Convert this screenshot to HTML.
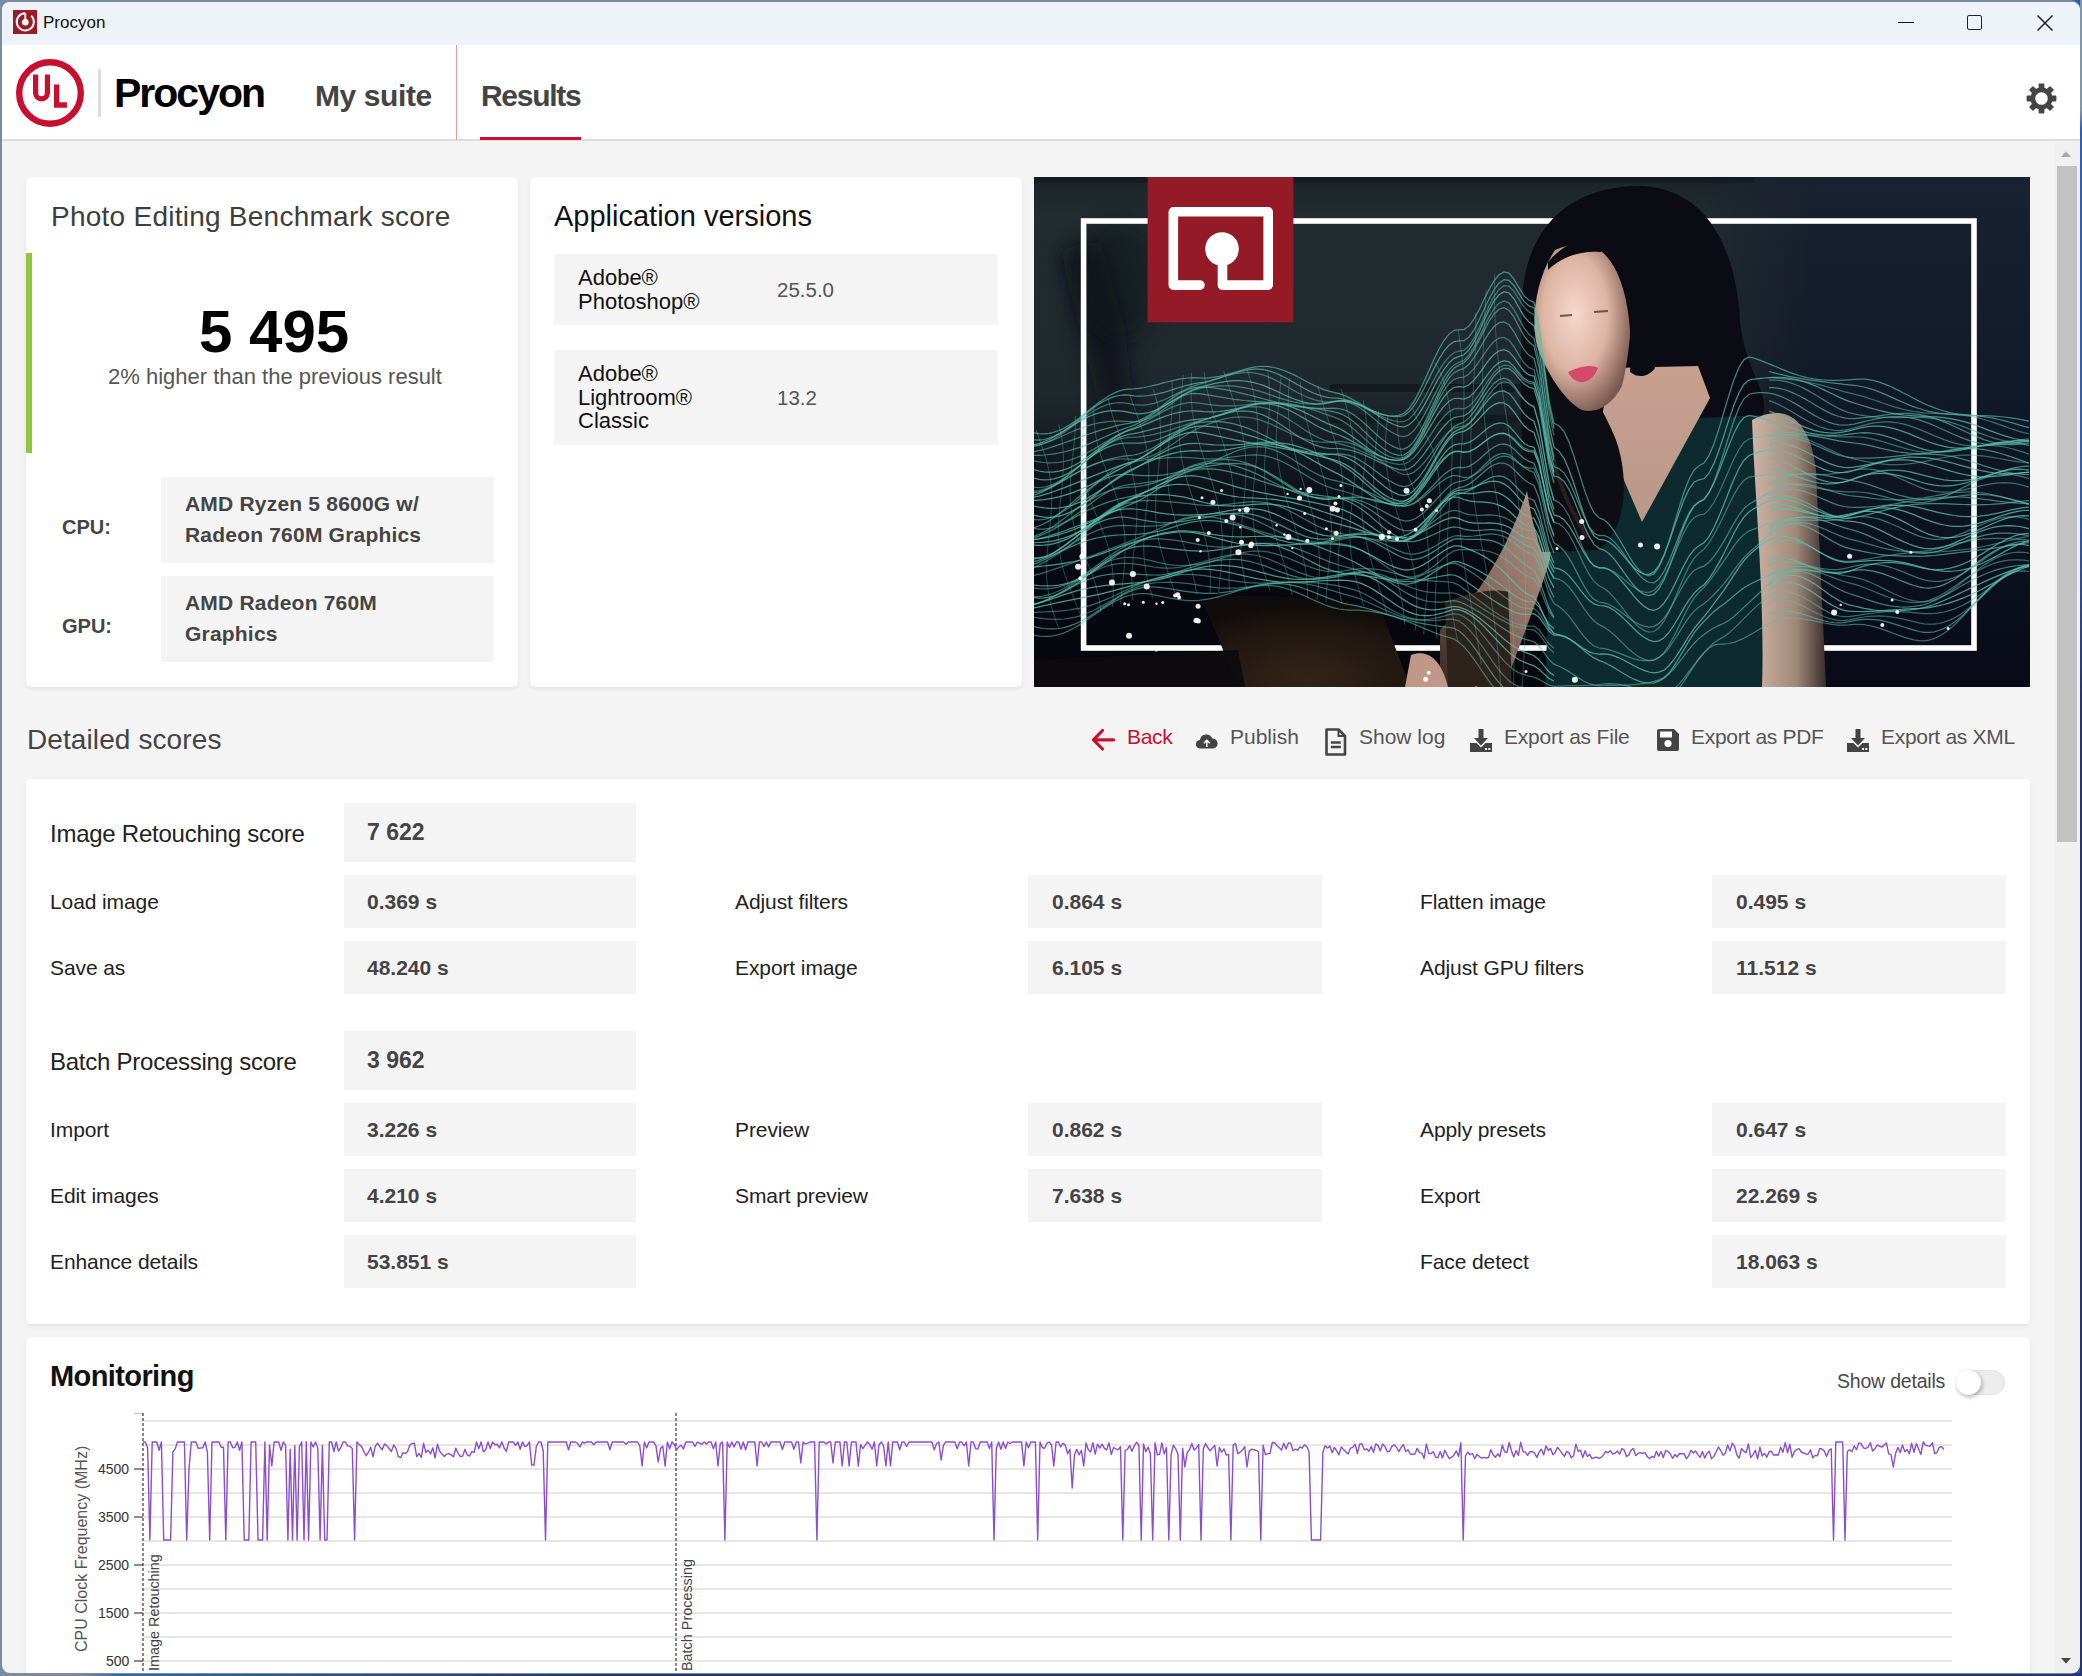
<!DOCTYPE html>
<html><head><meta charset="utf-8">
<style>
*{margin:0;padding:0;box-sizing:border-box}
html,body{width:2082px;height:1676px;overflow:hidden;background:#243a6e;font-family:"Liberation Sans",sans-serif}
.a{position:absolute}
.t{position:absolute;white-space:nowrap;line-height:1.149}
.card{position:absolute;background:#fff;border-radius:5px;box-shadow:0 2px 4px rgba(0,0,0,.08)}
.box{position:absolute;background:#f4f4f4}
</style></head><body>

<div class="a" style="left:0;top:0;width:2082px;height:1676px;background:linear-gradient(90deg,#6d8fb0 0,#5a7aa0 50%,#2c5cb8 100%)"></div>
<div class="a" style="left:0;top:1673px;width:2082px;height:3px;background:linear-gradient(90deg,#7f8b98 0,#7f8b98 80px,#2f6aa0 120px,#27366a 600px,#27366a 100%)"></div>
<div class="a" style="left:2080px;top:0;width:2px;height:1676px;background:linear-gradient(#7f97a8 0,#7f97a8 110px,#2e5cb8 130px,#2e5cb8 500px,#28356a 700px)"></div>
<div class="a" style="left:0;top:0;width:2080px;height:1674px;background:#7b8c9c;border-radius:9px 9px 9px 9px;overflow:hidden">
<div class="a" style="left:2px;top:2px;width:2078px;height:1671px;background:#f4f4f4;border-radius:8px 8px 8px 8px;overflow:hidden">
<div class="a" style="left:-2px;top:-2px;width:2082px;height:1676px">
<div class="a" style="left:0;top:0;width:2082px;height:45px;background:#eef2f9"></div>
<div class="a" style="left:13px;top:10px;width:24px;height:24px;background:#9a1a28"></div>
<svg class="a" style="left:13px;top:10px" width="24" height="24" viewBox="0 0 24 24"><path d="M18.2 5.6 A8.6 8.6 0 1 1 12.3 3.2" fill="none" stroke="#fff" stroke-width="1.9"/><line x1="12.3" y1="3.4" x2="12.3" y2="11" stroke="#fff" stroke-width="1.9"/><circle cx="12.3" cy="12.3" r="3.3" fill="#fff"/></svg>
<div class="t" style="left:43px;top:13.3px;font-size:17px;font-weight:400;color:#111;">Procyon</div>
<div class="a" style="left:1898px;top:22px;width:16px;height:1px;background:#111"></div>
<div class="a" style="left:1967px;top:15px;width:15px;height:15px;border:1.5px solid #222;border-radius:2px"></div>
<svg class="a" style="left:2036px;top:14px" width="18" height="18" viewBox="0 0 18 18"><path d="M1.5 1.5L16.5 16.5M16.5 1.5L1.5 16.5" stroke="#222" stroke-width="1.5"/></svg>
<div class="a" style="left:0;top:45px;width:2082px;height:94px;background:#fff"></div>
<div class="a" style="left:0;top:139px;width:2082px;height:2px;background:#dcdcdc"></div>
<svg class="a" style="left:14px;top:57px" width="72" height="72" viewBox="0 0 72 72"><circle cx="36" cy="36" r="30.8" fill="none" stroke="#c8102e" stroke-width="6.4"/><path d="M19 17.5h5.2v18.5a3.3 3.3 0 0 0 6.6 0V17.5H36v18.5a8.5 8.5 0 0 1-17 0z" fill="#c8102e"/><path d="M40 27.5h5.3v17.8h7.6v5.4H40z" fill="#c8102e"/></svg>
<div class="a" style="left:98px;top:69px;width:3px;height:48px;background:#dedede"></div>
<div class="t" style="left:114px;top:70.2px;font-size:41px;font-weight:700;color:#000;letter-spacing:-2px">Procyon</div>
<div class="t" style="left:315px;top:79.4px;font-size:30px;font-weight:700;color:#444;letter-spacing:-0.4px">My suite</div>
<div class="t" style="left:481px;top:79.4px;font-size:30px;font-weight:700;color:#444;letter-spacing:-1.3px">Results</div>
<div class="a" style="left:456px;top:45px;width:1px;height:95px;background:#e39aa3"></div>
<div class="a" style="left:480px;top:137px;width:101px;height:3px;background:#c8102e"></div>
<svg class="a" style="left:2021px;top:79px" width="41" height="40" viewBox="0 0 41 40"><rect x="17.6" y="4.6" width="5.8" height="8" rx="0.8" fill="#444" transform="rotate(0 20.5 19.5)"/><rect x="17.6" y="4.6" width="5.8" height="8" rx="0.8" fill="#444" transform="rotate(45 20.5 19.5)"/><rect x="17.6" y="4.6" width="5.8" height="8" rx="0.8" fill="#444" transform="rotate(90 20.5 19.5)"/><rect x="17.6" y="4.6" width="5.8" height="8" rx="0.8" fill="#444" transform="rotate(135 20.5 19.5)"/><rect x="17.6" y="4.6" width="5.8" height="8" rx="0.8" fill="#444" transform="rotate(180 20.5 19.5)"/><rect x="17.6" y="4.6" width="5.8" height="8" rx="0.8" fill="#444" transform="rotate(225 20.5 19.5)"/><rect x="17.6" y="4.6" width="5.8" height="8" rx="0.8" fill="#444" transform="rotate(270 20.5 19.5)"/><rect x="17.6" y="4.6" width="5.8" height="8" rx="0.8" fill="#444" transform="rotate(315 20.5 19.5)"/><circle cx="20.5" cy="19.5" r="11" fill="#444"/><circle cx="20.5" cy="19.5" r="6.3" fill="#fff"/></svg>
<div class="a" style="left:2055px;top:141px;width:25px;height:1535px;background:#f0f0f0"></div>
<svg class="a" style="left:2060px;top:150px" width="12" height="8"><path d="M1 7L6 1.5L11 7Z" fill="#a8a8a8"/></svg>
<div class="a" style="left:2057px;top:166px;width:20px;height:676px;background:#c2c2c2"></div>
<svg class="a" style="left:2060px;top:1657px" width="12" height="8"><path d="M1 1L6 6.5L11 1Z" fill="#444"/></svg>
<div class="card" style="left:26px;top:177px;width:492px;height:510px"></div>
<div class="t" style="left:51px;top:201.2px;font-size:28px;font-weight:400;color:#3d3d3d;letter-spacing:0.25px">Photo Editing Benchmark score</div>
<div class="a" style="left:26px;top:253px;width:6px;height:200px;background:#8dc63f"></div>
<div class="t" style="left:199px;top:297.7px;font-size:60px;font-weight:700;color:#000;">5 495</div>
<div class="t" style="left:108px;top:363.7px;font-size:22px;font-weight:400;color:#555;">2% higher than the previous result</div>
<div class="box" style="left:161px;top:477px;width:333px;height:86px"></div>
<div class="box" style="left:161px;top:576px;width:333px;height:86px"></div>
<div class="t" style="left:62px;top:515.6px;font-size:20px;font-weight:700;color:#444;">CPU:</div>
<div class="t" style="left:62px;top:614.6px;font-size:20px;font-weight:700;color:#444;">GPU:</div>
<div class="t" style="left:185px;top:491.7px;font-size:21px;font-weight:700;color:#444;letter-spacing:0.2px">AMD Ryzen 5 8600G w/</div>
<div class="t" style="left:185px;top:522.7px;font-size:21px;font-weight:700;color:#444;letter-spacing:0.2px">Radeon 760M Graphics</div>
<div class="t" style="left:185px;top:590.7px;font-size:21px;font-weight:700;color:#444;letter-spacing:0.2px">AMD Radeon 760M</div>
<div class="t" style="left:185px;top:621.7px;font-size:21px;font-weight:700;color:#444;letter-spacing:0.2px">Graphics</div>
<div class="card" style="left:530px;top:177px;width:492px;height:510px"></div>
<div class="t" style="left:554px;top:200.3px;font-size:29px;font-weight:400;color:#111;">Application versions</div>
<div class="box" style="left:554px;top:254px;width:444px;height:71px"></div>
<div class="box" style="left:554px;top:350px;width:444px;height:95px"></div>
<div class="t" style="left:578px;top:264.7px;font-size:22px;font-weight:400;color:#111;">Adobe®</div>
<div class="t" style="left:578px;top:288.7px;font-size:22px;font-weight:400;color:#111;">Photoshop®</div>
<div class="t" style="left:777px;top:278.1px;font-size:20.5px;font-weight:400;color:#555;">25.5.0</div>
<div class="t" style="left:578px;top:360.7px;font-size:22px;font-weight:400;color:#111;">Adobe®</div>
<div class="t" style="left:578px;top:384.7px;font-size:22px;font-weight:400;color:#111;">Lightroom®</div>
<div class="t" style="left:578px;top:407.7px;font-size:22px;font-weight:400;color:#111;">Classic</div>
<div class="t" style="left:777px;top:386.1px;font-size:20.5px;font-weight:400;color:#555;">13.2</div>
<svg class="a" style="left:1034px;top:177px" width="996" height="510" viewBox="0 0 996 510"><defs><linearGradient id="bg" x1="0" y1="0" x2="0" y2="1"><stop offset="0" stop-color="#1c2529"/><stop offset=".08" stop-color="#222c30"/><stop offset=".42" stop-color="#1f292d"/><stop offset=".62" stop-color="#0c1117"/><stop offset=".8" stop-color="#060810"/><stop offset="1" stop-color="#05070c"/></linearGradient><radialGradient id="face" cx=".42" cy=".42" r=".62"><stop offset="0" stop-color="#f4d8cc"/><stop offset=".55" stop-color="#ddb4a2"/><stop offset="1" stop-color="#7a5a50"/></radialGradient><linearGradient id="arm" x1="0" y1="0" x2="1" y2="0"><stop offset="0" stop-color="#cdb4a6"/><stop offset=".6" stop-color="#a08878"/><stop offset="1" stop-color="#3a2e2c"/></linearGradient><linearGradient id="neck" x1="0" y1="0" x2="0" y2="1"><stop offset="0" stop-color="#c8a090"/><stop offset="1" stop-color="#b89888"/></linearGradient><linearGradient id="larm" x1="1" y1="0" x2="0" y2="1"><stop offset="0" stop-color="#c8a898"/><stop offset=".6" stop-color="#8a6a5c"/><stop offset="1" stop-color="#3a2a24"/></linearGradient><radialGradient id="lap" cx=".5" cy=".9" r=".8"><stop offset="0" stop-color="#33241a"/><stop offset=".7" stop-color="#1e1610"/><stop offset="1" stop-color="#100c0b"/></radialGradient><linearGradient id="rbg" x1="0" y1="0" x2="0" y2="1"><stop offset="0" stop-color="#1a2130"/><stop offset=".45" stop-color="#111827"/><stop offset="1" stop-color="#080b16"/></linearGradient></defs><rect width="996" height="510" fill="url(#bg)"/><linearGradient id="rfade" x1="0" y1="0" x2="1" y2="0"><stop offset="0" stop-color="#000"/><stop offset=".35" stop-color="#fff"/></linearGradient><mask id="rm"><rect x="666" y="0" width="330" height="510" fill="url(#rfade)"/></mask><rect x="666" y="0" width="330" height="510" fill="url(#rbg)" mask="url(#rm)"/><rect x="0" y="0" width="720" height="6" fill="#10161a" opacity=".6"/><rect x="296" y="207" width="190" height="8" fill="#0f1519" opacity=".7"/><rect x="296" y="238" width="190" height="8" fill="#0f1519" opacity=".6"/><filter id="bl" x="-50%" y="-50%" width="200%" height="200%"><feGaussianBlur stdDeviation="10"/></filter><path d="M26.0 73.0 L66.0 63.0 L91.0 153.0 L101.0 243.0 L71.0 253.0 L46.0 153.0Z" fill="#0a1016" opacity=".7" filter="url(#bl)"/><ellipse cx="86" cy="103" rx="40" ry="60" fill="#0c1318" opacity=".5" filter="url(#bl)"/><rect x="49.59999999999991" y="44" width="890.4000000000001" height="427" fill="none" stroke="#fff" stroke-width="5.6"/><path d="M168.0 421.0 C226.0 415.0 306.0 423.0 348.0 435.0 L376.0 510.0 L204.0 510.0Z" fill="url(#lap)"/><path d="M0.0 483.0 L204.0 473.0 L211.0 510.0 L0.0 510.0Z" fill="#0d0b0c" opacity=".9"/><path d="M508.0 263.0 C494.0 323.0 468.0 383.0 438.0 421.0 L406.0 453.0 L406.0 510.0 L471.0 510.0 C486.0 463.0 514.0 403.0 532.0 323.0Z" fill="url(#larm)"/><path d="M411.0 425.0 C436.0 415.0 461.0 411.0 474.0 415.0 L478.0 510.0 L414.0 510.0Z" fill="#2e221d"/><path d="M377.0 478.0 C391.0 473.0 406.0 478.0 414.0 510.0 L371.0 510.0Z" fill="#c09888"/><path d="M521.0 263.0 L541.0 223.0 L668.0 218.0 L731.0 241.0 L738.0 510.0 L511.0 510.0Z" fill="#0d2a2e"/><path d="M718.0 243.0 C751.0 225.0 776.0 241.0 782.0 293.0 L792.0 510.0 L728.0 510.0 C731.0 423.0 721.0 323.0 718.0 243.0Z" fill="url(#arm)"/><path d="M488.0 143.0 C484.0 53.0 534.0 9.0 606.0 9.0 C674.0 11.0 702.0 73.0 706.0 143.0 C710.0 193.0 738.0 219.0 728.0 238.0 L666.0 241.0 L566.0 253.0 L496.0 253.0Z" fill="#0b0c13"/><path d="M578.0 191.0 L664.0 189.0 L676.0 221.0 L608.0 345.0 L566.0 248.0Z" fill="url(#neck)"/><path d="M488.0 143.0 C484.0 243.0 488.0 323.0 508.0 375.0 L564.0 373.0 C592.0 355.0 596.0 303.0 582.0 263.0 C570.0 233.0 551.0 203.0 536.0 183.0Z" fill="#0d0d14"/><path d="M514.0 253.0 C521.0 303.0 536.0 333.0 554.0 361.0" fill="none" stroke="#4a3028" stroke-width="4" opacity=".5"/><path d="M521.0 73.0 C546.0 61.0 581.0 67.0 594.0 89.0 C600.0 123.0 597.0 173.0 588.0 209.0 C578.0 229.0 561.0 237.0 548.0 233.0 C531.0 225.0 512.0 195.0 503.0 169.0 C497.0 143.0 501.0 103.0 521.0 73.0Z" fill="url(#face)"/><path d="M534.0 195.0 C546.0 189.0 558.0 187.0 564.0 191.0 C558.0 207.0 542.0 211.0 534.0 195.0Z" fill="#d44a6a"/><path d="M526.0 139.0 l12 -1 M560.0 135.0 l14 -1" stroke="#3a2420" stroke-width="2.2" opacity=".7"/><path d="M558.0 69.0 C590.0 81.0 600.0 143.0 596.0 195.0 C606.0 203.0 616.0 198.0 621.0 191.0 C618.0 143.0 612.0 73.0 582.0 57.0Z" fill="#0b0c13"/><path d="M514.0 85.0 C536.0 59.0 566.0 55.0 586.0 69.0 L566.0 75.0 C546.0 73.0 526.0 81.0 514.0 93.0Z" fill="#0b0c13"/><path d="M0.0 255.8 L5.0 256.6 L10.0 256.8 L15.0 256.3 L20.0 255.2 L25.0 253.5 L30.0 251.1 L35.0 248.2 L40.0 244.9 L45.0 241.2 L50.0 237.3 L55.0 233.3 L60.0 229.3 L65.0 225.5 L70.0 221.9 L75.0 218.8 L80.0 216.1 L85.0 214.1 L90.0 212.7 L95.0 212.1 L100.0 211.8 L105.0 211.3 L110.0 210.5 L115.0 209.5 L120.0 208.3 L125.0 207.1 L130.0 205.7 L135.0 204.5 L140.0 203.3 L145.0 202.2 L150.0 201.5 L155.0 200.9 L160.0 200.7 L165.0 200.8 L170.0 201.0 L175.0 200.8 L180.0 200.2 L185.0 199.4 L190.0 198.3 L195.0 196.9 L200.0 195.5 L205.0 194.0 L210.0 192.6 L215.0 191.2 L220.0 190.1 L225.0 189.5 L230.0 189.3 L235.0 189.7 L240.0 190.5 L245.0 191.8 L250.0 193.5 L255.0 195.6 L260.0 197.9 L265.0 200.5 L270.0 203.2 L275.0 205.8 L280.0 208.3 L285.0 210.6 L290.0 212.6 L295.0 214.2 L300.0 215.4 L305.0 216.6 L310.0 218.3 L315.0 220.6 L320.0 223.3 L325.0 226.1 L330.0 229.0 L335.0 231.8 L340.0 234.3 L345.0 236.4 L350.0 237.9 L355.0 238.8 L360.0 238.9 L365.0 238.3 L370.0 236.3 L375.0 231.5 L380.0 224.3 L385.0 215.1 L390.0 204.6 L395.0 193.4 L400.0 182.3 L405.0 172.1 L410.0 163.5 L415.0 157.1 L420.0 153.3 L425.0 152.5 L430.0 152.5 L435.0 148.9 L440.0 142.0 L445.0 132.9 L450.0 122.6 L455.0 112.6 L460.0 103.9 L465.0 97.8 L470.0 94.9 L475.0 96.1 L480.0 102.1 L485.0 110.7 L490.0 118.7 L495.0 123.3 L500.0 125.3 L505.0 147.2 L510.0 185.6 L515.0 224.0 L520.0 246.3" fill="none" stroke="#5cbfae" stroke-width="1.25" opacity="0.66"/><path d="M735.0 186.8 L740.0 188.9 L745.0 191.0 L750.0 193.1 L755.0 195.1 L760.0 196.9 L765.0 198.5 L770.0 199.8 L775.0 201.0 L780.0 201.9 L785.0 202.6 L790.0 203.0 L795.0 203.3 L800.0 203.3 L805.0 203.3 L810.0 203.1 L815.0 202.8 L820.0 202.4 L825.0 202.1 L830.0 202.2 L835.0 202.7 L840.0 203.7 L845.0 205.1 L850.0 206.8 L855.0 208.8 L860.0 211.1 L865.0 213.6 L870.0 216.2 L875.0 218.8 L880.0 221.5 L885.0 224.1 L890.0 226.5 L895.0 228.7 L900.0 230.7 L905.0 232.5 L910.0 234.0 L915.0 235.3 L920.0 236.3 L925.0 237.0 L930.0 237.6 L935.0 238.0 L940.0 238.3 L945.0 238.5 L950.0 238.7 L955.0 238.9 L960.0 239.2 L965.0 239.5 L970.0 240.0 L975.0 240.6 L980.0 241.3 L985.0 242.1 L990.0 243.1 L995.0 244.1" fill="none" stroke="#5cbfae" stroke-width="1.25" opacity="0.66"/><path d="M520.0 246.3 L525.0 248.8 L530.0 254.4 L535.0 265.1 L540.0 279.4 L545.0 295.6 L550.0 311.6 L555.0 325.6 L560.0 335.7 L565.0 340.8 L570.0 342.9 L575.0 347.3 L580.0 353.8 L585.0 361.7 L590.0 370.4 L595.0 379.0 L600.0 386.9 L605.0 393.1 L610.0 397.2 L615.0 398.8 L620.0 396.9 L625.0 390.0 L630.0 378.8 L635.0 364.2 L640.0 347.8 L645.0 330.9 L650.0 315.3 L655.0 302.3 L660.0 293.2 L665.0 288.8 L670.0 286.1 L675.0 278.6 L680.0 266.7 L685.0 251.6 L690.0 234.8 L695.0 217.9 L700.0 202.5 L705.0 190.4 L710.0 182.6 L715.0 180.0 L720.0 181.2 L725.0 182.9 L730.0 184.8 L735.0 186.8" fill="none" stroke="#5cbfae" stroke-width="1.25" opacity="0.66"/><path d="M0.0 262.8 L5.0 263.0 L10.0 262.5 L15.0 261.2 L20.0 259.3 L25.0 256.8 L30.0 253.7 L35.0 250.2 L40.0 246.4 L45.0 242.4 L50.0 238.3 L55.0 234.3 L60.0 230.5 L65.0 227.1 L70.0 224.0 L75.0 221.6 L80.0 219.7 L85.0 218.5 L90.0 218.0 L95.0 218.2 L100.0 218.8 L105.0 219.1 L110.0 219.0 L115.0 218.5 L120.0 217.7 L125.0 216.6 L130.0 215.3 L135.0 213.8 L140.0 212.2 L145.0 210.7 L150.0 209.2 L155.0 207.8 L160.0 206.7 L165.0 205.9 L170.0 205.1 L175.0 204.0 L180.0 202.7 L185.0 201.2 L190.0 199.5 L195.0 197.9 L200.0 196.3 L205.0 194.8 L210.0 193.6 L215.0 192.6 L220.0 192.1 L225.0 192.1 L230.0 192.7 L235.0 193.9 L240.0 195.5 L245.0 197.6 L250.0 200.0 L255.0 202.7 L260.0 205.6 L265.0 208.5 L270.0 211.3 L275.0 213.9 L280.0 216.3 L285.0 218.2 L290.0 219.7 L295.0 220.6 L300.0 221.0 L305.0 221.4 L310.0 222.3 L315.0 223.7 L320.0 225.4 L325.0 227.5 L330.0 229.8 L335.0 232.1 L340.0 234.3 L345.0 236.3 L350.0 237.9 L355.0 239.0 L360.0 239.7 L365.0 239.7 L370.0 238.6 L375.0 234.8 L380.0 228.8 L385.0 220.8 L390.0 211.5 L395.0 201.4 L400.0 191.4 L405.0 182.1 L410.0 174.2 L415.0 168.3 L420.0 164.7 L425.0 163.9 L430.0 163.7 L435.0 159.9 L440.0 152.8 L445.0 143.3 L450.0 132.6 L455.0 122.1 L460.0 112.9 L465.0 106.2 L470.0 102.7 L475.0 103.4 L480.0 108.7 L485.0 116.7 L490.0 124.4 L495.0 128.9 L500.0 131.0 L505.0 152.7 L510.0 190.7 L515.0 228.9 L520.0 251.4" fill="none" stroke="#5cbfae" stroke-width="1.25" opacity="0.68"/><path d="M735.0 194.5 L740.0 195.8 L745.0 197.0 L750.0 198.2 L755.0 199.3 L760.0 200.3 L765.0 201.2 L770.0 202.1 L775.0 202.9 L780.0 203.6 L785.0 204.2 L790.0 204.9 L795.0 205.5 L800.0 206.1 L805.0 206.7 L810.0 207.3 L815.0 207.8 L820.0 208.4 L825.0 209.0 L830.0 210.0 L835.0 211.3 L840.0 212.9 L845.0 214.8 L850.0 216.9 L855.0 219.1 L860.0 221.4 L865.0 223.6 L870.0 225.8 L875.0 227.9 L880.0 229.8 L885.0 231.5 L890.0 233.0 L895.0 234.3 L900.0 235.3 L905.0 236.1 L910.0 236.7 L915.0 237.2 L920.0 237.5 L925.0 237.8 L930.0 238.0 L935.0 238.3 L940.0 238.7 L945.0 239.1 L950.0 239.7 L955.0 240.5 L960.0 241.4 L965.0 242.5 L970.0 243.7 L975.0 245.0 L980.0 246.4 L985.0 247.8 L990.0 249.3 L995.0 250.6" fill="none" stroke="#5cbfae" stroke-width="1.25" opacity="0.68"/><path d="M0.0 268.4 L5.0 267.8 L10.0 266.4 L15.0 264.4 L20.0 261.9 L25.0 258.8 L30.0 255.4 L35.0 251.8 L40.0 248.0 L45.0 244.1 L50.0 240.4 L55.0 237.0 L60.0 233.8 L65.0 231.1 L70.0 228.9 L75.0 227.2 L80.0 226.2 L85.0 225.7 L90.0 225.9 L95.0 226.6 L100.0 227.6 L105.0 228.0 L110.0 228.0 L115.0 227.4 L120.0 226.3 L125.0 224.7 L130.0 222.8 L135.0 220.5 L140.0 218.1 L145.0 215.6 L150.0 213.2 L155.0 210.9 L160.0 208.9 L165.0 207.3 L170.0 205.9 L175.0 204.3 L180.0 202.7 L185.0 201.1 L190.0 199.5 L195.0 198.1 L200.0 197.0 L205.0 196.2 L210.0 195.7 L215.0 195.5 L220.0 195.9 L225.0 196.8 L230.0 198.2 L235.0 200.1 L240.0 202.4 L245.0 205.0 L250.0 207.9 L255.0 210.7 L260.0 213.6 L265.0 216.3 L270.0 218.8 L275.0 220.9 L280.0 222.7 L285.0 223.9 L290.0 224.6 L295.0 224.8 L300.0 224.4 L305.0 224.0 L310.0 224.3 L315.0 225.1 L320.0 226.5 L325.0 228.3 L330.0 230.5 L335.0 233.0 L340.0 235.5 L345.0 238.0 L350.0 240.3 L355.0 242.3 L360.0 243.8 L365.0 244.9 L370.0 244.7 L375.0 242.0 L380.0 237.0 L385.0 230.0 L390.0 221.5 L395.0 212.2 L400.0 202.6 L405.0 193.6 L410.0 185.8 L415.0 179.6 L420.0 175.7 L425.0 174.2 L430.0 173.4 L435.0 168.8 L440.0 161.1 L445.0 151.1 L450.0 139.9 L455.0 128.9 L460.0 119.4 L465.0 112.4 L470.0 108.7 L475.0 109.2 L480.0 114.4 L485.0 122.4 L490.0 130.2 L495.0 135.0 L500.0 137.7 L505.0 159.6 L510.0 197.5 L515.0 235.6 L520.0 258.4" fill="none" stroke="#5cbfae" stroke-width="1.25" opacity="0.52"/><path d="M735.0 200.5 L740.0 200.9 L745.0 201.3 L750.0 201.8 L755.0 202.3 L760.0 202.9 L765.0 203.6 L770.0 204.5 L775.0 205.4 L780.0 206.5 L785.0 207.6 L790.0 208.9 L795.0 210.3 L800.0 211.7 L805.0 213.1 L810.0 214.6 L815.0 215.9 L820.0 217.2 L825.0 218.3 L830.0 219.7 L835.0 221.3 L840.0 223.0 L845.0 224.7 L850.0 226.5 L855.0 228.2 L860.0 229.8 L865.0 231.2 L870.0 232.5 L875.0 233.6 L880.0 234.5 L885.0 235.2 L890.0 235.8 L895.0 236.2 L900.0 236.5 L905.0 236.7 L910.0 236.9 L915.0 237.1 L920.0 237.4 L925.0 237.8 L930.0 238.4 L935.0 239.1 L940.0 240.0 L945.0 241.2 L950.0 242.5 L955.0 244.0 L960.0 245.6 L965.0 247.4 L970.0 249.2 L975.0 251.0 L980.0 252.7 L985.0 254.3 L990.0 255.7 L995.0 256.9" fill="none" stroke="#5cbfae" stroke-width="1.25" opacity="0.52"/><path d="M0.0 267.8 L5.0 266.5 L10.0 264.7 L15.0 262.5 L20.0 259.8 L25.0 256.9 L30.0 253.9 L35.0 250.7 L40.0 247.6 L45.0 244.7 L50.0 241.9 L55.0 239.5 L60.0 237.4 L65.0 235.8 L70.0 234.6 L75.0 233.9 L80.0 233.6 L85.0 233.8 L90.0 234.4 L95.0 235.4 L100.0 236.4 L105.0 236.8 L110.0 236.4 L115.0 235.5 L120.0 233.9 L125.0 231.7 L130.0 229.1 L135.0 226.2 L140.0 223.2 L145.0 220.1 L150.0 217.2 L155.0 214.5 L160.0 212.3 L165.0 210.6 L170.0 209.2 L175.0 207.9 L180.0 206.7 L185.0 205.6 L190.0 204.7 L195.0 204.1 L200.0 203.7 L205.0 203.7 L210.0 204.0 L215.0 204.6 L220.0 205.6 L225.0 207.0 L230.0 208.7 L235.0 210.8 L240.0 213.0 L245.0 215.3 L250.0 217.7 L255.0 219.9 L260.0 222.0 L265.0 223.7 L270.0 225.2 L275.0 226.2 L280.0 226.8 L285.0 227.0 L290.0 226.7 L295.0 225.9 L300.0 224.8 L305.0 223.8 L310.0 223.7 L315.0 224.2 L320.0 225.5 L325.0 227.5 L330.0 230.0 L335.0 232.9 L340.0 236.0 L345.0 239.2 L350.0 242.3 L355.0 245.1 L360.0 247.5 L365.0 249.3 L370.0 249.9 L375.0 247.8 L380.0 243.4 L385.0 236.8 L390.0 228.6 L395.0 219.4 L400.0 209.9 L405.0 200.7 L410.0 192.5 L415.0 185.8 L420.0 181.3 L425.0 179.3 L430.0 177.8 L435.0 172.9 L440.0 164.9 L445.0 154.8 L450.0 143.8 L455.0 133.2 L460.0 124.2 L465.0 117.8 L470.0 114.7 L475.0 116.0 L480.0 121.9 L485.0 130.7 L490.0 139.3 L495.0 145.1 L500.0 148.7 L505.0 171.2 L510.0 209.1 L515.0 247.2 L520.0 270.1" fill="none" stroke="#5cbfae" stroke-width="1.25" opacity="0.75"/><path d="M735.0 200.6 L740.0 200.4 L745.0 200.4 L750.0 200.6 L755.0 201.2 L760.0 202.0 L765.0 203.2 L770.0 204.6 L775.0 206.4 L780.0 208.4 L785.0 210.5 L790.0 212.9 L795.0 215.3 L800.0 217.7 L805.0 220.1 L810.0 222.3 L815.0 224.3 L820.0 226.0 L825.0 227.5 L830.0 229.0 L835.0 230.6 L840.0 232.0 L845.0 233.4 L850.0 234.6 L855.0 235.7 L860.0 236.6 L865.0 237.4 L870.0 238.0 L875.0 238.4 L880.0 238.8 L885.0 239.1 L890.0 239.3 L895.0 239.6 L900.0 239.9 L905.0 240.2 L910.0 240.7 L915.0 241.4 L920.0 242.3 L925.0 243.4 L930.0 244.6 L935.0 246.1 L940.0 247.7 L945.0 249.5 L950.0 251.4 L955.0 253.3 L960.0 255.2 L965.0 257.0 L970.0 258.7 L975.0 260.2 L980.0 261.5 L985.0 262.5 L990.0 263.1 L995.0 263.4" fill="none" stroke="#5cbfae" stroke-width="1.25" opacity="0.75"/><path d="M520.0 270.1 L525.0 274.4 L530.0 281.3 L535.0 292.7 L540.0 307.0 L545.0 322.7 L550.0 337.8 L555.0 350.4 L560.0 359.0 L565.0 362.4 L570.0 362.8 L575.0 364.9 L580.0 368.7 L585.0 373.8 L590.0 379.6 L595.0 385.4 L600.0 390.7 L605.0 394.7 L610.0 397.0 L615.0 397.4 L620.0 394.9 L625.0 388.3 L630.0 378.1 L635.0 365.1 L640.0 350.6 L645.0 336.1 L650.0 322.8 L655.0 312.2 L660.0 305.3 L665.0 302.8 L670.0 301.8 L675.0 296.2 L680.0 286.4 L685.0 273.3 L690.0 258.2 L695.0 242.6 L700.0 227.9 L705.0 215.7 L710.0 207.2 L715.0 203.1 L720.0 202.2 L725.0 201.6 L730.0 201.0 L735.0 200.6" fill="none" stroke="#5cbfae" stroke-width="1.25" opacity="0.75"/><path d="M0.0 269.3 L5.0 268.1 L10.0 266.5 L15.0 264.7 L20.0 262.6 L25.0 260.5 L30.0 258.2 L35.0 256.0 L40.0 253.9 L45.0 251.8 L50.0 250.0 L55.0 248.4 L60.0 247.0 L65.0 245.9 L70.0 245.1 L75.0 244.5 L80.0 244.2 L85.0 244.1 L90.0 244.3 L95.0 244.6 L100.0 244.9 L105.0 244.3 L110.0 243.1 L115.0 241.1 L120.0 238.5 L125.0 235.4 L130.0 232.0 L135.0 228.4 L140.0 224.7 L145.0 221.2 L150.0 218.0 L155.0 215.3 L160.0 213.1 L165.0 211.6 L170.0 210.7 L175.0 209.9 L180.0 209.3 L185.0 208.9 L190.0 208.8 L195.0 208.9 L200.0 209.2 L205.0 209.8 L210.0 210.6 L215.0 211.6 L220.0 212.7 L225.0 214.1 L230.0 215.7 L235.0 217.3 L240.0 219.1 L245.0 220.8 L250.0 222.4 L255.0 223.8 L260.0 225.0 L265.0 225.9 L270.0 226.6 L275.0 226.9 L280.0 227.0 L285.0 226.7 L290.0 226.2 L295.0 225.4 L300.0 224.4 L305.0 223.8 L310.0 224.1 L315.0 225.3 L320.0 227.4 L325.0 230.3 L330.0 233.7 L335.0 237.6 L340.0 241.8 L345.0 245.9 L350.0 249.9 L355.0 253.5 L360.0 256.5 L365.0 258.8 L370.0 259.7 L375.0 257.9 L380.0 253.4 L385.0 246.8 L390.0 238.4 L395.0 228.8 L400.0 218.9 L405.0 209.1 L410.0 200.3 L415.0 193.1 L420.0 187.9 L425.0 185.3 L430.0 183.3 L435.0 178.2 L440.0 170.3 L445.0 160.5 L450.0 150.0 L455.0 140.1 L460.0 131.8 L465.0 126.2 L470.0 124.0 L475.0 126.0 L480.0 132.6 L485.0 141.9 L490.0 151.0 L495.0 157.3 L500.0 161.3 L505.0 183.6 L510.0 220.8 L515.0 258.0 L520.0 280.2" fill="none" stroke="#5cbfae" stroke-width="1.25" opacity="0.57"/><path d="M735.0 203.2 L740.0 203.1 L745.0 203.4 L750.0 204.2 L755.0 205.4 L760.0 207.0 L765.0 209.0 L770.0 211.4 L775.0 214.1 L780.0 217.0 L785.0 220.0 L790.0 223.1 L795.0 226.1 L800.0 229.0 L805.0 231.6 L810.0 233.8 L815.0 235.6 L820.0 236.9 L825.0 237.9 L830.0 238.7 L835.0 239.3 L840.0 239.8 L845.0 240.2 L850.0 240.4 L855.0 240.5 L860.0 240.5 L865.0 240.5 L870.0 240.4 L875.0 240.3 L880.0 240.3 L885.0 240.5 L890.0 240.7 L895.0 241.1 L900.0 241.7 L905.0 242.5 L910.0 243.6 L915.0 244.9 L920.0 246.3 L925.0 248.0 L930.0 249.8 L935.0 251.8 L940.0 253.8 L945.0 255.8 L950.0 257.7 L955.0 259.5 L960.0 261.1 L965.0 262.5 L970.0 263.6 L975.0 264.4 L980.0 264.9 L985.0 265.0 L990.0 264.7 L995.0 264.1" fill="none" stroke="#5cbfae" stroke-width="1.25" opacity="0.57"/><path d="M0.0 274.7 L5.0 273.7 L10.0 272.5 L15.0 271.0 L20.0 269.4 L25.0 267.7 L30.0 266.0 L35.0 264.2 L40.0 262.3 L45.0 260.5 L50.0 258.7 L55.0 257.0 L60.0 255.3 L65.0 253.7 L70.0 252.2 L75.0 250.8 L80.0 249.4 L85.0 248.2 L90.0 247.2 L95.0 246.3 L100.0 245.2 L105.0 243.5 L110.0 241.1 L115.0 238.2 L120.0 234.8 L125.0 231.2 L130.0 227.4 L135.0 223.6 L140.0 220.0 L145.0 216.8 L150.0 214.1 L155.0 212.0 L160.0 210.6 L165.0 210.1 L170.0 210.1 L175.0 210.4 L180.0 210.9 L185.0 211.6 L190.0 212.4 L195.0 213.4 L200.0 214.5 L205.0 215.6 L210.0 216.8 L215.0 218.0 L220.0 219.3 L225.0 220.6 L230.0 222.0 L235.0 223.3 L240.0 224.7 L245.0 226.0 L250.0 227.1 L255.0 228.2 L260.0 229.1 L265.0 229.8 L270.0 230.4 L275.0 230.9 L280.0 231.1 L285.0 231.3 L290.0 231.3 L295.0 231.3 L300.0 231.1 L305.0 231.5 L310.0 232.8 L315.0 235.0 L320.0 238.0 L325.0 241.8 L330.0 246.0 L335.0 250.6 L340.0 255.2 L345.0 259.7 L350.0 263.8 L355.0 267.2 L360.0 269.9 L365.0 271.8 L370.0 272.0 L375.0 269.4 L380.0 264.1 L385.0 256.5 L390.0 247.1 L395.0 236.6 L400.0 225.6 L405.0 214.9 L410.0 205.2 L415.0 197.2 L420.0 191.3 L425.0 188.1 L430.0 185.8 L435.0 180.6 L440.0 172.9 L445.0 163.6 L450.0 153.8 L455.0 144.5 L460.0 137.0 L465.0 132.2 L470.0 130.7 L475.0 133.2 L480.0 140.2 L485.0 149.7 L490.0 158.8 L495.0 165.0 L500.0 168.9 L505.0 190.5 L510.0 226.4 L515.0 262.2 L520.0 283.3" fill="none" stroke="#5cbfae" stroke-width="1.25" opacity="0.64"/><path d="M735.0 210.6 L740.0 210.7 L745.0 211.4 L750.0 212.5 L755.0 214.2 L760.0 216.3 L765.0 218.7 L770.0 221.4 L775.0 224.3 L780.0 227.3 L785.0 230.3 L790.0 233.1 L795.0 235.6 L800.0 237.8 L805.0 239.5 L810.0 240.8 L815.0 241.5 L820.0 241.6 L825.0 241.2 L830.0 240.7 L835.0 240.1 L840.0 239.5 L845.0 238.8 L850.0 238.1 L855.0 237.5 L860.0 236.9 L865.0 236.6 L870.0 236.4 L875.0 236.4 L880.0 236.8 L885.0 237.4 L890.0 238.4 L895.0 239.6 L900.0 241.0 L905.0 242.8 L910.0 244.8 L915.0 246.9 L920.0 249.2 L925.0 251.6 L930.0 254.0 L935.0 256.3 L940.0 258.6 L945.0 260.7 L950.0 262.6 L955.0 264.2 L960.0 265.5 L965.0 266.5 L970.0 267.2 L975.0 267.5 L980.0 267.5 L985.0 267.2 L990.0 266.6 L995.0 265.8" fill="none" stroke="#5cbfae" stroke-width="1.25" opacity="0.64"/><path d="M0.0 278.3 L5.0 278.3 L10.0 278.0 L15.0 277.5 L20.0 276.9 L25.0 276.0 L30.0 275.0 L35.0 273.7 L40.0 272.2 L45.0 270.6 L50.0 268.8 L55.0 266.8 L60.0 264.7 L65.0 262.6 L70.0 260.3 L75.0 258.1 L80.0 255.8 L85.0 253.7 L90.0 251.7 L95.0 250.0 L100.0 248.1 L105.0 245.8 L110.0 242.9 L115.0 239.7 L120.0 236.2 L125.0 232.7 L130.0 229.2 L135.0 225.8 L140.0 222.8 L145.0 220.3 L150.0 218.3 L155.0 217.0 L160.0 216.4 L165.0 216.6 L170.0 217.3 L175.0 218.1 L180.0 218.9 L185.0 219.8 L190.0 220.7 L195.0 221.5 L200.0 222.3 L205.0 222.9 L210.0 223.5 L215.0 223.9 L220.0 224.3 L225.0 224.7 L230.0 225.1 L235.0 225.6 L240.0 226.1 L245.0 226.6 L250.0 227.2 L255.0 227.8 L260.0 228.4 L265.0 229.1 L270.0 229.8 L275.0 230.6 L280.0 231.4 L285.0 232.2 L290.0 233.1 L295.0 233.9 L300.0 234.8 L305.0 236.1 L310.0 238.3 L315.0 241.3 L320.0 245.1 L325.0 249.4 L330.0 254.1 L335.0 259.0 L340.0 263.7 L345.0 268.1 L350.0 271.9 L355.0 275.0 L360.0 277.2 L365.0 278.4 L370.0 278.0 L375.0 274.7 L380.0 268.9 L385.0 260.8 L390.0 251.0 L395.0 240.2 L400.0 229.2 L405.0 218.5 L410.0 209.0 L415.0 201.2 L420.0 195.7 L425.0 193.1 L430.0 191.5 L435.0 187.3 L440.0 180.7 L445.0 172.6 L450.0 164.0 L455.0 155.9 L460.0 149.6 L465.0 145.7 L470.0 144.8 L475.0 147.7 L480.0 154.8 L485.0 164.0 L490.0 172.7 L495.0 178.3 L500.0 181.5 L505.0 201.9 L510.0 236.1 L515.0 270.1 L520.0 289.6" fill="none" stroke="#5cbfae" stroke-width="1.25" opacity="0.64"/><path d="M735.0 216.1 L740.0 217.1 L745.0 218.7 L750.0 220.7 L755.0 223.2 L760.0 225.9 L765.0 228.9 L770.0 232.0 L775.0 235.1 L780.0 238.1 L785.0 240.8 L790.0 243.3 L795.0 245.3 L800.0 246.8 L805.0 247.8 L810.0 248.1 L815.0 247.9 L820.0 247.1 L825.0 245.9 L830.0 244.7 L835.0 243.5 L840.0 242.3 L845.0 241.3 L850.0 240.5 L855.0 239.9 L860.0 239.6 L865.0 239.6 L870.0 239.9 L875.0 240.6 L880.0 241.6 L885.0 242.9 L890.0 244.6 L895.0 246.4 L900.0 248.5 L905.0 250.7 L910.0 253.0 L915.0 255.2 L920.0 257.5 L925.0 259.6 L930.0 261.6 L935.0 263.3 L940.0 264.8 L945.0 266.0 L950.0 266.9 L955.0 267.5 L960.0 267.7 L965.0 267.7 L970.0 267.4 L975.0 266.9 L980.0 266.2 L985.0 265.4 L990.0 264.5 L995.0 263.6" fill="none" stroke="#5cbfae" stroke-width="1.25" opacity="0.64"/><path d="M520.0 289.6 L525.0 291.6 L530.0 295.9 L535.0 304.1 L540.0 315.2 L545.0 327.6 L550.0 339.6 L555.0 349.6 L560.0 356.2 L565.0 358.6 L570.0 358.5 L575.0 360.5 L580.0 364.6 L585.0 370.4 L590.0 377.3 L595.0 384.6 L600.0 391.7 L605.0 397.8 L610.0 402.6 L615.0 405.5 L620.0 405.8 L625.0 402.0 L630.0 394.5 L635.0 384.0 L640.0 371.7 L645.0 358.7 L650.0 346.4 L655.0 336.1 L660.0 328.7 L665.0 325.1 L670.0 322.7 L675.0 315.7 L680.0 304.7 L685.0 290.7 L690.0 275.0 L695.0 258.7 L700.0 243.5 L705.0 230.8 L710.0 221.8 L715.0 217.2 L720.0 216.1 L725.0 215.6 L730.0 215.6 L735.0 216.1" fill="none" stroke="#5cbfae" stroke-width="1.25" opacity="0.64"/><path d="M0.0 283.9 L5.0 284.8 L10.0 285.5 L15.0 285.8 L20.0 285.7 L25.0 285.3 L30.0 284.5 L35.0 283.3 L40.0 281.7 L45.0 279.7 L50.0 277.4 L55.0 274.9 L60.0 272.1 L65.0 269.1 L70.0 266.1 L75.0 263.0 L80.0 260.1 L85.0 257.3 L90.0 254.8 L95.0 252.7 L100.0 250.7 L105.0 248.3 L110.0 245.6 L115.0 242.8 L120.0 239.8 L125.0 236.9 L130.0 234.1 L135.0 231.6 L140.0 229.4 L145.0 227.7 L150.0 226.4 L155.0 225.7 L160.0 225.6 L165.0 226.1 L170.0 226.9 L175.0 227.6 L180.0 228.2 L185.0 228.6 L190.0 228.9 L195.0 228.9 L200.0 228.8 L205.0 228.5 L210.0 228.0 L215.0 227.4 L220.0 226.7 L225.0 226.2 L230.0 225.8 L235.0 225.6 L240.0 225.5 L245.0 225.7 L250.0 226.1 L255.0 226.8 L260.0 227.7 L265.0 228.8 L270.0 230.1 L275.0 231.6 L280.0 233.2 L285.0 234.9 L290.0 236.7 L295.0 238.4 L300.0 240.1 L305.0 242.1 L310.0 244.9 L315.0 248.3 L320.0 252.2 L325.0 256.6 L330.0 261.1 L335.0 265.6 L340.0 269.9 L345.0 273.7 L350.0 276.9 L355.0 279.3 L360.0 280.8 L365.0 281.4 L370.0 280.4 L375.0 276.7 L380.0 270.7 L385.0 262.6 L390.0 253.0 L395.0 242.6 L400.0 232.1 L405.0 222.2 L410.0 213.5 L415.0 206.7 L420.0 202.2 L425.0 200.6 L430.0 200.1 L435.0 197.0 L440.0 191.6 L445.0 184.7 L450.0 177.3 L455.0 170.2 L460.0 164.5 L465.0 161.1 L470.0 160.5 L475.0 163.2 L480.0 169.7 L485.0 178.2 L490.0 186.0 L495.0 190.6 L500.0 192.8 L505.0 211.6 L510.0 244.0 L515.0 276.2 L520.0 294.3" fill="none" stroke="#5cbfae" stroke-width="1.25" opacity="0.55"/><path d="M735.0 223.6 L740.0 225.4 L745.0 227.6 L750.0 230.2 L755.0 233.0 L760.0 236.0 L765.0 239.1 L770.0 242.0 L775.0 244.8 L780.0 247.3 L785.0 249.5 L790.0 251.2 L795.0 252.5 L800.0 253.3 L805.0 253.5 L810.0 253.2 L815.0 252.3 L820.0 251.0 L825.0 249.5 L830.0 248.1 L835.0 246.9 L840.0 245.9 L845.0 245.3 L850.0 244.9 L855.0 244.9 L860.0 245.3 L865.0 246.0 L870.0 247.1 L875.0 248.6 L880.0 250.3 L885.0 252.2 L890.0 254.3 L895.0 256.4 L900.0 258.6 L905.0 260.6 L910.0 262.6 L915.0 264.3 L920.0 265.9 L925.0 267.1 L930.0 268.1 L935.0 268.7 L940.0 269.0 L945.0 269.1 L950.0 268.8 L955.0 268.3 L960.0 267.6 L965.0 266.7 L970.0 265.8 L975.0 264.8 L980.0 263.9 L985.0 263.1 L990.0 262.4 L995.0 261.9" fill="none" stroke="#5cbfae" stroke-width="1.25" opacity="0.55"/><path d="M0.0 292.7 L5.0 294.0 L10.0 294.8 L15.0 295.1 L20.0 294.9 L25.0 294.1 L30.0 292.8 L35.0 290.9 L40.0 288.5 L45.0 285.7 L50.0 282.5 L55.0 279.0 L60.0 275.3 L65.0 271.6 L70.0 267.8 L75.0 264.2 L80.0 260.9 L85.0 257.9 L90.0 255.4 L95.0 253.4 L100.0 251.8 L105.0 249.9 L110.0 247.9 L115.0 245.8 L120.0 243.7 L125.0 241.7 L130.0 239.7 L135.0 238.0 L140.0 236.5 L145.0 235.3 L150.0 234.5 L155.0 234.0 L160.0 233.9 L165.0 234.2 L170.0 234.7 L175.0 234.9 L180.0 234.8 L185.0 234.5 L190.0 233.9 L195.0 233.1 L200.0 232.1 L205.0 231.0 L210.0 229.8 L215.0 228.5 L220.0 227.4 L225.0 226.5 L230.0 226.0 L235.0 225.8 L240.0 226.0 L245.0 226.7 L250.0 227.7 L255.0 229.1 L260.0 230.8 L265.0 232.8 L270.0 235.1 L275.0 237.5 L280.0 240.0 L285.0 242.5 L290.0 244.9 L295.0 247.2 L300.0 249.2 L305.0 251.3 L310.0 254.1 L315.0 257.2 L320.0 260.7 L325.0 264.5 L330.0 268.3 L335.0 272.0 L340.0 275.4 L345.0 278.3 L350.0 280.6 L355.0 282.3 L360.0 283.1 L365.0 283.2 L370.0 281.9 L375.0 278.2 L380.0 272.3 L385.0 264.6 L390.0 255.6 L395.0 246.0 L400.0 236.4 L405.0 227.5 L410.0 219.9 L415.0 214.0 L420.0 210.5 L425.0 209.7 L430.0 210.1 L435.0 207.8 L440.0 203.1 L445.0 196.9 L450.0 189.8 L455.0 183.0 L460.0 177.4 L465.0 173.8 L470.0 172.7 L475.0 174.7 L480.0 180.3 L485.0 187.6 L490.0 194.2 L495.0 197.9 L500.0 199.1 L505.0 216.7 L510.0 247.5 L515.0 278.3 L520.0 295.7" fill="none" stroke="#5cbfae" stroke-width="1.25" opacity="0.76"/><path d="M735.0 234.0 L740.0 235.9 L745.0 238.1 L750.0 240.5 L755.0 242.9 L760.0 245.3 L765.0 247.7 L770.0 249.8 L775.0 251.7 L780.0 253.3 L785.0 254.6 L790.0 255.4 L795.0 255.9 L800.0 256.0 L805.0 255.7 L810.0 254.9 L815.0 253.9 L820.0 252.6 L825.0 251.2 L830.0 250.1 L835.0 249.4 L840.0 249.1 L845.0 249.1 L850.0 249.6 L855.0 250.4 L860.0 251.6 L865.0 253.1 L870.0 254.8 L875.0 256.7 L880.0 258.8 L885.0 260.9 L890.0 263.0 L895.0 265.0 L900.0 266.7 L905.0 268.2 L910.0 269.4 L915.0 270.3 L920.0 270.9 L925.0 271.1 L930.0 271.1 L935.0 270.7 L940.0 270.2 L945.0 269.4 L950.0 268.5 L955.0 267.6 L960.0 266.6 L965.0 265.7 L970.0 264.9 L975.0 264.3 L980.0 263.8 L985.0 263.7 L990.0 263.8 L995.0 264.2" fill="none" stroke="#5cbfae" stroke-width="1.25" opacity="0.76"/><path d="M0.0 301.1 L5.0 302.3 L10.0 302.8 L15.0 302.7 L20.0 301.9 L25.0 300.4 L30.0 298.4 L35.0 295.7 L40.0 292.6 L45.0 289.0 L50.0 285.2 L55.0 281.3 L60.0 277.2 L65.0 273.3 L70.0 269.5 L75.0 266.1 L80.0 263.1 L85.0 260.6 L90.0 258.7 L95.0 257.4 L100.0 256.6 L105.0 255.6 L110.0 254.4 L115.0 253.2 L120.0 251.9 L125.0 250.6 L130.0 249.2 L135.0 247.8 L140.0 246.5 L145.0 245.3 L150.0 244.2 L155.0 243.3 L160.0 242.6 L165.0 242.1 L170.0 241.7 L175.0 241.0 L180.0 239.9 L185.0 238.6 L190.0 237.1 L195.0 235.4 L200.0 233.6 L205.0 231.9 L210.0 230.3 L215.0 228.8 L220.0 227.6 L225.0 226.9 L230.0 226.7 L235.0 227.0 L240.0 227.9 L245.0 229.2 L250.0 231.0 L255.0 233.2 L260.0 235.7 L265.0 238.5 L270.0 241.4 L275.0 244.3 L280.0 247.2 L285.0 250.0 L290.0 252.4 L295.0 254.6 L300.0 256.3 L305.0 258.0 L310.0 260.1 L315.0 262.6 L320.0 265.2 L325.0 268.1 L330.0 271.0 L335.0 273.9 L340.0 276.6 L345.0 278.9 L350.0 280.9 L355.0 282.3 L360.0 283.1 L365.0 283.4 L370.0 282.5 L375.0 279.4 L380.0 274.4 L385.0 267.7 L390.0 259.9 L395.0 251.6 L400.0 243.3 L405.0 235.6 L410.0 229.1 L415.0 224.2 L420.0 221.5 L425.0 221.4 L430.0 222.2 L435.0 220.2 L440.0 215.9 L445.0 209.7 L450.0 202.7 L455.0 195.7 L460.0 189.7 L465.0 185.6 L470.0 183.7 L475.0 184.9 L480.0 189.6 L485.0 195.9 L490.0 201.6 L495.0 204.5 L500.0 205.3 L505.0 222.0 L510.0 251.9 L515.0 281.9 L520.0 299.0" fill="none" stroke="#5cbfae" stroke-width="1.25" opacity="0.72"/><path d="M735.0 243.3 L740.0 244.9 L745.0 246.6 L750.0 248.3 L755.0 250.0 L760.0 251.7 L765.0 253.2 L770.0 254.6 L775.0 255.8 L780.0 256.8 L785.0 257.5 L790.0 258.0 L795.0 258.3 L800.0 258.4 L805.0 258.2 L810.0 257.8 L815.0 257.2 L820.0 256.6 L825.0 256.0 L830.0 255.7 L835.0 255.9 L840.0 256.5 L845.0 257.4 L850.0 258.6 L855.0 260.1 L860.0 261.7 L865.0 263.6 L870.0 265.5 L875.0 267.3 L880.0 269.2 L885.0 270.8 L890.0 272.3 L895.0 273.4 L900.0 274.2 L905.0 274.7 L910.0 274.8 L915.0 274.6 L920.0 274.1 L925.0 273.4 L930.0 272.5 L935.0 271.4 L940.0 270.3 L945.0 269.1 L950.0 268.0 L955.0 267.1 L960.0 266.3 L965.0 265.7 L970.0 265.5 L975.0 265.5 L980.0 265.8 L985.0 266.4 L990.0 267.3 L995.0 268.4" fill="none" stroke="#5cbfae" stroke-width="1.25" opacity="0.72"/><path d="M520.0 299.0 L525.0 300.4 L530.0 304.3 L535.0 312.3 L540.0 323.3 L545.0 335.9 L550.0 348.5 L555.0 359.4 L560.0 367.4 L565.0 371.4 L570.0 373.1 L575.0 376.6 L580.0 381.9 L585.0 388.3 L590.0 395.3 L595.0 402.4 L600.0 408.8 L605.0 413.9 L610.0 417.3 L615.0 418.6 L620.0 417.2 L625.0 411.7 L630.0 402.7 L635.0 390.7 L640.0 376.9 L645.0 362.6 L650.0 349.1 L655.0 337.6 L660.0 329.2 L665.0 324.8 L670.0 322.0 L675.0 315.6 L680.0 306.0 L685.0 294.2 L690.0 281.3 L695.0 268.2 L700.0 256.2 L705.0 246.6 L710.0 240.5 L715.0 238.4 L720.0 239.3 L725.0 240.5 L730.0 241.8 L735.0 243.3" fill="none" stroke="#5cbfae" stroke-width="1.25" opacity="0.72"/><path d="M0.0 310.3 L5.0 310.6 L10.0 310.1 L15.0 308.8 L20.0 306.9 L25.0 304.4 L30.0 301.3 L35.0 297.7 L40.0 293.7 L45.0 289.6 L50.0 285.3 L55.0 281.0 L60.0 276.9 L65.0 273.0 L70.0 269.6 L75.0 266.6 L80.0 264.1 L85.0 262.2 L90.0 261.0 L95.0 260.4 L100.0 260.2 L105.0 259.8 L110.0 259.2 L115.0 258.4 L120.0 257.4 L125.0 256.2 L130.0 254.8 L135.0 253.3 L140.0 251.6 L145.0 250.0 L150.0 248.3 L155.0 246.7 L160.0 245.3 L165.0 244.0 L170.0 242.9 L175.0 241.5 L180.0 239.9 L185.0 238.2 L190.0 236.4 L195.0 234.7 L200.0 233.1 L205.0 231.8 L210.0 230.7 L215.0 229.9 L220.0 229.6 L225.0 229.9 L230.0 230.8 L235.0 232.2 L240.0 234.2 L245.0 236.6 L250.0 239.4 L255.0 242.5 L260.0 245.8 L265.0 249.1 L270.0 252.4 L275.0 255.6 L280.0 258.4 L285.0 260.9 L290.0 263.0 L295.0 264.6 L300.0 265.7 L305.0 266.6 L310.0 267.8 L315.0 269.4 L320.0 271.2 L325.0 273.2 L330.0 275.5 L335.0 277.7 L340.0 280.0 L345.0 282.1 L350.0 283.9 L355.0 285.5 L360.0 286.6 L365.0 287.3 L370.0 287.0 L375.0 284.7 L380.0 280.5 L385.0 274.7 L390.0 267.8 L395.0 260.3 L400.0 252.7 L405.0 245.6 L410.0 239.5 L415.0 234.7 L420.0 231.9 L425.0 231.5 L430.0 231.8 L435.0 229.3 L440.0 224.4 L445.0 217.6 L450.0 209.9 L455.0 202.3 L460.0 195.6 L465.0 190.7 L470.0 188.1 L475.0 188.5 L480.0 192.5 L485.0 198.2 L490.0 203.5 L495.0 206.2 L500.0 207.1 L505.0 223.7 L510.0 253.3 L515.0 283.2 L520.0 300.6" fill="none" stroke="#5cbfae" stroke-width="1.25" opacity="0.52"/><path d="M735.0 253.4 L740.0 253.9 L745.0 254.4 L750.0 254.9 L755.0 255.5 L760.0 256.0 L765.0 256.6 L770.0 257.1 L775.0 257.6 L780.0 258.1 L785.0 258.5 L790.0 258.9 L795.0 259.3 L800.0 259.5 L805.0 259.8 L810.0 259.9 L815.0 259.9 L820.0 259.9 L825.0 260.0 L830.0 260.4 L835.0 261.2 L840.0 262.3 L845.0 263.6 L850.0 265.0 L855.0 266.6 L860.0 268.2 L865.0 269.7 L870.0 271.2 L875.0 272.5 L880.0 273.7 L885.0 274.6 L890.0 275.2 L895.0 275.4 L900.0 275.4 L905.0 275.1 L910.0 274.6 L915.0 273.8 L920.0 272.9 L925.0 272.0 L930.0 271.1 L935.0 270.2 L940.0 269.4 L945.0 268.9 L950.0 268.5 L955.0 268.4 L960.0 268.6 L965.0 269.1 L970.0 269.9 L975.0 271.0 L980.0 272.3 L985.0 273.8 L990.0 275.4 L995.0 277.2" fill="none" stroke="#5cbfae" stroke-width="1.25" opacity="0.52"/><path d="M0.0 315.7 L5.0 314.9 L10.0 313.4 L15.0 311.2 L20.0 308.4 L25.0 305.2 L30.0 301.5 L35.0 297.6 L40.0 293.5 L45.0 289.4 L50.0 285.3 L55.0 281.4 L60.0 277.8 L65.0 274.6 L70.0 271.9 L75.0 269.6 L80.0 267.9 L85.0 266.7 L90.0 266.1 L95.0 266.1 L100.0 266.2 L105.0 266.1 L110.0 265.6 L115.0 264.7 L120.0 263.5 L125.0 262.0 L130.0 260.1 L135.0 257.9 L140.0 255.6 L145.0 253.1 L150.0 250.7 L155.0 248.4 L160.0 246.4 L165.0 244.6 L170.0 243.0 L175.0 241.4 L180.0 239.7 L185.0 238.2 L190.0 236.7 L195.0 235.6 L200.0 234.7 L205.0 234.2 L210.0 234.0 L215.0 234.3 L220.0 235.1 L225.0 236.5 L230.0 238.4 L235.0 240.7 L240.0 243.5 L245.0 246.5 L250.0 249.8 L255.0 253.2 L260.0 256.5 L265.0 259.7 L270.0 262.7 L275.0 265.3 L280.0 267.6 L285.0 269.3 L290.0 270.6 L295.0 271.3 L300.0 271.5 L305.0 271.6 L310.0 272.1 L315.0 273.0 L320.0 274.2 L325.0 275.9 L330.0 277.9 L335.0 280.1 L340.0 282.5 L345.0 284.9 L350.0 287.3 L355.0 289.4 L360.0 291.2 L365.0 292.6 L370.0 293.1 L375.0 291.6 L380.0 288.2 L385.0 283.2 L390.0 276.9 L395.0 269.8 L400.0 262.5 L405.0 255.5 L410.0 249.2 L415.0 244.1 L420.0 240.7 L425.0 239.5 L430.0 238.9 L435.0 235.7 L440.0 230.0 L445.0 222.6 L450.0 214.4 L455.0 206.3 L460.0 199.2 L465.0 194.1 L470.0 191.3 L475.0 191.7 L480.0 195.5 L485.0 201.3 L490.0 206.9 L495.0 210.1 L500.0 211.7 L505.0 228.7 L510.0 258.3 L515.0 288.3 L520.0 306.2" fill="none" stroke="#5cbfae" stroke-width="1.25" opacity="0.68"/><path d="M735.0 259.4 L740.0 258.8 L745.0 258.3 L750.0 257.9 L755.0 257.6 L760.0 257.6 L765.0 257.7 L770.0 258.0 L775.0 258.5 L780.0 259.1 L785.0 259.9 L790.0 260.8 L795.0 261.8 L800.0 262.8 L805.0 263.8 L810.0 264.6 L815.0 265.4 L820.0 266.0 L825.0 266.6 L830.0 267.4 L835.0 268.4 L840.0 269.6 L845.0 270.8 L850.0 272.0 L855.0 273.1 L860.0 274.1 L865.0 275.0 L870.0 275.7 L875.0 276.2 L880.0 276.5 L885.0 276.6 L890.0 276.4 L895.0 276.1 L900.0 275.5 L905.0 274.9 L910.0 274.1 L915.0 273.4 L920.0 272.7 L925.0 272.2 L930.0 271.8 L935.0 271.6 L940.0 271.7 L945.0 272.0 L950.0 272.6 L955.0 273.5 L960.0 274.6 L965.0 276.0 L970.0 277.5 L975.0 279.2 L980.0 280.9 L985.0 282.7 L990.0 284.4 L995.0 286.1" fill="none" stroke="#5cbfae" stroke-width="1.25" opacity="0.68"/><path d="M0.0 314.3 L5.0 313.5 L10.0 312.1 L15.0 310.3 L20.0 308.1 L25.0 305.6 L30.0 302.9 L35.0 300.1 L40.0 297.3 L45.0 294.5 L50.0 291.9 L55.0 289.5 L60.0 287.4 L65.0 285.6 L70.0 284.2 L75.0 283.1 L80.0 282.4 L85.0 282.0 L90.0 281.9 L95.0 282.2 L100.0 282.4 L105.0 282.1 L110.0 281.3 L115.0 279.8 L120.0 277.9 L125.0 275.6 L130.0 272.7 L135.0 269.6 L140.0 266.2 L145.0 262.8 L150.0 259.4 L155.0 256.3 L160.0 253.4 L165.0 251.0 L170.0 248.9 L175.0 246.9 L180.0 245.1 L185.0 243.4 L190.0 242.1 L195.0 241.0 L200.0 240.3 L205.0 240.0 L210.0 240.1 L215.0 240.5 L220.0 241.4 L225.0 242.6 L230.0 244.3 L235.0 246.3 L240.0 248.6 L245.0 250.9 L250.0 253.4 L255.0 255.7 L260.0 258.0 L265.0 260.0 L270.0 261.8 L275.0 263.2 L280.0 264.3 L285.0 265.0 L290.0 265.3 L295.0 265.2 L300.0 264.8 L305.0 264.5 L310.0 264.9 L315.0 265.8 L320.0 267.3 L325.0 269.5 L330.0 272.2 L335.0 275.4 L340.0 278.9 L345.0 282.6 L350.0 286.2 L355.0 289.7 L360.0 293.0 L365.0 295.8 L370.0 297.6 L375.0 297.4 L380.0 295.1 L385.0 291.1 L390.0 285.8 L395.0 279.4 L400.0 272.7 L405.0 266.0 L410.0 259.9 L415.0 254.8 L420.0 251.3 L425.0 249.9 L430.0 249.2 L435.0 245.9 L440.0 240.3 L445.0 233.2 L450.0 225.3 L455.0 217.7 L460.0 211.3 L465.0 206.8 L470.0 204.8 L475.0 205.8 L480.0 210.3 L485.0 216.8 L490.0 222.9 L495.0 226.8 L500.0 229.1 L505.0 246.2 L510.0 275.6 L515.0 305.0 L520.0 322.6" fill="none" stroke="#5cbfae" stroke-width="1.25" opacity="0.51"/><path d="M735.0 258.2 L740.0 257.6 L745.0 257.3 L750.0 257.3 L755.0 257.7 L760.0 258.6 L765.0 259.7 L770.0 261.3 L775.0 263.1 L780.0 265.2 L785.0 267.5 L790.0 269.9 L795.0 272.4 L800.0 274.8 L805.0 277.0 L810.0 279.0 L815.0 280.7 L820.0 281.9 L825.0 283.0 L830.0 284.1 L835.0 285.0 L840.0 285.9 L845.0 286.7 L850.0 287.2 L855.0 287.6 L860.0 287.7 L865.0 287.6 L870.0 287.3 L875.0 286.8 L880.0 286.2 L885.0 285.5 L890.0 284.6 L895.0 283.6 L900.0 282.5 L905.0 281.5 L910.0 280.5 L915.0 279.6 L920.0 278.9 L925.0 278.4 L930.0 278.1 L935.0 278.1 L940.0 278.2 L945.0 278.6 L950.0 279.1 L955.0 279.8 L960.0 280.6 L965.0 281.5 L970.0 282.4 L975.0 283.3 L980.0 284.1 L985.0 284.9 L990.0 285.5 L995.0 285.9" fill="none" stroke="#5cbfae" stroke-width="1.25" opacity="0.51"/><path d="M520.0 322.6 L525.0 325.6 L530.0 330.6 L535.0 339.1 L540.0 350.0 L545.0 361.9 L550.0 373.3 L555.0 382.8 L560.0 389.1 L565.0 391.3 L570.0 391.1 L575.0 392.3 L580.0 394.9 L585.0 398.4 L590.0 402.5 L595.0 406.7 L600.0 410.5 L605.0 413.4 L610.0 415.1 L615.0 415.3 L620.0 413.4 L625.0 408.3 L630.0 400.4 L635.0 390.1 L640.0 378.4 L645.0 366.5 L650.0 355.4 L655.0 346.5 L660.0 340.5 L665.0 338.1 L670.0 337.1 L675.0 332.7 L680.0 325.3 L685.0 315.7 L690.0 304.6 L695.0 292.9 L700.0 281.8 L705.0 272.3 L710.0 265.5 L715.0 262.0 L720.0 261.0 L725.0 260.0 L730.0 259.0 L735.0 258.2" fill="none" stroke="#5cbfae" stroke-width="1.25" opacity="0.51"/><path d="M0.0 318.1 L5.0 316.3 L10.0 314.1 L15.0 311.6 L20.0 308.9 L25.0 306.1 L30.0 303.1 L35.0 300.2 L40.0 297.4 L45.0 294.6 L50.0 292.0 L55.0 289.6 L60.0 287.4 L65.0 285.5 L70.0 283.7 L75.0 282.3 L80.0 281.0 L85.0 280.0 L90.0 279.2 L95.0 278.6 L100.0 278.0 L105.0 276.8 L110.0 275.0 L115.0 272.8 L120.0 270.2 L125.0 267.2 L130.0 264.0 L135.0 260.7 L140.0 257.3 L145.0 254.1 L150.0 251.3 L155.0 248.9 L160.0 247.0 L165.0 245.7 L170.0 245.1 L175.0 244.6 L180.0 244.5 L185.0 244.6 L190.0 245.1 L195.0 245.9 L200.0 246.9 L205.0 248.3 L210.0 249.9 L215.0 251.7 L220.0 253.7 L225.0 256.0 L230.0 258.4 L235.0 260.9 L240.0 263.5 L245.0 266.0 L250.0 268.3 L255.0 270.5 L260.0 272.4 L265.0 274.1 L270.0 275.4 L275.0 276.4 L280.0 277.1 L285.0 277.5 L290.0 277.6 L295.0 277.4 L300.0 277.0 L305.0 276.8 L310.0 277.3 L315.0 278.4 L320.0 280.2 L325.0 282.7 L330.0 285.7 L335.0 289.1 L340.0 292.8 L345.0 296.5 L350.0 300.2 L355.0 303.5 L360.0 306.3 L365.0 308.6 L370.0 309.6 L375.0 308.5 L380.0 305.2 L385.0 300.0 L390.0 293.3 L395.0 285.6 L400.0 277.3 L405.0 269.1 L410.0 261.4 L415.0 254.8 L420.0 249.7 L425.0 247.0 L430.0 245.0 L435.0 240.9 L440.0 234.8 L445.0 227.4 L450.0 219.6 L455.0 212.3 L460.0 206.4 L465.0 202.5 L470.0 201.2 L475.0 203.1 L480.0 208.3 L485.0 215.5 L490.0 222.4 L495.0 227.2 L500.0 230.3 L505.0 247.8 L510.0 277.0 L515.0 306.2 L520.0 323.8" fill="none" stroke="#5cbfae" stroke-width="1.25" opacity="0.64"/><path d="M735.0 264.0 L740.0 262.5 L745.0 261.4 L750.0 260.8 L755.0 260.8 L760.0 261.4 L765.0 262.3 L770.0 263.8 L775.0 265.5 L780.0 267.6 L785.0 269.8 L790.0 272.1 L795.0 274.3 L800.0 276.4 L805.0 278.1 L810.0 279.5 L815.0 280.4 L820.0 280.8 L825.0 281.0 L830.0 281.0 L835.0 281.0 L840.0 280.8 L845.0 280.6 L850.0 280.3 L855.0 279.8 L860.0 279.3 L865.0 278.8 L870.0 278.3 L875.0 277.8 L880.0 277.5 L885.0 277.3 L890.0 277.2 L895.0 277.2 L900.0 277.3 L905.0 277.7 L910.0 278.2 L915.0 279.0 L920.0 279.9 L925.0 281.1 L930.0 282.4 L935.0 283.9 L940.0 285.5 L945.0 287.1 L950.0 288.8 L955.0 290.4 L960.0 291.9 L965.0 293.3 L970.0 294.6 L975.0 295.6 L980.0 296.4 L985.0 297.0 L990.0 297.4 L995.0 297.6" fill="none" stroke="#5cbfae" stroke-width="1.25" opacity="0.64"/><path d="M0.0 320.2 L5.0 319.1 L10.0 317.7 L15.0 316.2 L20.0 314.5 L25.0 312.7 L30.0 310.8 L35.0 308.8 L40.0 306.8 L45.0 304.8 L50.0 302.7 L55.0 300.7 L60.0 298.7 L65.0 296.7 L70.0 294.7 L75.0 292.8 L80.0 290.9 L85.0 289.1 L90.0 287.4 L95.0 285.8 L100.0 284.1 L105.0 281.9 L110.0 279.3 L115.0 276.2 L120.0 272.9 L125.0 269.3 L130.0 265.7 L135.0 262.1 L140.0 258.8 L145.0 255.7 L150.0 253.1 L155.0 251.1 L160.0 249.8 L165.0 249.2 L170.0 249.1 L175.0 249.4 L180.0 249.9 L185.0 250.6 L190.0 251.5 L195.0 252.7 L200.0 254.0 L205.0 255.4 L210.0 256.8 L215.0 258.3 L220.0 259.9 L225.0 261.5 L230.0 263.2 L235.0 264.9 L240.0 266.5 L245.0 268.1 L250.0 269.6 L255.0 270.9 L260.0 272.1 L265.0 273.2 L270.0 274.2 L275.0 275.0 L280.0 275.7 L285.0 276.2 L290.0 276.7 L295.0 277.1 L300.0 277.5 L305.0 278.2 L310.0 279.6 L315.0 281.8 L320.0 284.6 L325.0 288.1 L330.0 292.1 L335.0 296.4 L340.0 300.8 L345.0 305.1 L350.0 309.1 L355.0 312.7 L360.0 315.6 L365.0 317.8 L370.0 318.6 L375.0 317.2 L380.0 313.5 L385.0 307.9 L390.0 300.8 L395.0 292.6 L400.0 283.9 L405.0 275.2 L410.0 267.2 L415.0 260.3 L420.0 255.1 L425.0 252.3 L430.0 250.5 L435.0 246.8 L440.0 241.4 L445.0 234.9 L450.0 228.1 L455.0 221.9 L460.0 217.1 L465.0 214.3 L470.0 213.9 L475.0 216.4 L480.0 222.2 L485.0 229.6 L490.0 236.6 L495.0 241.3 L500.0 244.2 L505.0 260.9 L510.0 288.7 L515.0 316.4 L520.0 332.6" fill="none" stroke="#5cbfae" stroke-width="1.25" opacity="0.76"/><path d="M735.0 267.7 L740.0 266.9 L745.0 266.7 L750.0 267.0 L755.0 268.0 L760.0 269.5 L765.0 271.5 L770.0 273.8 L775.0 276.3 L780.0 278.9 L785.0 281.6 L790.0 284.1 L795.0 286.3 L800.0 288.2 L805.0 289.6 L810.0 290.4 L815.0 290.5 L820.0 290.1 L825.0 289.3 L830.0 288.4 L835.0 287.4 L840.0 286.3 L845.0 285.2 L850.0 284.1 L855.0 283.1 L860.0 282.1 L865.0 281.3 L870.0 280.6 L875.0 280.2 L880.0 280.1 L885.0 280.3 L890.0 280.6 L895.0 281.2 L900.0 281.9 L905.0 282.8 L910.0 283.9 L915.0 285.1 L920.0 286.5 L925.0 287.9 L930.0 289.3 L935.0 290.7 L940.0 292.0 L945.0 293.2 L950.0 294.2 L955.0 295.1 L960.0 295.8 L965.0 296.2 L970.0 296.5 L975.0 296.5 L980.0 296.4 L985.0 296.1 L990.0 295.7 L995.0 295.3" fill="none" stroke="#5cbfae" stroke-width="1.25" opacity="0.76"/><path d="M0.0 323.5 L5.0 323.1 L10.0 322.6 L15.0 321.8 L20.0 320.9 L25.0 319.8 L30.0 318.4 L35.0 316.8 L40.0 315.1 L45.0 313.1 L50.0 310.9 L55.0 308.6 L60.0 306.1 L65.0 303.4 L70.0 300.7 L75.0 297.9 L80.0 295.1 L85.0 292.4 L90.0 289.8 L95.0 287.4 L100.0 285.0 L105.0 282.2 L110.0 279.1 L115.0 275.9 L120.0 272.6 L125.0 269.3 L130.0 266.1 L135.0 263.1 L140.0 260.5 L145.0 258.3 L150.0 256.6 L155.0 255.6 L160.0 255.2 L165.0 255.4 L170.0 256.2 L175.0 257.1 L180.0 258.1 L185.0 259.3 L190.0 260.4 L195.0 261.5 L200.0 262.7 L205.0 263.7 L210.0 264.7 L215.0 265.6 L220.0 266.4 L225.0 267.2 L230.0 268.1 L235.0 268.9 L240.0 269.8 L245.0 270.7 L250.0 271.6 L255.0 272.6 L260.0 273.6 L265.0 274.6 L270.0 275.7 L275.0 276.9 L280.0 278.0 L285.0 279.2 L290.0 280.5 L295.0 281.7 L300.0 282.9 L305.0 284.5 L310.0 286.8 L315.0 289.6 L320.0 293.0 L325.0 296.9 L330.0 301.2 L335.0 305.6 L340.0 309.9 L345.0 314.0 L350.0 317.6 L355.0 320.5 L360.0 322.7 L365.0 324.1 L370.0 324.1 L375.0 321.9 L380.0 317.4 L385.0 311.2 L390.0 303.5 L395.0 295.0 L400.0 286.0 L405.0 277.3 L410.0 269.3 L415.0 262.6 L420.0 257.7 L425.0 255.4 L430.0 254.3 L435.0 251.4 L440.0 247.0 L445.0 241.8 L450.0 236.2 L455.0 231.3 L460.0 227.6 L465.0 225.7 L470.0 226.0 L475.0 229.0 L480.0 234.9 L485.0 242.1 L490.0 248.8 L495.0 253.0 L500.0 255.4 L505.0 270.9 L510.0 297.2 L515.0 323.2 L520.0 338.1" fill="none" stroke="#5cbfae" stroke-width="1.25" opacity="0.78"/><path d="M735.0 273.1 L740.0 273.0 L745.0 273.4 L750.0 274.5 L755.0 276.1 L760.0 278.1 L765.0 280.4 L770.0 282.9 L775.0 285.5 L780.0 288.0 L785.0 290.3 L790.0 292.4 L795.0 294.0 L800.0 295.1 L805.0 295.6 L810.0 295.5 L815.0 294.8 L820.0 293.5 L825.0 291.9 L830.0 290.2 L835.0 288.6 L840.0 287.1 L845.0 285.8 L850.0 284.6 L855.0 283.7 L860.0 283.1 L865.0 282.8 L870.0 282.8 L875.0 283.1 L880.0 283.8 L885.0 284.9 L890.0 286.1 L895.0 287.5 L900.0 289.0 L905.0 290.5 L910.0 292.1 L915.0 293.6 L920.0 295.0 L925.0 296.3 L930.0 297.5 L935.0 298.4 L940.0 299.1 L945.0 299.6 L950.0 299.8 L955.0 299.7 L960.0 299.5 L965.0 299.0 L970.0 298.4 L975.0 297.8 L980.0 297.0 L985.0 296.3 L990.0 295.7 L995.0 295.2" fill="none" stroke="#5cbfae" stroke-width="1.25" opacity="0.78"/><path d="M520.0 338.1 L525.0 339.4 L530.0 342.6 L535.0 348.8 L540.0 357.1 L545.0 366.5 L550.0 375.7 L555.0 383.4 L560.0 388.6 L565.0 390.5 L570.0 390.6 L575.0 392.5 L580.0 396.0 L585.0 400.9 L590.0 406.8 L595.0 413.0 L600.0 419.2 L605.0 424.7 L610.0 429.2 L615.0 432.3 L620.0 433.3 L625.0 431.3 L630.0 426.2 L635.0 418.5 L640.0 408.9 L645.0 398.4 L650.0 388.2 L655.0 379.3 L660.0 372.6 L665.0 368.7 L670.0 365.8 L675.0 359.6 L680.0 350.5 L685.0 339.5 L690.0 327.2 L695.0 314.2 L700.0 301.9 L705.0 291.2 L710.0 283.2 L715.0 278.6 L720.0 276.5 L725.0 274.9 L730.0 273.7 L735.0 273.1" fill="none" stroke="#5cbfae" stroke-width="1.25" opacity="0.78"/><path d="M0.0 329.2 L5.0 330.2 L10.0 330.9 L15.0 331.3 L20.0 331.4 L25.0 331.0 L30.0 330.2 L35.0 329.1 L40.0 327.5 L45.0 325.4 L50.0 323.1 L55.0 320.3 L60.0 317.3 L65.0 314.1 L70.0 310.8 L75.0 307.3 L80.0 303.9 L85.0 300.7 L90.0 297.6 L95.0 294.8 L100.0 292.2 L105.0 289.3 L110.0 286.4 L115.0 283.4 L120.0 280.4 L125.0 277.6 L130.0 275.0 L135.0 272.5 L140.0 270.4 L145.0 268.7 L150.0 267.4 L155.0 266.6 L160.0 266.3 L165.0 266.5 L170.0 267.0 L175.0 267.4 L180.0 267.8 L185.0 268.0 L190.0 268.1 L195.0 268.1 L200.0 267.9 L205.0 267.6 L210.0 267.2 L215.0 266.6 L220.0 266.1 L225.0 265.6 L230.0 265.4 L235.0 265.3 L240.0 265.4 L245.0 265.8 L250.0 266.4 L255.0 267.2 L260.0 268.4 L265.0 269.8 L270.0 271.4 L275.0 273.2 L280.0 275.2 L285.0 277.4 L290.0 279.6 L295.0 281.8 L300.0 283.9 L305.0 286.4 L310.0 289.4 L315.0 292.8 L320.0 296.6 L325.0 300.8 L330.0 305.2 L335.0 309.6 L340.0 313.8 L345.0 317.6 L350.0 320.9 L355.0 323.6 L360.0 325.5 L365.0 326.7 L370.0 326.5 L375.0 324.3 L380.0 320.1 L385.0 314.2 L390.0 307.1 L395.0 299.3 L400.0 291.3 L405.0 283.7 L410.0 276.9 L415.0 271.4 L420.0 267.8 L425.0 266.8 L430.0 266.9 L435.0 265.4 L440.0 262.5 L445.0 258.5 L450.0 254.2 L455.0 250.3 L460.0 247.3 L465.0 245.9 L470.0 246.3 L475.0 249.0 L480.0 254.3 L485.0 260.7 L490.0 266.2 L495.0 269.2 L500.0 270.4 L505.0 284.2 L510.0 308.2 L515.0 332.1 L520.0 345.3" fill="none" stroke="#5cbfae" stroke-width="1.25" opacity="0.74"/><path d="M735.0 280.3 L740.0 281.4 L745.0 282.9 L750.0 284.9 L755.0 287.2 L760.0 289.9 L765.0 292.6 L770.0 295.3 L775.0 297.9 L780.0 300.2 L785.0 302.3 L790.0 303.9 L795.0 305.0 L800.0 305.6 L805.0 305.6 L810.0 304.9 L815.0 303.7 L820.0 302.0 L825.0 300.1 L830.0 298.4 L835.0 296.8 L840.0 295.4 L845.0 294.3 L850.0 293.6 L855.0 293.2 L860.0 293.1 L865.0 293.3 L870.0 293.9 L875.0 294.7 L880.0 295.8 L885.0 297.1 L890.0 298.4 L895.0 299.7 L900.0 300.9 L905.0 301.9 L910.0 302.8 L915.0 303.4 L920.0 303.7 L925.0 303.7 L930.0 303.4 L935.0 302.9 L940.0 302.0 L945.0 300.9 L950.0 299.6 L955.0 298.1 L960.0 296.6 L965.0 295.0 L970.0 293.5 L975.0 292.1 L980.0 290.9 L985.0 290.0 L990.0 289.3 L995.0 289.1" fill="none" stroke="#5cbfae" stroke-width="1.25" opacity="0.74"/><path d="M0.0 338.2 L5.0 339.4 L10.0 340.1 L15.0 340.4 L20.0 340.1 L25.0 339.2 L30.0 337.7 L35.0 335.7 L40.0 333.1 L45.0 330.1 L50.0 326.7 L55.0 323.0 L60.0 319.0 L65.0 314.9 L70.0 310.8 L75.0 306.7 L80.0 302.9 L85.0 299.4 L90.0 296.3 L95.0 293.6 L100.0 291.3 L105.0 289.0 L110.0 286.8 L115.0 284.6 L120.0 282.6 L125.0 280.7 L130.0 278.9 L135.0 277.4 L140.0 276.1 L145.0 275.0 L150.0 274.3 L155.0 273.8 L160.0 273.7 L165.0 273.8 L170.0 274.1 L175.0 274.2 L180.0 274.0 L185.0 273.7 L190.0 273.1 L195.0 272.4 L200.0 271.5 L205.0 270.5 L210.0 269.5 L215.0 268.5 L220.0 267.6 L225.0 267.1 L230.0 266.8 L235.0 266.9 L240.0 267.4 L245.0 268.3 L250.0 269.6 L255.0 271.3 L260.0 273.3 L265.0 275.7 L270.0 278.3 L275.0 281.1 L280.0 284.0 L285.0 286.9 L290.0 289.7 L295.0 292.4 L300.0 294.9 L305.0 297.4 L310.0 300.3 L315.0 303.4 L320.0 306.7 L325.0 310.1 L330.0 313.6 L335.0 317.1 L340.0 320.3 L345.0 323.1 L350.0 325.4 L355.0 327.2 L360.0 328.3 L365.0 328.8 L370.0 328.2 L375.0 325.7 L380.0 321.5 L385.0 315.9 L390.0 309.3 L395.0 302.1 L400.0 294.9 L405.0 288.1 L410.0 282.2 L415.0 277.6 L420.0 274.8 L425.0 274.5 L430.0 275.4 L435.0 274.6 L440.0 272.3 L445.0 268.8 L450.0 264.9 L455.0 261.2 L460.0 258.2 L465.0 256.6 L470.0 256.5 L475.0 258.6 L480.0 262.9 L485.0 268.2 L490.0 272.6 L495.0 274.7 L500.0 275.0 L505.0 287.6 L510.0 310.3 L515.0 332.9 L520.0 345.4" fill="none" stroke="#5cbfae" stroke-width="1.25" opacity="0.78"/><path d="M735.0 291.0 L740.0 292.1 L745.0 293.4 L750.0 294.9 L755.0 296.7 L760.0 298.6 L765.0 300.4 L770.0 302.2 L775.0 303.7 L780.0 305.0 L785.0 306.0 L790.0 306.7 L795.0 306.9 L800.0 306.7 L805.0 306.0 L810.0 305.0 L815.0 303.5 L820.0 301.7 L825.0 299.9 L830.0 298.5 L835.0 297.4 L840.0 296.7 L845.0 296.4 L850.0 296.4 L855.0 296.9 L860.0 297.6 L865.0 298.7 L870.0 299.9 L875.0 301.4 L880.0 302.9 L885.0 304.5 L890.0 306.0 L895.0 307.2 L900.0 308.1 L905.0 308.7 L910.0 308.9 L915.0 308.8 L920.0 308.3 L925.0 307.5 L930.0 306.4 L935.0 305.0 L940.0 303.4 L945.0 301.7 L950.0 299.9 L955.0 298.2 L960.0 296.5 L965.0 295.1 L970.0 293.8 L975.0 292.9 L980.0 292.3 L985.0 292.2 L990.0 292.5 L995.0 293.2" fill="none" stroke="#5cbfae" stroke-width="1.25" opacity="0.78"/><path d="M0.0 342.7 L5.0 342.8 L10.0 342.3 L15.0 341.1 L20.0 339.3 L25.0 336.9 L30.0 334.0 L35.0 330.5 L40.0 326.6 L45.0 322.3 L50.0 317.8 L55.0 313.2 L60.0 308.6 L65.0 304.1 L70.0 299.8 L75.0 295.9 L80.0 292.5 L85.0 289.6 L90.0 287.4 L95.0 285.8 L100.0 284.7 L105.0 283.8 L110.0 283.0 L115.0 282.3 L120.0 281.8 L125.0 281.4 L130.0 281.0 L135.0 280.7 L140.0 280.5 L145.0 280.4 L150.0 280.4 L155.0 280.6 L160.0 280.9 L165.0 281.3 L170.0 281.8 L175.0 281.9 L180.0 281.9 L185.0 281.6 L190.0 281.1 L195.0 280.4 L200.0 279.8 L205.0 279.1 L210.0 278.5 L215.0 278.1 L220.0 277.9 L225.0 278.1 L230.0 278.7 L235.0 279.8 L240.0 281.3 L245.0 283.2 L250.0 285.5 L255.0 288.1 L260.0 291.0 L265.0 294.0 L270.0 297.1 L275.0 300.2 L280.0 303.1 L285.0 305.9 L290.0 308.3 L295.0 310.2 L300.0 311.8 L305.0 313.1 L310.0 314.5 L315.0 316.0 L320.0 317.6 L325.0 319.2 L330.0 320.9 L335.0 322.5 L340.0 323.9 L345.0 325.1 L350.0 325.9 L355.0 326.4 L360.0 326.5 L365.0 326.1 L370.0 324.9 L375.0 322.1 L380.0 317.8 L385.0 312.3 L390.0 306.0 L395.0 299.2 L400.0 292.5 L405.0 286.2 L410.0 280.9 L415.0 276.7 L420.0 274.2 L425.0 274.2 L430.0 275.2 L435.0 274.5 L440.0 272.3 L445.0 269.0 L450.0 265.1 L455.0 261.3 L460.0 258.3 L465.0 256.4 L470.0 256.1 L475.0 257.8 L480.0 261.7 L485.0 266.7 L490.0 270.9 L495.0 273.1 L500.0 273.7 L505.0 286.5 L510.0 309.1 L515.0 332.0 L520.0 345.3" fill="none" stroke="#5cbfae" stroke-width="1.25" opacity="0.53"/><path d="M735.0 297.4 L740.0 297.0 L745.0 296.8 L750.0 296.8 L755.0 296.9 L760.0 297.1 L765.0 297.3 L770.0 297.5 L775.0 297.7 L780.0 297.8 L785.0 297.7 L790.0 297.5 L795.0 297.2 L800.0 296.7 L805.0 296.0 L810.0 295.2 L815.0 294.2 L820.0 293.1 L825.0 292.3 L830.0 292.0 L835.0 292.1 L840.0 292.7 L845.0 293.7 L850.0 295.1 L855.0 296.9 L860.0 298.9 L865.0 301.0 L870.0 303.3 L875.0 305.6 L880.0 307.8 L885.0 309.9 L890.0 311.8 L895.0 313.2 L900.0 314.2 L905.0 314.9 L910.0 315.1 L915.0 315.0 L920.0 314.5 L925.0 313.7 L930.0 312.8 L935.0 311.6 L940.0 310.4 L945.0 309.2 L950.0 308.1 L955.0 307.1 L960.0 306.3 L965.0 305.9 L970.0 305.7 L975.0 305.9 L980.0 306.4 L985.0 307.3 L990.0 308.6 L995.0 310.1" fill="none" stroke="#5cbfae" stroke-width="1.25" opacity="0.53"/><path d="M520.0 345.3 L525.0 346.9 L530.0 350.6 L535.0 357.4 L540.0 366.6 L545.0 377.1 L550.0 387.7 L555.0 397.1 L560.0 404.4 L565.0 408.7 L570.0 411.3 L575.0 415.3 L580.0 420.6 L585.0 426.6 L590.0 433.1 L595.0 439.6 L600.0 445.4 L605.0 450.1 L610.0 453.4 L615.0 455.1 L620.0 454.5 L625.0 450.8 L630.0 444.2 L635.0 434.8 L640.0 423.6 L645.0 411.6 L650.0 399.8 L655.0 389.4 L660.0 381.3 L665.0 376.1 L670.0 372.3 L675.0 366.0 L680.0 357.8 L685.0 348.3 L690.0 338.1 L695.0 327.6 L700.0 317.6 L705.0 309.3 L710.0 303.3 L715.0 300.2 L720.0 299.3 L725.0 298.6 L730.0 297.9 L735.0 297.4" fill="none" stroke="#5cbfae" stroke-width="1.25" opacity="0.53"/><path d="M0.0 351.3 L5.0 352.0 L10.0 352.0 L15.0 351.4 L20.0 350.0 L25.0 348.0 L30.0 345.5 L35.0 342.4 L40.0 339.0 L45.0 335.4 L50.0 331.5 L55.0 327.7 L60.0 323.9 L65.0 320.4 L70.0 317.1 L75.0 314.2 L80.0 311.8 L85.0 309.8 L90.0 308.5 L95.0 307.6 L100.0 307.1 L105.0 306.6 L110.0 305.9 L115.0 305.2 L120.0 304.3 L125.0 303.3 L130.0 302.1 L135.0 300.6 L140.0 299.0 L145.0 297.3 L150.0 295.4 L155.0 293.6 L160.0 291.7 L165.0 289.9 L170.0 288.1 L175.0 286.1 L180.0 283.9 L185.0 281.6 L190.0 279.3 L195.0 277.1 L200.0 275.0 L205.0 273.2 L210.0 271.7 L215.0 270.5 L220.0 269.8 L225.0 269.7 L230.0 270.2 L235.0 271.3 L240.0 272.9 L245.0 275.0 L250.0 277.5 L255.0 280.3 L260.0 283.3 L265.0 286.5 L270.0 289.6 L275.0 292.7 L280.0 295.5 L285.0 298.1 L290.0 300.3 L295.0 302.1 L300.0 303.4 L305.0 304.6 L310.0 305.9 L315.0 307.4 L320.0 309.0 L325.0 310.9 L330.0 313.1 L335.0 315.4 L340.0 317.7 L345.0 320.1 L350.0 322.3 L355.0 324.4 L360.0 326.3 L365.0 328.0 L370.0 329.0 L375.0 328.5 L380.0 326.7 L385.0 323.6 L390.0 319.7 L395.0 315.3 L400.0 310.8 L405.0 306.4 L410.0 302.7 L415.0 299.9 L420.0 298.5 L425.0 299.1 L430.0 300.5 L435.0 300.1 L440.0 298.1 L445.0 294.7 L450.0 290.6 L455.0 286.4 L460.0 282.8 L465.0 280.2 L470.0 279.1 L475.0 279.8 L480.0 282.7 L485.0 286.5 L490.0 289.7 L495.0 291.0 L500.0 291.0 L505.0 302.6 L510.0 323.9 L515.0 345.5 L520.0 357.9" fill="none" stroke="#5cbfae" stroke-width="1.25" opacity="0.57"/><path d="M735.0 305.4 L740.0 305.6 L745.0 305.8 L750.0 306.1 L755.0 306.7 L760.0 307.3 L765.0 308.1 L770.0 308.9 L775.0 309.7 L780.0 310.6 L785.0 311.5 L790.0 312.3 L795.0 313.1 L800.0 313.8 L805.0 314.3 L810.0 314.7 L815.0 314.8 L820.0 314.8 L825.0 315.0 L830.0 315.5 L835.0 316.2 L840.0 317.2 L845.0 318.4 L850.0 319.7 L855.0 321.0 L860.0 322.2 L865.0 323.4 L870.0 324.3 L875.0 325.0 L880.0 325.5 L885.0 325.6 L890.0 325.3 L895.0 324.6 L900.0 323.4 L905.0 321.8 L910.0 319.8 L915.0 317.6 L920.0 315.2 L925.0 312.6 L930.0 310.1 L935.0 307.6 L940.0 305.2 L945.0 303.0 L950.0 301.2 L955.0 299.6 L960.0 298.5 L965.0 297.7 L970.0 297.4 L975.0 297.5 L980.0 298.0 L985.0 298.9 L990.0 300.1 L995.0 301.6" fill="none" stroke="#5cbfae" stroke-width="1.25" opacity="0.57"/><path d="M0.0 350.7 L5.0 349.0 L10.0 346.7 L15.0 343.9 L20.0 340.5 L25.0 336.7 L30.0 332.7 L35.0 328.4 L40.0 324.1 L45.0 319.7 L50.0 315.6 L55.0 311.7 L60.0 308.1 L65.0 304.9 L70.0 302.3 L75.0 300.2 L80.0 298.6 L85.0 297.6 L90.0 297.3 L95.0 297.4 L100.0 297.9 L105.0 298.3 L110.0 298.6 L115.0 298.7 L120.0 298.7 L125.0 298.4 L130.0 297.8 L135.0 297.0 L140.0 296.0 L145.0 294.9 L150.0 293.7 L155.0 292.5 L160.0 291.5 L165.0 290.6 L170.0 289.9 L175.0 289.1 L180.0 288.3 L185.0 287.6 L190.0 287.0 L195.0 286.6 L200.0 286.5 L205.0 286.7 L210.0 287.2 L215.0 288.1 L220.0 289.4 L225.0 291.1 L230.0 293.3 L235.0 295.9 L240.0 298.8 L245.0 301.8 L250.0 305.0 L255.0 308.1 L260.0 311.2 L265.0 314.0 L270.0 316.6 L275.0 318.8 L280.0 320.5 L285.0 321.7 L290.0 322.3 L295.0 322.4 L300.0 322.0 L305.0 321.3 L310.0 320.7 L315.0 320.4 L320.0 320.2 L325.0 320.4 L330.0 321.0 L335.0 321.8 L340.0 322.9 L345.0 324.1 L350.0 325.4 L355.0 326.7 L360.0 327.8 L365.0 328.8 L370.0 329.2 L375.0 328.2 L380.0 325.8 L385.0 322.2 L390.0 317.8 L395.0 312.7 L400.0 307.4 L405.0 302.3 L410.0 297.6 L415.0 293.7 L420.0 291.1 L425.0 290.5 L430.0 290.7 L435.0 289.3 L440.0 286.4 L445.0 282.4 L450.0 278.0 L455.0 273.6 L460.0 270.0 L465.0 267.7 L470.0 267.0 L475.0 268.4 L480.0 272.1 L485.0 277.0 L490.0 281.5 L495.0 284.4 L500.0 286.3 L505.0 299.5 L510.0 322.2 L515.0 345.2 L520.0 359.5" fill="none" stroke="#5cbfae" stroke-width="1.25" opacity="0.63"/><path d="M735.0 306.7 L740.0 304.3 L745.0 302.1 L750.0 300.3 L755.0 298.8 L760.0 297.7 L765.0 297.0 L770.0 296.6 L775.0 296.6 L780.0 296.8 L785.0 297.4 L790.0 298.2 L795.0 299.1 L800.0 300.2 L805.0 301.2 L810.0 302.2 L815.0 303.1 L820.0 303.9 L825.0 304.9 L830.0 306.2 L835.0 307.7 L840.0 309.4 L845.0 311.2 L850.0 313.0 L855.0 314.8 L860.0 316.5 L865.0 318.1 L870.0 319.4 L875.0 320.6 L880.0 321.5 L885.0 322.3 L890.0 322.7 L895.0 322.7 L900.0 322.5 L905.0 322.0 L910.0 321.3 L915.0 320.6 L920.0 319.8 L925.0 319.0 L930.0 318.4 L935.0 317.8 L940.0 317.5 L945.0 317.4 L950.0 317.6 L955.0 318.0 L960.0 318.6 L965.0 319.5 L970.0 320.6 L975.0 321.9 L980.0 323.3 L985.0 324.7 L990.0 326.2 L995.0 327.7" fill="none" stroke="#5cbfae" stroke-width="1.25" opacity="0.63"/><path d="M0.0 359.3 L5.0 357.4 L10.0 355.0 L15.0 352.1 L20.0 348.8 L25.0 345.2 L30.0 341.5 L35.0 337.7 L40.0 334.0 L45.0 330.3 L50.0 326.8 L55.0 323.5 L60.0 320.6 L65.0 318.0 L70.0 315.8 L75.0 313.9 L80.0 312.4 L85.0 311.4 L90.0 310.6 L95.0 310.2 L100.0 310.0 L105.0 309.4 L110.0 308.5 L115.0 307.3 L120.0 305.9 L125.0 304.2 L130.0 302.1 L135.0 299.7 L140.0 297.3 L145.0 294.8 L150.0 292.3 L155.0 290.1 L160.0 288.1 L165.0 286.5 L170.0 285.3 L175.0 284.2 L180.0 283.4 L185.0 282.8 L190.0 282.5 L195.0 282.7 L200.0 283.1 L205.0 284.0 L210.0 285.3 L215.0 286.9 L220.0 288.9 L225.0 291.3 L230.0 294.0 L235.0 297.0 L240.0 300.1 L245.0 303.3 L250.0 306.5 L255.0 309.6 L260.0 312.4 L265.0 315.0 L270.0 317.2 L275.0 319.0 L280.0 320.4 L285.0 321.4 L290.0 321.9 L295.0 322.0 L300.0 321.7 L305.0 321.3 L310.0 321.2 L315.0 321.5 L320.0 322.1 L325.0 323.3 L330.0 325.0 L335.0 327.2 L340.0 329.6 L345.0 332.2 L350.0 334.9 L355.0 337.6 L360.0 340.1 L365.0 342.3 L370.0 343.8 L375.0 343.8 L380.0 342.2 L385.0 339.3 L390.0 335.2 L395.0 330.3 L400.0 325.0 L405.0 319.5 L410.0 314.3 L415.0 309.6 L420.0 306.1 L425.0 304.5 L430.0 303.7 L435.0 301.4 L440.0 297.7 L445.0 293.1 L450.0 288.2 L455.0 283.5 L460.0 279.6 L465.0 277.1 L470.0 276.3 L475.0 277.6 L480.0 281.2 L485.0 286.0 L490.0 290.4 L495.0 293.4 L500.0 295.4 L505.0 308.3 L510.0 330.2 L515.0 352.3 L520.0 365.9" fill="none" stroke="#5cbfae" stroke-width="1.25" opacity="0.59"/><path d="M735.0 315.8 L740.0 313.2 L745.0 310.9 L750.0 309.2 L755.0 307.9 L760.0 307.2 L765.0 307.0 L770.0 307.3 L775.0 307.9 L780.0 309.0 L785.0 310.3 L790.0 311.8 L795.0 313.4 L800.0 315.0 L805.0 316.4 L810.0 317.7 L815.0 318.5 L820.0 319.1 L825.0 319.6 L830.0 320.2 L835.0 320.9 L840.0 321.5 L845.0 322.0 L850.0 322.4 L855.0 322.7 L860.0 322.8 L865.0 322.8 L870.0 322.6 L875.0 322.3 L880.0 321.9 L885.0 321.4 L890.0 320.8 L895.0 319.9 L900.0 319.0 L905.0 318.1 L910.0 317.2 L915.0 316.4 L920.0 315.7 L925.0 315.3 L930.0 315.0 L935.0 314.9 L940.0 315.1 L945.0 315.5 L950.0 316.2 L955.0 317.0 L960.0 318.0 L965.0 319.1 L970.0 320.3 L975.0 321.6 L980.0 322.9 L985.0 324.2 L990.0 325.4 L995.0 326.5" fill="none" stroke="#5cbfae" stroke-width="1.25" opacity="0.59"/><path d="M520.0 365.9 L525.0 369.0 L530.0 373.7 L535.0 380.9 L540.0 389.8 L545.0 399.6 L550.0 408.9 L555.0 416.8 L560.0 422.4 L565.0 425.0 L570.0 425.8 L575.0 427.5 L580.0 430.2 L585.0 433.6 L590.0 437.3 L595.0 441.1 L600.0 444.5 L605.0 447.3 L610.0 449.2 L615.0 450.0 L620.0 449.3 L625.0 446.4 L630.0 441.2 L635.0 433.8 L640.0 425.0 L645.0 415.7 L650.0 406.8 L655.0 399.2 L660.0 393.7 L665.0 390.8 L670.0 389.1 L675.0 385.2 L680.0 379.3 L685.0 372.2 L690.0 364.1 L695.0 355.1 L700.0 346.1 L705.0 338.0 L710.0 331.5 L715.0 327.2 L720.0 324.4 L725.0 321.5 L730.0 318.6 L735.0 315.8" fill="none" stroke="#5cbfae" stroke-width="1.25" opacity="0.59"/><path d="M0.0 360.9 L5.0 359.1 L10.0 356.9 L15.0 354.5 L20.0 351.9 L25.0 349.1 L30.0 346.2 L35.0 343.4 L40.0 340.6 L45.0 337.9 L50.0 335.3 L55.0 332.8 L60.0 330.6 L65.0 328.5 L70.0 326.6 L75.0 324.9 L80.0 323.4 L85.0 322.0 L90.0 320.8 L95.0 319.8 L100.0 318.7 L105.0 317.2 L110.0 315.3 L115.0 313.2 L120.0 310.7 L125.0 308.0 L130.0 305.1 L135.0 302.0 L140.0 299.0 L145.0 296.0 L150.0 293.3 L155.0 291.0 L160.0 289.1 L165.0 287.8 L170.0 286.9 L175.0 286.4 L180.0 286.1 L185.0 286.2 L190.0 286.7 L195.0 287.5 L200.0 288.6 L205.0 290.1 L210.0 291.8 L215.0 293.7 L220.0 295.8 L225.0 298.1 L230.0 300.6 L235.0 303.2 L240.0 305.8 L245.0 308.3 L250.0 310.7 L255.0 313.0 L260.0 314.9 L265.0 316.7 L270.0 318.1 L275.0 319.3 L280.0 320.1 L285.0 320.7 L290.0 321.0 L295.0 321.1 L300.0 321.0 L305.0 321.0 L310.0 321.5 L315.0 322.4 L320.0 323.9 L325.0 326.0 L330.0 328.7 L335.0 331.9 L340.0 335.3 L345.0 338.9 L350.0 342.5 L355.0 346.0 L360.0 349.2 L365.0 351.9 L370.0 353.7 L375.0 353.8 L380.0 352.3 L385.0 349.3 L390.0 345.0 L395.0 339.8 L400.0 334.1 L405.0 328.1 L410.0 322.3 L415.0 317.0 L420.0 312.9 L425.0 310.7 L430.0 309.6 L435.0 307.1 L440.0 303.5 L445.0 299.2 L450.0 294.8 L455.0 290.7 L460.0 287.7 L465.0 286.1 L470.0 286.1 L475.0 288.2 L480.0 292.4 L485.0 297.7 L490.0 302.6 L495.0 306.0 L500.0 308.4 L505.0 321.0 L510.0 342.2 L515.0 363.4 L520.0 376.2" fill="none" stroke="#5cbfae" stroke-width="1.25" opacity="0.62"/><path d="M735.0 318.4 L740.0 316.0 L745.0 314.1 L750.0 312.9 L755.0 312.4 L760.0 312.5 L765.0 313.2 L770.0 314.4 L775.0 316.0 L780.0 318.0 L785.0 320.2 L790.0 322.4 L795.0 324.6 L800.0 326.6 L805.0 328.3 L810.0 329.5 L815.0 330.1 L820.0 330.3 L825.0 330.3 L830.0 330.1 L835.0 329.9 L840.0 329.5 L845.0 329.0 L850.0 328.4 L855.0 327.8 L860.0 327.0 L865.0 326.1 L870.0 325.3 L875.0 324.4 L880.0 323.7 L885.0 323.0 L890.0 322.4 L895.0 321.7 L900.0 321.1 L905.0 320.6 L910.0 320.2 L915.0 320.0 L920.0 319.9 L925.0 320.0 L930.0 320.2 L935.0 320.6 L940.0 321.1 L945.0 321.6 L950.0 322.3 L955.0 322.9 L960.0 323.6 L965.0 324.3 L970.0 324.8 L975.0 325.4 L980.0 325.8 L985.0 326.2 L990.0 326.5 L995.0 326.7" fill="none" stroke="#5cbfae" stroke-width="1.25" opacity="0.62"/><path d="M0.0 362.6 L5.0 361.6 L10.0 360.4 L15.0 359.0 L20.0 357.4 L25.0 355.8 L30.0 354.0 L35.0 352.2 L40.0 350.4 L45.0 348.5 L50.0 346.5 L55.0 344.5 L60.0 342.5 L65.0 340.5 L70.0 338.4 L75.0 336.3 L80.0 334.2 L85.0 332.1 L90.0 330.0 L95.0 328.0 L100.0 325.9 L105.0 323.4 L110.0 320.7 L115.0 317.6 L120.0 314.5 L125.0 311.3 L130.0 307.9 L135.0 304.6 L140.0 301.5 L145.0 298.7 L150.0 296.2 L155.0 294.3 L160.0 292.9 L165.0 292.1 L170.0 291.8 L175.0 291.8 L180.0 292.2 L185.0 292.7 L190.0 293.6 L195.0 294.6 L200.0 295.9 L205.0 297.2 L210.0 298.7 L215.0 300.2 L220.0 301.7 L225.0 303.3 L230.0 305.0 L235.0 306.6 L240.0 308.2 L245.0 309.8 L250.0 311.2 L255.0 312.5 L260.0 313.8 L265.0 314.9 L270.0 315.9 L275.0 316.8 L280.0 317.6 L285.0 318.3 L290.0 319.0 L295.0 319.7 L300.0 320.3 L305.0 321.3 L310.0 322.7 L315.0 324.7 L320.0 327.2 L325.0 330.4 L330.0 334.1 L335.0 338.1 L340.0 342.4 L345.0 346.6 L350.0 350.7 L355.0 354.5 L360.0 357.8 L365.0 360.5 L370.0 362.2 L375.0 362.1 L380.0 360.3 L385.0 356.9 L390.0 352.3 L395.0 346.7 L400.0 340.6 L405.0 334.4 L410.0 328.3 L415.0 322.9 L420.0 318.7 L425.0 316.7 L430.0 315.7 L435.0 313.7 L440.0 310.9 L445.0 307.6 L450.0 304.2 L455.0 301.4 L460.0 299.5 L465.0 299.0 L470.0 299.9 L475.0 302.7 L480.0 307.5 L485.0 313.0 L490.0 318.0 L495.0 321.3 L500.0 323.4 L505.0 335.2 L510.0 355.0 L515.0 374.5 L520.0 386.0" fill="none" stroke="#5cbfae" stroke-width="1.25" opacity="0.68"/><path d="M735.0 321.6 L740.0 320.0 L745.0 319.1 L750.0 318.9 L755.0 319.5 L760.0 320.7 L765.0 322.4 L770.0 324.6 L775.0 327.0 L780.0 329.7 L785.0 332.4 L790.0 334.9 L795.0 337.2 L800.0 339.1 L805.0 340.4 L810.0 341.1 L815.0 341.1 L820.0 340.5 L825.0 339.5 L830.0 338.5 L835.0 337.3 L840.0 336.0 L845.0 334.7 L850.0 333.4 L855.0 332.1 L860.0 330.9 L865.0 329.8 L870.0 328.8 L875.0 328.0 L880.0 327.4 L885.0 327.1 L890.0 326.9 L895.0 326.7 L900.0 326.6 L905.0 326.6 L910.0 326.7 L915.0 326.9 L920.0 327.1 L925.0 327.3 L930.0 327.5 L935.0 327.7 L940.0 327.8 L945.0 327.8 L950.0 327.7 L955.0 327.5 L960.0 327.2 L965.0 326.8 L970.0 326.3 L975.0 325.7 L980.0 325.1 L985.0 324.5 L990.0 324.0 L995.0 323.6" fill="none" stroke="#5cbfae" stroke-width="1.25" opacity="0.68"/><path d="M0.0 362.7 L5.0 362.0 L10.0 361.1 L15.0 360.1 L20.0 358.9 L25.0 357.6 L30.0 356.0 L35.0 354.4 L40.0 352.5 L45.0 350.4 L50.0 348.2 L55.0 345.8 L60.0 343.2 L65.0 340.5 L70.0 337.7 L75.0 334.8 L80.0 331.9 L85.0 329.1 L90.0 326.4 L95.0 323.8 L100.0 321.3 L105.0 318.7 L110.0 315.9 L115.0 313.2 L120.0 310.5 L125.0 308.0 L130.0 305.6 L135.0 303.5 L140.0 301.6 L145.0 300.2 L150.0 299.2 L155.0 298.8 L160.0 298.9 L165.0 299.5 L170.0 300.6 L175.0 301.8 L180.0 303.2 L185.0 304.7 L190.0 306.2 L195.0 307.7 L200.0 309.2 L205.0 310.6 L210.0 311.9 L215.0 313.0 L220.0 314.1 L225.0 315.1 L230.0 316.1 L235.0 317.1 L240.0 318.1 L245.0 319.0 L250.0 319.9 L255.0 320.8 L260.0 321.7 L265.0 322.6 L270.0 323.6 L275.0 324.6 L280.0 325.6 L285.0 326.7 L290.0 327.8 L295.0 328.9 L300.0 330.0 L305.0 331.4 L310.0 333.2 L315.0 335.3 L320.0 337.9 L325.0 341.0 L330.0 344.3 L335.0 347.9 L340.0 351.5 L345.0 354.9 L350.0 358.0 L355.0 360.6 L360.0 362.6 L365.0 364.0 L370.0 364.3 L375.0 362.9 L380.0 359.9 L385.0 355.5 L390.0 350.0 L395.0 343.7 L400.0 337.1 L405.0 330.4 L410.0 324.3 L415.0 318.9 L420.0 314.9 L425.0 313.2 L430.0 312.9 L435.0 311.8 L440.0 310.1 L445.0 308.0 L450.0 306.1 L455.0 304.7 L460.0 304.1 L465.0 304.8 L470.0 306.8 L475.0 310.4 L480.0 315.6 L485.0 321.4 L490.0 326.4 L495.0 329.8 L500.0 331.9 L505.0 343.1 L510.0 361.7 L515.0 380.2 L520.0 390.8" fill="none" stroke="#5cbfae" stroke-width="1.25" opacity="0.77"/><path d="M735.0 324.2 L740.0 322.8 L745.0 322.1 L750.0 322.2 L755.0 322.9 L760.0 324.2 L765.0 326.0 L770.0 328.0 L775.0 330.3 L780.0 332.6 L785.0 334.7 L790.0 336.7 L795.0 338.2 L800.0 339.3 L805.0 339.8 L810.0 339.6 L815.0 338.8 L820.0 337.4 L825.0 335.9 L830.0 334.3 L835.0 332.9 L840.0 331.5 L845.0 330.4 L850.0 329.4 L855.0 328.7 L860.0 328.3 L865.0 328.1 L870.0 328.3 L875.0 328.8 L880.0 329.6 L885.0 330.7 L890.0 331.9 L895.0 333.2 L900.0 334.4 L905.0 335.6 L910.0 336.7 L915.0 337.6 L920.0 338.5 L925.0 339.1 L930.0 339.5 L935.0 339.6 L940.0 339.5 L945.0 339.2 L950.0 338.6 L955.0 337.8 L960.0 336.8 L965.0 335.8 L970.0 334.6 L975.0 333.4 L980.0 332.3 L985.0 331.3 L990.0 330.6 L995.0 330.0" fill="none" stroke="#5cbfae" stroke-width="1.25" opacity="0.77"/><path d="M520.0 390.8 L525.0 391.9 L530.0 394.2 L535.0 398.6 L540.0 404.6 L545.0 411.2 L550.0 417.7 L555.0 423.2 L560.0 426.9 L565.0 428.5 L570.0 428.8 L575.0 430.4 L580.0 433.3 L585.0 437.2 L590.0 441.9 L595.0 446.8 L600.0 451.8 L605.0 456.4 L610.0 460.2 L615.0 463.1 L620.0 464.6 L625.0 463.9 L630.0 460.8 L635.0 455.3 L640.0 448.0 L645.0 439.6 L650.0 430.9 L655.0 422.9 L660.0 416.3 L665.0 411.6 L670.0 407.7 L675.0 401.8 L680.0 394.2 L685.0 385.6 L690.0 376.3 L695.0 366.2 L700.0 356.3 L705.0 347.3 L710.0 340.0 L715.0 334.9 L720.0 331.6 L725.0 328.7 L730.0 326.2 L735.0 324.2" fill="none" stroke="#5cbfae" stroke-width="1.25" opacity="0.77"/><path d="M0.0 365.6 L5.0 365.5 L10.0 365.2 L15.0 364.6 L20.0 363.8 L25.0 362.6 L30.0 361.1 L35.0 359.3 L40.0 357.1 L45.0 354.6 L50.0 351.7 L55.0 348.7 L60.0 345.4 L65.0 341.9 L70.0 338.4 L75.0 334.9 L80.0 331.4 L85.0 328.1 L90.0 325.1 L95.0 322.5 L100.0 320.1 L105.0 317.7 L110.0 315.5 L115.0 313.5 L120.0 311.8 L125.0 310.3 L130.0 309.1 L135.0 308.1 L140.0 307.5 L145.0 307.3 L150.0 307.5 L155.0 308.0 L160.0 309.0 L165.0 310.3 L170.0 311.9 L175.0 313.4 L180.0 314.9 L185.0 316.2 L190.0 317.4 L195.0 318.5 L200.0 319.3 L205.0 320.0 L210.0 320.5 L215.0 320.8 L220.0 321.0 L225.0 321.3 L230.0 321.6 L235.0 322.0 L240.0 322.4 L245.0 323.1 L250.0 323.8 L255.0 324.7 L260.0 325.8 L265.0 327.1 L270.0 328.5 L275.0 330.0 L280.0 331.6 L285.0 333.3 L290.0 335.0 L295.0 336.7 L300.0 338.2 L305.0 339.9 L310.0 341.8 L315.0 344.0 L320.0 346.3 L325.0 348.9 L330.0 351.7 L335.0 354.5 L340.0 357.1 L345.0 359.5 L350.0 361.5 L355.0 363.0 L360.0 364.0 L365.0 364.4 L370.0 363.8 L375.0 361.7 L380.0 358.2 L385.0 353.5 L390.0 347.9 L395.0 341.8 L400.0 335.6 L405.0 329.5 L410.0 324.1 L415.0 319.5 L420.0 316.5 L425.0 315.8 L430.0 316.5 L435.0 316.7 L440.0 316.3 L445.0 315.6 L450.0 314.9 L455.0 314.5 L460.0 314.9 L465.0 316.2 L470.0 318.7 L475.0 322.3 L480.0 327.4 L485.0 332.7 L490.0 337.2 L495.0 340.0 L500.0 341.4 L505.0 351.5 L510.0 368.7 L515.0 385.8 L520.0 395.4" fill="none" stroke="#5cbfae" stroke-width="1.25" opacity="0.78"/><path d="M735.0 329.3 L740.0 328.3 L745.0 328.0 L750.0 328.2 L755.0 329.0 L760.0 330.3 L765.0 331.8 L770.0 333.5 L775.0 335.2 L780.0 336.9 L785.0 338.3 L790.0 339.5 L795.0 340.3 L800.0 340.6 L805.0 340.4 L810.0 339.7 L815.0 338.4 L820.0 336.7 L825.0 335.0 L830.0 333.5 L835.0 332.3 L840.0 331.5 L845.0 331.0 L850.0 330.8 L855.0 331.1 L860.0 331.7 L865.0 332.8 L870.0 334.1 L875.0 335.8 L880.0 337.7 L885.0 339.8 L890.0 341.8 L895.0 343.7 L900.0 345.4 L905.0 346.9 L910.0 348.0 L915.0 348.8 L920.0 349.3 L925.0 349.4 L930.0 349.1 L935.0 348.4 L940.0 347.4 L945.0 346.2 L950.0 344.7 L955.0 343.0 L960.0 341.3 L965.0 339.5 L970.0 337.9 L975.0 336.3 L980.0 335.1 L985.0 334.1 L990.0 333.5 L995.0 333.3" fill="none" stroke="#5cbfae" stroke-width="1.25" opacity="0.78"/><path d="M0.0 368.2 L5.0 368.4 L10.0 368.2 L15.0 367.6 L20.0 366.6 L25.0 365.2 L30.0 363.3 L35.0 361.0 L40.0 358.2 L45.0 355.1 L50.0 351.7 L55.0 348.1 L60.0 344.3 L65.0 340.5 L70.0 336.8 L75.0 333.2 L80.0 329.9 L85.0 326.9 L90.0 324.5 L95.0 322.5 L100.0 321.0 L105.0 319.7 L110.0 318.7 L115.0 318.0 L120.0 317.7 L125.0 317.6 L130.0 317.7 L135.0 318.0 L140.0 318.6 L145.0 319.3 L150.0 320.2 L155.0 321.3 L160.0 322.6 L165.0 324.1 L170.0 325.5 L175.0 326.7 L180.0 327.6 L185.0 328.3 L190.0 328.7 L195.0 328.9 L200.0 328.9 L205.0 328.7 L210.0 328.3 L215.0 327.9 L220.0 327.4 L225.0 327.1 L230.0 327.0 L235.0 327.2 L240.0 327.6 L245.0 328.2 L250.0 329.2 L255.0 330.4 L260.0 331.8 L265.0 333.5 L270.0 335.3 L275.0 337.3 L280.0 339.2 L285.0 341.2 L290.0 343.0 L295.0 344.6 L300.0 345.9 L305.0 347.2 L310.0 348.6 L315.0 349.9 L320.0 351.3 L325.0 352.8 L330.0 354.4 L335.0 356.0 L340.0 357.4 L345.0 358.6 L350.0 359.5 L355.0 360.1 L360.0 360.2 L365.0 359.9 L370.0 359.0 L375.0 356.8 L380.0 353.5 L385.0 349.2 L390.0 344.4 L395.0 339.2 L400.0 334.0 L405.0 329.2 L410.0 325.0 L415.0 321.8 L420.0 320.0 L425.0 320.5 L430.0 322.5 L435.0 323.8 L440.0 324.6 L445.0 324.9 L450.0 325.1 L455.0 325.6 L460.0 326.5 L465.0 328.1 L470.0 330.6 L475.0 334.1 L480.0 338.7 L485.0 343.5 L490.0 347.3 L495.0 349.5 L500.0 350.5 L505.0 359.9 L510.0 376.0 L515.0 392.2 L520.0 401.4" fill="none" stroke="#5cbfae" stroke-width="1.25" opacity="0.80"/><path d="M735.0 333.5 L740.0 332.6 L745.0 332.1 L750.0 332.0 L755.0 332.5 L760.0 333.2 L765.0 334.1 L770.0 335.2 L775.0 336.2 L780.0 337.2 L785.0 338.1 L790.0 338.7 L795.0 339.1 L800.0 339.2 L805.0 338.9 L810.0 338.2 L815.0 337.2 L820.0 336.0 L825.0 335.0 L830.0 334.4 L835.0 334.3 L840.0 334.6 L845.0 335.4 L850.0 336.6 L855.0 338.2 L860.0 340.2 L865.0 342.4 L870.0 344.9 L875.0 347.5 L880.0 350.2 L885.0 352.9 L890.0 355.3 L895.0 357.3 L900.0 358.9 L905.0 360.0 L910.0 360.6 L915.0 360.7 L920.0 360.4 L925.0 359.5 L930.0 358.3 L935.0 356.7 L940.0 354.8 L945.0 352.7 L950.0 350.5 L955.0 348.2 L960.0 346.0 L965.0 344.0 L970.0 342.2 L975.0 340.7 L980.0 339.6 L985.0 338.9 L990.0 338.7 L995.0 338.9" fill="none" stroke="#5cbfae" stroke-width="1.25" opacity="0.80"/><path d="M0.0 380.6 L5.0 380.6 L10.0 380.0 L15.0 378.9 L20.0 377.2 L25.0 374.8 L30.0 372.0 L35.0 368.7 L40.0 365.0 L45.0 360.9 L50.0 356.6 L55.0 352.2 L60.0 347.8 L65.0 343.5 L70.0 339.5 L75.0 335.7 L80.0 332.4 L85.0 329.6 L90.0 327.4 L95.0 325.9 L100.0 324.9 L105.0 324.1 L110.0 323.7 L115.0 323.5 L120.0 323.7 L125.0 324.0 L130.0 324.3 L135.0 324.8 L140.0 325.2 L145.0 325.7 L150.0 326.2 L155.0 326.7 L160.0 327.3 L165.0 327.8 L170.0 328.3 L175.0 328.5 L180.0 328.5 L185.0 328.2 L190.0 327.7 L195.0 327.2 L200.0 326.5 L205.0 325.9 L210.0 325.3 L215.0 324.9 L220.0 324.7 L225.0 324.8 L230.0 325.3 L235.0 326.2 L240.0 327.6 L245.0 329.3 L250.0 331.3 L255.0 333.7 L260.0 336.3 L265.0 339.0 L270.0 341.8 L275.0 344.6 L280.0 347.3 L285.0 349.8 L290.0 351.9 L295.0 353.7 L300.0 355.1 L305.0 356.2 L310.0 357.1 L315.0 358.0 L320.0 358.8 L325.0 359.6 L330.0 360.6 L335.0 361.5 L340.0 362.4 L345.0 363.1 L350.0 363.7 L355.0 364.1 L360.0 364.3 L365.0 364.2 L370.0 363.6 L375.0 362.1 L380.0 359.5 L385.0 356.2 L390.0 352.4 L395.0 348.3 L400.0 344.2 L405.0 340.4 L410.0 337.1 L415.0 334.6 L420.0 333.3 L425.0 334.2 L430.0 336.2 L435.0 337.6 L440.0 338.2 L445.0 338.3 L450.0 338.2 L455.0 338.0 L460.0 338.2 L465.0 339.0 L470.0 340.4 L475.0 342.7 L480.0 346.1 L485.0 349.6 L490.0 352.2 L495.0 353.5 L500.0 353.7 L505.0 362.0 L510.0 377.1 L515.0 392.3 L520.0 401.1" fill="none" stroke="#5cbfae" stroke-width="1.25" opacity="0.55"/><path d="M735.0 346.9 L740.0 345.6 L745.0 344.5 L750.0 343.7 L755.0 343.2 L760.0 343.1 L765.0 343.0 L770.0 343.1 L775.0 343.2 L780.0 343.3 L785.0 343.4 L790.0 343.5 L795.0 343.4 L800.0 343.1 L805.0 342.7 L810.0 342.0 L815.0 341.2 L820.0 340.3 L825.0 339.7 L830.0 339.7 L835.0 340.1 L840.0 341.0 L845.0 342.2 L850.0 343.9 L855.0 345.8 L860.0 348.0 L865.0 350.3 L870.0 352.6 L875.0 354.9 L880.0 357.1 L885.0 359.1 L890.0 360.7 L895.0 361.7 L900.0 362.3 L905.0 362.3 L910.0 361.8 L915.0 360.8 L920.0 359.4 L925.0 357.6 L930.0 355.6 L935.0 353.4 L940.0 351.1 L945.0 348.8 L950.0 346.5 L955.0 344.5 L960.0 342.8 L965.0 341.4 L970.0 340.4 L975.0 339.8 L980.0 339.8 L985.0 340.2 L990.0 341.0 L995.0 342.4" fill="none" stroke="#5cbfae" stroke-width="1.25" opacity="0.55"/><path d="M520.0 401.1 L525.0 402.3 L530.0 405.0 L535.0 409.8 L540.0 416.4 L545.0 423.9 L550.0 431.5 L555.0 438.4 L560.0 444.0 L565.0 447.6 L570.0 450.1 L575.0 453.5 L580.0 457.7 L585.0 462.5 L590.0 467.4 L595.0 472.2 L600.0 476.5 L605.0 479.9 L610.0 482.4 L615.0 483.5 L620.0 483.1 L625.0 480.5 L630.0 475.6 L635.0 468.3 L640.0 459.2 L645.0 449.1 L650.0 438.8 L655.0 429.2 L660.0 421.1 L665.0 415.2 L670.0 410.4 L675.0 404.5 L680.0 397.8 L685.0 390.8 L690.0 383.8 L695.0 376.3 L700.0 368.9 L705.0 362.4 L710.0 357.4 L715.0 354.1 L720.0 352.2 L725.0 350.3 L730.0 348.5 L735.0 346.9" fill="none" stroke="#5cbfae" stroke-width="1.25" opacity="0.55"/><path d="M0.0 381.9 L5.0 381.2 L10.0 379.9 L15.0 378.0 L20.0 375.5 L25.0 372.6 L30.0 369.2 L35.0 365.5 L40.0 361.5 L45.0 357.5 L50.0 353.4 L55.0 349.3 L60.0 345.5 L65.0 342.1 L70.0 339.0 L75.0 336.4 L80.0 334.3 L85.0 332.8 L90.0 332.0 L95.0 331.8 L100.0 332.0 L105.0 332.5 L110.0 333.2 L115.0 334.0 L120.0 334.9 L125.0 335.8 L130.0 336.6 L135.0 337.2 L140.0 337.6 L145.0 337.8 L150.0 338.0 L155.0 338.0 L160.0 337.9 L165.0 337.7 L170.0 337.5 L175.0 337.0 L180.0 336.3 L185.0 335.4 L190.0 334.6 L195.0 333.7 L200.0 332.9 L205.0 332.2 L210.0 331.8 L215.0 331.6 L220.0 331.8 L225.0 332.4 L230.0 333.4 L235.0 334.9 L240.0 336.7 L245.0 338.8 L250.0 341.2 L255.0 343.7 L260.0 346.3 L265.0 348.9 L270.0 351.4 L275.0 353.7 L280.0 355.7 L285.0 357.2 L290.0 358.4 L295.0 359.0 L300.0 359.1 L305.0 358.9 L310.0 358.6 L315.0 358.1 L320.0 357.6 L325.0 357.4 L330.0 357.3 L335.0 357.5 L340.0 357.8 L345.0 358.2 L350.0 358.7 L355.0 359.2 L360.0 359.8 L365.0 360.3 L370.0 360.6 L375.0 360.0 L380.0 358.6 L385.0 356.5 L390.0 354.0 L395.0 351.1 L400.0 348.2 L405.0 345.5 L410.0 343.1 L415.0 341.3 L420.0 340.5 L425.0 341.6 L430.0 343.8 L435.0 345.3 L440.0 346.1 L445.0 346.2 L450.0 346.1 L455.0 346.0 L460.0 346.1 L465.0 346.8 L470.0 348.1 L475.0 350.3 L480.0 353.6 L485.0 357.0 L490.0 359.8 L495.0 361.4 L500.0 362.2 L505.0 370.8 L510.0 385.9 L515.0 401.2 L520.0 410.7" fill="none" stroke="#5cbfae" stroke-width="1.25" opacity="0.79"/><path d="M735.0 348.9 L740.0 346.7 L745.0 344.6 L750.0 343.0 L755.0 341.7 L760.0 340.9 L765.0 340.3 L770.0 340.0 L775.0 340.0 L780.0 340.2 L785.0 340.6 L790.0 341.2 L795.0 341.8 L800.0 342.5 L805.0 343.2 L810.0 343.8 L815.0 344.2 L820.0 344.7 L825.0 345.5 L830.0 346.7 L835.0 348.4 L840.0 350.4 L845.0 352.6 L850.0 355.1 L855.0 357.6 L860.0 360.2 L865.0 362.6 L870.0 364.9 L875.0 367.0 L880.0 368.8 L885.0 370.3 L890.0 371.3 L895.0 371.6 L900.0 371.4 L905.0 370.7 L910.0 369.5 L915.0 368.0 L920.0 366.1 L925.0 363.9 L930.0 361.7 L935.0 359.4 L940.0 357.1 L945.0 355.0 L950.0 353.1 L955.0 351.5 L960.0 350.2 L965.0 349.3 L970.0 348.8 L975.0 348.6 L980.0 348.9 L985.0 349.5 L990.0 350.4 L995.0 351.7" fill="none" stroke="#5cbfae" stroke-width="1.25" opacity="0.79"/><path d="M0.0 384.6 L5.0 383.1 L10.0 381.1 L15.0 378.5 L20.0 375.6 L25.0 372.3 L30.0 368.7 L35.0 365.0 L40.0 361.3 L45.0 357.6 L50.0 354.1 L55.0 350.8 L60.0 347.9 L65.0 345.4 L70.0 343.3 L75.0 341.8 L80.0 340.8 L85.0 340.2 L90.0 340.2 L95.0 340.7 L100.0 341.6 L105.0 342.4 L110.0 343.3 L115.0 344.1 L120.0 344.9 L125.0 345.5 L130.0 345.8 L135.0 345.7 L140.0 345.4 L145.0 344.9 L150.0 344.2 L155.0 343.4 L160.0 342.5 L165.0 341.7 L170.0 340.8 L175.0 339.9 L180.0 338.9 L185.0 338.0 L190.0 337.2 L195.0 336.6 L200.0 336.3 L205.0 336.2 L210.0 336.4 L215.0 336.9 L220.0 337.8 L225.0 339.1 L230.0 340.8 L235.0 342.8 L240.0 345.0 L245.0 347.4 L250.0 349.9 L255.0 352.4 L260.0 354.8 L265.0 356.9 L270.0 358.8 L275.0 360.3 L280.0 361.4 L285.0 362.1 L290.0 362.2 L295.0 361.8 L300.0 361.0 L305.0 359.8 L310.0 358.7 L315.0 357.5 L320.0 356.5 L325.0 356.0 L330.0 355.8 L335.0 356.0 L340.0 356.6 L345.0 357.5 L350.0 358.6 L355.0 360.0 L360.0 361.5 L365.0 363.0 L370.0 364.3 L375.0 364.7 L380.0 364.4 L385.0 363.4 L390.0 361.7 L395.0 359.6 L400.0 357.3 L405.0 355.0 L410.0 352.7 L415.0 350.8 L420.0 349.8 L425.0 350.5 L430.0 352.2 L435.0 353.2 L440.0 353.5 L445.0 353.4 L450.0 353.0 L455.0 352.7 L460.0 352.7 L465.0 353.4 L470.0 354.7 L475.0 357.1 L480.0 360.5 L485.0 364.1 L490.0 367.2 L495.0 369.4 L500.0 371.0 L505.0 380.0 L510.0 395.1 L515.0 410.5 L520.0 420.3" fill="none" stroke="#5cbfae" stroke-width="1.25" opacity="0.67"/><path d="M735.0 352.1 L740.0 348.9 L745.0 346.1 L750.0 343.8 L755.0 342.1 L760.0 341.0 L765.0 340.4 L770.0 340.2 L775.0 340.6 L780.0 341.3 L785.0 342.5 L790.0 343.9 L795.0 345.5 L800.0 347.3 L805.0 349.0 L810.0 350.6 L815.0 352.0 L820.0 353.4 L825.0 355.0 L830.0 356.8 L835.0 358.9 L840.0 361.2 L845.0 363.5 L850.0 365.7 L855.0 367.9 L860.0 370.0 L865.0 371.8 L870.0 373.3 L875.0 374.6 L880.0 375.5 L885.0 376.2 L890.0 376.3 L895.0 375.9 L900.0 375.1 L905.0 373.9 L910.0 372.4 L915.0 370.6 L920.0 368.7 L925.0 366.7 L930.0 364.8 L935.0 362.9 L940.0 361.2 L945.0 359.6 L950.0 358.4 L955.0 357.4 L960.0 356.7 L965.0 356.2 L970.0 356.1 L975.0 356.2 L980.0 356.5 L985.0 357.1 L990.0 357.8 L995.0 358.5" fill="none" stroke="#5cbfae" stroke-width="1.25" opacity="0.67"/><path d="M0.0 390.2 L5.0 388.0 L10.0 385.4 L15.0 382.5 L20.0 379.3 L25.0 375.9 L30.0 372.5 L35.0 369.1 L40.0 365.7 L45.0 362.6 L50.0 359.6 L55.0 357.0 L60.0 354.7 L65.0 352.7 L70.0 351.1 L75.0 349.9 L80.0 349.1 L85.0 348.7 L90.0 348.5 L95.0 348.7 L100.0 349.0 L105.0 349.2 L110.0 349.3 L115.0 349.2 L120.0 349.0 L125.0 348.6 L130.0 347.8 L135.0 346.7 L140.0 345.4 L145.0 344.0 L150.0 342.5 L155.0 341.1 L160.0 339.8 L165.0 338.8 L170.0 337.9 L175.0 337.2 L180.0 336.7 L185.0 336.4 L190.0 336.3 L195.0 336.6 L200.0 337.2 L205.0 338.1 L210.0 339.4 L215.0 340.9 L220.0 342.7 L225.0 344.8 L230.0 347.2 L235.0 349.7 L240.0 352.2 L245.0 354.8 L250.0 357.3 L255.0 359.6 L260.0 361.6 L265.0 363.3 L270.0 364.7 L275.0 365.6 L280.0 366.2 L285.0 366.3 L290.0 365.9 L295.0 365.2 L300.0 364.1 L305.0 362.9 L310.0 361.8 L315.0 360.9 L320.0 360.2 L325.0 360.1 L330.0 360.6 L335.0 361.6 L340.0 363.1 L345.0 364.9 L350.0 367.0 L355.0 369.3 L360.0 371.6 L365.0 373.9 L370.0 375.8 L375.0 376.9 L380.0 377.0 L385.0 376.2 L390.0 374.6 L395.0 372.4 L400.0 369.7 L405.0 366.8 L410.0 363.9 L415.0 361.1 L420.0 359.0 L425.0 358.6 L430.0 359.3 L435.0 359.4 L440.0 359.0 L445.0 358.4 L450.0 357.6 L455.0 357.2 L460.0 357.2 L465.0 358.0 L470.0 359.5 L475.0 362.1 L480.0 365.8 L485.0 369.7 L490.0 373.2 L495.0 375.9 L500.0 378.0 L505.0 387.1 L510.0 401.9 L515.0 416.9 L520.0 426.5" fill="none" stroke="#5cbfae" stroke-width="1.25" opacity="0.56"/><path d="M735.0 358.4 L740.0 354.6 L745.0 351.4 L750.0 348.8 L755.0 347.0 L760.0 346.0 L765.0 345.6 L770.0 345.8 L775.0 346.6 L780.0 348.0 L785.0 349.8 L790.0 351.8 L795.0 354.1 L800.0 356.3 L805.0 358.4 L810.0 360.3 L815.0 361.8 L820.0 363.1 L825.0 364.4 L830.0 365.8 L835.0 367.2 L840.0 368.7 L845.0 370.0 L850.0 371.3 L855.0 372.3 L860.0 373.2 L865.0 373.9 L870.0 374.3 L875.0 374.6 L880.0 374.7 L885.0 374.6 L890.0 374.2 L895.0 373.5 L900.0 372.5 L905.0 371.3 L910.0 370.1 L915.0 368.7 L920.0 367.4 L925.0 366.1 L930.0 365.0 L935.0 364.0 L940.0 363.1 L945.0 362.4 L950.0 361.9 L955.0 361.6 L960.0 361.4 L965.0 361.4 L970.0 361.5 L975.0 361.7 L980.0 362.0 L985.0 362.3 L990.0 362.6 L995.0 363.0" fill="none" stroke="#5cbfae" stroke-width="1.25" opacity="0.56"/><path d="M520.0 426.5 L525.0 429.6 L530.0 433.7 L535.0 439.2 L540.0 445.8 L545.0 452.8 L550.0 459.4 L555.0 465.0 L560.0 469.0 L565.0 471.0 L570.0 471.6 L575.0 472.7 L580.0 474.3 L585.0 476.2 L590.0 478.2 L595.0 480.2 L600.0 481.8 L605.0 483.1 L610.0 483.7 L615.0 483.7 L620.0 482.8 L625.0 480.4 L630.0 476.6 L635.0 470.8 L640.0 463.5 L645.0 455.6 L650.0 447.6 L655.0 440.2 L660.0 434.2 L665.0 429.9 L670.0 426.7 L675.0 422.4 L680.0 417.5 L685.0 412.3 L690.0 406.7 L695.0 400.2 L700.0 393.2 L705.0 386.5 L710.0 380.4 L715.0 375.4 L720.0 371.2 L725.0 366.8 L730.0 362.5 L735.0 358.4" fill="none" stroke="#5cbfae" stroke-width="1.25" opacity="0.56"/><path d="M0.0 387.2 L5.0 385.1 L10.0 382.8 L15.0 380.4 L20.0 377.9 L25.0 375.4 L30.0 373.0 L35.0 370.6 L40.0 368.4 L45.0 366.4 L50.0 364.6 L55.0 363.0 L60.0 361.7 L65.0 360.5 L70.0 359.6 L75.0 358.9 L80.0 358.3 L85.0 358.0 L90.0 357.7 L95.0 357.6 L100.0 357.5 L105.0 357.2 L110.0 356.6 L115.0 355.9 L120.0 355.1 L125.0 354.1 L130.0 352.8 L135.0 351.3 L140.0 349.8 L145.0 348.2 L150.0 346.8 L155.0 345.6 L160.0 344.6 L165.0 344.0 L170.0 343.7 L175.0 343.7 L180.0 343.9 L185.0 344.4 L190.0 345.1 L195.0 346.1 L200.0 347.3 L205.0 348.7 L210.0 350.3 L215.0 352.0 L220.0 353.8 L225.0 355.6 L230.0 357.5 L235.0 359.4 L240.0 361.2 L245.0 362.8 L250.0 364.1 L255.0 365.3 L260.0 366.1 L265.0 366.6 L270.0 366.9 L275.0 366.8 L280.0 366.4 L285.0 365.7 L290.0 364.8 L295.0 363.7 L300.0 362.4 L305.0 361.3 L310.0 360.4 L315.0 359.8 L320.0 359.6 L325.0 360.2 L330.0 361.3 L335.0 363.1 L340.0 365.3 L345.0 367.9 L350.0 370.7 L355.0 373.5 L360.0 376.4 L365.0 379.0 L370.0 381.2 L375.0 382.4 L380.0 382.5 L385.0 381.6 L390.0 379.9 L395.0 377.4 L400.0 374.4 L405.0 371.1 L410.0 367.8 L415.0 364.6 L420.0 362.2 L425.0 361.6 L430.0 362.1 L435.0 362.3 L440.0 362.4 L445.0 362.4 L450.0 362.6 L455.0 363.2 L460.0 364.4 L465.0 366.4 L470.0 369.2 L475.0 372.9 L480.0 377.6 L485.0 382.5 L490.0 386.8 L495.0 390.3 L500.0 393.1 L505.0 402.3 L510.0 416.6 L515.0 430.9 L520.0 440.1" fill="none" stroke="#5cbfae" stroke-width="1.25" opacity="0.67"/><path d="M735.0 356.6 L740.0 353.0 L745.0 350.1 L750.0 348.0 L755.0 347.0 L760.0 346.8 L765.0 347.4 L770.0 348.7 L775.0 350.7 L780.0 353.2 L785.0 356.0 L790.0 359.0 L795.0 362.1 L800.0 365.0 L805.0 367.6 L810.0 369.8 L815.0 371.4 L820.0 372.6 L825.0 373.7 L830.0 374.7 L835.0 375.7 L840.0 376.5 L845.0 377.3 L850.0 377.9 L855.0 378.4 L860.0 378.7 L865.0 378.9 L870.0 379.1 L875.0 379.2 L880.0 379.2 L885.0 379.3 L890.0 379.2 L895.0 378.9 L900.0 378.5 L905.0 377.9 L910.0 377.4 L915.0 376.7 L920.0 376.1 L925.0 375.5 L930.0 374.9 L935.0 374.3 L940.0 373.7 L945.0 373.1 L950.0 372.4 L955.0 371.8 L960.0 371.1 L965.0 370.4 L970.0 369.7 L975.0 368.9 L980.0 368.1 L985.0 367.2 L990.0 366.3 L995.0 365.5" fill="none" stroke="#5cbfae" stroke-width="1.25" opacity="0.67"/><path d="M0.0 398.5 L5.0 397.1 L10.0 395.6 L15.0 394.0 L20.0 392.3 L25.0 390.6 L30.0 388.8 L35.0 387.1 L40.0 385.3 L45.0 383.5 L50.0 381.7 L55.0 379.9 L60.0 378.1 L65.0 376.2 L70.0 374.3 L75.0 372.4 L80.0 370.4 L85.0 368.5 L90.0 366.6 L95.0 364.7 L100.0 362.8 L105.0 360.7 L110.0 358.5 L115.0 356.2 L120.0 354.0 L125.0 351.7 L130.0 349.4 L135.0 347.1 L140.0 345.0 L145.0 343.1 L150.0 341.4 L155.0 340.2 L160.0 339.5 L165.0 339.2 L170.0 339.3 L175.0 339.7 L180.0 340.4 L185.0 341.4 L190.0 342.6 L195.0 344.0 L200.0 345.5 L205.0 347.1 L210.0 348.8 L215.0 350.5 L220.0 352.1 L225.0 353.8 L230.0 355.4 L235.0 356.9 L240.0 358.4 L245.0 359.7 L250.0 360.9 L255.0 361.9 L260.0 362.7 L265.0 363.4 L270.0 364.0 L275.0 364.5 L280.0 364.9 L285.0 365.3 L290.0 365.6 L295.0 365.8 L300.0 366.1 L305.0 366.5 L310.0 367.3 L315.0 368.4 L320.0 369.9 L325.0 372.0 L330.0 374.7 L335.0 377.7 L340.0 381.1 L345.0 384.6 L350.0 388.1 L355.0 391.5 L360.0 394.5 L365.0 397.2 L370.0 399.2 L375.0 400.0 L380.0 399.7 L385.0 398.2 L390.0 395.8 L395.0 392.6 L400.0 388.9 L405.0 384.9 L410.0 380.8 L415.0 376.9 L420.0 373.8 L425.0 372.6 L430.0 372.6 L435.0 372.7 L440.0 372.8 L445.0 373.0 L450.0 373.4 L455.0 374.4 L460.0 376.0 L465.0 378.2 L470.0 381.2 L475.0 384.8 L480.0 389.2 L485.0 393.6 L490.0 397.2 L495.0 399.9 L500.0 401.9 L505.0 409.6 L510.0 422.0 L515.0 434.2 L520.0 441.5" fill="none" stroke="#5cbfae" stroke-width="1.25" opacity="0.52"/><path d="M735.0 369.4 L740.0 366.6 L745.0 364.5 L750.0 363.4 L755.0 363.1 L760.0 363.8 L765.0 365.1 L770.0 366.9 L775.0 369.2 L780.0 371.8 L785.0 374.5 L790.0 377.2 L795.0 379.7 L800.0 381.8 L805.0 383.3 L810.0 384.2 L815.0 384.4 L820.0 383.9 L825.0 383.3 L830.0 382.6 L835.0 381.8 L840.0 381.0 L845.0 380.1 L850.0 379.2 L855.0 378.4 L860.0 377.6 L865.0 376.9 L870.0 376.3 L875.0 375.8 L880.0 375.6 L885.0 375.5 L890.0 375.4 L895.0 375.2 L900.0 375.0 L905.0 374.8 L910.0 374.5 L915.0 374.1 L920.0 373.7 L925.0 373.2 L930.0 372.7 L935.0 372.0 L940.0 371.3 L945.0 370.4 L950.0 369.5 L955.0 368.4 L960.0 367.2 L965.0 366.0 L970.0 364.7 L975.0 363.5 L980.0 362.3 L985.0 361.2 L990.0 360.2 L995.0 359.5" fill="none" stroke="#5cbfae" stroke-width="1.25" opacity="0.52"/><path d="M0.0 390.1 L5.0 389.6 L10.0 389.0 L15.0 388.4 L20.0 387.8 L25.0 387.1 L30.0 386.3 L35.0 385.4 L40.0 384.5 L45.0 383.4 L50.0 382.1 L55.0 380.8 L60.0 379.2 L65.0 377.6 L70.0 375.8 L75.0 374.0 L80.0 372.1 L85.0 370.2 L90.0 368.4 L95.0 366.7 L100.0 365.1 L105.0 363.4 L110.0 361.8 L115.0 360.4 L120.0 359.1 L125.0 358.0 L130.0 356.9 L135.0 356.1 L140.0 355.4 L145.0 355.0 L150.0 354.9 L155.0 355.1 L160.0 355.7 L165.0 356.7 L170.0 357.9 L175.0 359.2 L180.0 360.5 L185.0 361.9 L190.0 363.2 L195.0 364.4 L200.0 365.5 L205.0 366.5 L210.0 367.2 L215.0 367.8 L220.0 368.2 L225.0 368.4 L230.0 368.6 L235.0 368.6 L240.0 368.5 L245.0 368.3 L250.0 368.0 L255.0 367.8 L260.0 367.5 L265.0 367.2 L270.0 367.0 L275.0 366.8 L280.0 366.8 L285.0 366.7 L290.0 366.8 L295.0 367.0 L300.0 367.2 L305.0 367.6 L310.0 368.3 L315.0 369.2 L320.0 370.5 L325.0 372.3 L330.0 374.6 L335.0 377.1 L340.0 379.8 L345.0 382.6 L350.0 385.3 L355.0 387.7 L360.0 389.9 L365.0 391.7 L370.0 392.8 L375.0 392.8 L380.0 391.9 L385.0 390.0 L390.0 387.4 L395.0 384.3 L400.0 380.8 L405.0 377.2 L410.0 373.8 L415.0 370.8 L420.0 368.8 L425.0 368.9 L430.0 370.4 L435.0 372.3 L440.0 374.3 L445.0 376.7 L450.0 379.4 L455.0 382.5 L460.0 386.2 L465.0 390.4 L470.0 395.0 L475.0 400.1 L480.0 405.5 L485.0 410.6 L490.0 414.8 L495.0 417.9 L500.0 420.2 L505.0 427.5 L510.0 438.9 L515.0 450.1 L520.0 456.6" fill="none" stroke="#5cbfae" stroke-width="1.25" opacity="0.80"/><path d="M735.0 363.1 L740.0 361.0 L745.0 359.7 L750.0 359.4 L755.0 360.0 L760.0 361.4 L765.0 363.4 L770.0 365.9 L775.0 368.8 L780.0 371.8 L785.0 374.9 L790.0 377.8 L795.0 380.4 L800.0 382.6 L805.0 384.1 L810.0 385.1 L815.0 385.2 L820.0 384.9 L825.0 384.5 L830.0 384.1 L835.0 383.7 L840.0 383.5 L845.0 383.4 L850.0 383.5 L855.0 383.7 L860.0 384.2 L865.0 384.8 L870.0 385.7 L875.0 386.8 L880.0 388.1 L885.0 389.6 L890.0 390.9 L895.0 392.1 L900.0 393.0 L905.0 393.7 L910.0 394.1 L915.0 394.3 L920.0 394.0 L925.0 393.5 L930.0 392.6 L935.0 391.3 L940.0 389.7 L945.0 387.7 L950.0 385.5 L955.0 383.0 L960.0 380.4 L965.0 377.7 L970.0 374.9 L975.0 372.2 L980.0 369.6 L985.0 367.3 L990.0 365.2 L995.0 363.5" fill="none" stroke="#5cbfae" stroke-width="1.25" opacity="0.80"/><path d="M520.0 456.6 L525.0 457.6 L530.0 459.0 L535.0 461.6 L540.0 464.9 L545.0 468.5 L550.0 471.9 L555.0 474.7 L560.0 476.5 L565.0 477.0 L570.0 476.8 L575.0 477.4 L580.0 478.8 L585.0 480.8 L590.0 483.3 L595.0 486.0 L600.0 488.7 L605.0 491.2 L610.0 493.4 L615.0 495.0 L620.0 495.8 L625.0 495.2 L630.0 493.1 L635.0 488.7 L640.0 482.5 L645.0 475.1 L650.0 467.1 L655.0 459.0 L660.0 451.6 L665.0 445.3 L670.0 439.7 L675.0 433.3 L680.0 426.5 L685.0 419.8 L690.0 413.1 L695.0 405.6 L700.0 397.8 L705.0 390.3 L710.0 383.6 L715.0 378.1 L720.0 373.7 L725.0 369.6 L730.0 366.0 L735.0 363.1" fill="none" stroke="#5cbfae" stroke-width="1.25" opacity="0.80"/><path d="M0.0 408.1 L5.0 408.6 L10.0 408.9 L15.0 408.9 L20.0 408.7 L25.0 408.1 L30.0 407.2 L35.0 405.9 L40.0 404.2 L45.0 402.1 L50.0 399.7 L55.0 397.0 L60.0 393.9 L65.0 390.6 L70.0 387.2 L75.0 383.6 L80.0 380.1 L85.0 376.6 L90.0 373.3 L95.0 370.2 L100.0 367.4 L105.0 364.7 L110.0 362.3 L115.0 360.2 L120.0 358.5 L125.0 357.1 L130.0 355.9 L135.0 355.0 L140.0 354.3 L145.0 353.9 L150.0 353.8 L155.0 354.0 L160.0 354.5 L165.0 355.2 L170.0 356.0 L175.0 356.9 L180.0 357.6 L185.0 358.3 L190.0 358.9 L195.0 359.4 L200.0 359.7 L205.0 359.8 L210.0 359.8 L215.0 359.7 L220.0 359.5 L225.0 359.4 L230.0 359.3 L235.0 359.3 L240.0 359.5 L245.0 359.8 L250.0 360.3 L255.0 361.1 L260.0 362.0 L265.0 363.2 L270.0 364.6 L275.0 366.2 L280.0 368.0 L285.0 369.9 L290.0 371.9 L295.0 374.0 L300.0 376.0 L305.0 378.1 L310.0 380.2 L315.0 382.5 L320.0 384.8 L325.0 387.4 L330.0 390.2 L335.0 393.1 L340.0 395.9 L345.0 398.7 L350.0 401.2 L355.0 403.4 L360.0 405.2 L365.0 406.5 L370.0 407.2 L375.0 407.0 L380.0 405.9 L385.0 403.9 L390.0 401.4 L395.0 398.4 L400.0 395.1 L405.0 391.9 L410.0 388.8 L415.0 386.1 L420.0 384.5 L425.0 384.8 L430.0 386.7 L435.0 388.9 L440.0 391.3 L445.0 393.8 L450.0 396.7 L455.0 399.7 L460.0 403.1 L465.0 406.6 L470.0 410.3 L475.0 414.2 L480.0 418.0 L485.0 421.3 L490.0 423.5 L495.0 424.7 L500.0 425.0 L505.0 429.9 L510.0 438.7 L515.0 447.3 L520.0 451.7" fill="none" stroke="#5cbfae" stroke-width="1.25" opacity="0.74"/><path d="M735.0 382.9 L740.0 381.6 L745.0 381.1 L750.0 381.2 L755.0 382.0 L760.0 383.4 L765.0 385.2 L770.0 387.1 L775.0 389.2 L780.0 391.2 L785.0 393.0 L790.0 394.6 L795.0 395.7 L800.0 396.3 L805.0 396.3 L810.0 395.6 L815.0 394.3 L820.0 392.5 L825.0 390.7 L830.0 389.2 L835.0 387.8 L840.0 386.8 L845.0 386.0 L850.0 385.6 L855.0 385.5 L860.0 385.6 L865.0 386.1 L870.0 386.9 L875.0 387.8 L880.0 389.0 L885.0 390.2 L890.0 391.3 L895.0 392.0 L900.0 392.5 L905.0 392.5 L910.0 392.2 L915.0 391.4 L920.0 390.2 L925.0 388.6 L930.0 386.6 L935.0 384.2 L940.0 381.5 L945.0 378.6 L950.0 375.6 L955.0 372.4 L960.0 369.3 L965.0 366.3 L970.0 363.6 L975.0 361.2 L980.0 359.1 L985.0 357.6 L990.0 356.7 L995.0 356.3" fill="none" stroke="#5cbfae" stroke-width="1.25" opacity="0.74"/><path d="M0.0 411.1 L5.0 411.6 L10.0 411.8 L15.0 411.6 L20.0 410.9 L25.0 409.8 L30.0 408.3 L35.0 406.3 L40.0 403.8 L45.0 401.0 L50.0 397.8 L55.0 394.3 L60.0 390.6 L65.0 386.9 L70.0 383.1 L75.0 379.4 L80.0 375.9 L85.0 372.7 L90.0 369.8 L95.0 367.5 L100.0 365.6 L105.0 364.0 L110.0 362.8 L115.0 362.1 L120.0 361.9 L125.0 361.9 L130.0 362.2 L135.0 362.6 L140.0 363.2 L145.0 363.9 L150.0 364.7 L155.0 365.7 L160.0 366.6 L165.0 367.6 L170.0 368.5 L175.0 369.2 L180.0 369.7 L185.0 370.0 L190.0 370.0 L195.0 369.9 L200.0 369.5 L205.0 369.0 L210.0 368.4 L215.0 367.8 L220.0 367.2 L225.0 366.7 L230.0 366.4 L235.0 366.4 L240.0 366.7 L245.0 367.2 L250.0 368.1 L255.0 369.2 L260.0 370.7 L265.0 372.4 L270.0 374.3 L275.0 376.3 L280.0 378.5 L285.0 380.6 L290.0 382.7 L295.0 384.7 L300.0 386.4 L305.0 388.0 L310.0 389.5 L315.0 390.8 L320.0 392.0 L325.0 393.4 L330.0 394.9 L335.0 396.4 L340.0 397.8 L345.0 399.2 L350.0 400.4 L355.0 401.4 L360.0 402.1 L365.0 402.6 L370.0 402.8 L375.0 402.2 L380.0 401.0 L385.0 399.3 L390.0 397.2 L395.0 394.9 L400.0 392.6 L405.0 390.3 L410.0 388.4 L415.0 386.8 L420.0 386.2 L425.0 387.6 L430.0 390.5 L435.0 393.7 L440.0 397.1 L445.0 400.6 L450.0 404.3 L455.0 408.0 L460.0 411.9 L465.0 415.7 L470.0 419.4 L475.0 423.0 L480.0 426.5 L485.0 429.3 L490.0 430.9 L495.0 431.7 L500.0 431.6 L505.0 435.9 L510.0 443.8 L515.0 451.6 L520.0 455.9" fill="none" stroke="#5cbfae" stroke-width="1.25" opacity="0.55"/><path d="M735.0 387.7 L740.0 386.2 L745.0 385.3 L750.0 384.9 L755.0 385.1 L760.0 385.7 L765.0 386.6 L770.0 387.7 L775.0 388.8 L780.0 390.0 L785.0 391.0 L790.0 391.9 L795.0 392.4 L800.0 392.6 L805.0 392.3 L810.0 391.6 L815.0 390.5 L820.0 389.1 L825.0 388.1 L830.0 387.3 L835.0 387.1 L840.0 387.2 L845.0 387.7 L850.0 388.7 L855.0 389.9 L860.0 391.5 L865.0 393.3 L870.0 395.2 L875.0 397.3 L880.0 399.3 L885.0 401.3 L890.0 402.9 L895.0 403.9 L900.0 404.4 L905.0 404.3 L910.0 403.7 L915.0 402.4 L920.0 400.7 L925.0 398.4 L930.0 395.7 L935.0 392.6 L940.0 389.2 L945.0 385.7 L950.0 382.2 L955.0 378.7 L960.0 375.4 L965.0 372.3 L970.0 369.6 L975.0 367.4 L980.0 365.8 L985.0 364.7 L990.0 364.3 L995.0 364.5" fill="none" stroke="#5cbfae" stroke-width="1.25" opacity="0.55"/><path d="M0.0 420.7 L5.0 421.0 L10.0 420.9 L15.0 420.1 L20.0 418.8 L25.0 417.0 L30.0 414.6 L35.0 411.8 L40.0 408.5 L45.0 404.9 L50.0 401.0 L55.0 397.0 L60.0 392.9 L65.0 388.9 L70.0 385.0 L75.0 381.4 L80.0 378.2 L85.0 375.4 L90.0 373.1 L95.0 371.4 L100.0 370.2 L105.0 369.4 L110.0 369.0 L115.0 369.0 L120.0 369.5 L125.0 370.1 L130.0 370.8 L135.0 371.5 L140.0 372.1 L145.0 372.7 L150.0 373.2 L155.0 373.6 L160.0 373.9 L165.0 374.1 L170.0 374.1 L175.0 373.8 L180.0 373.3 L185.0 372.6 L190.0 371.8 L195.0 370.8 L200.0 369.8 L205.0 368.8 L210.0 367.9 L215.0 367.1 L220.0 366.6 L225.0 366.4 L230.0 366.6 L235.0 367.1 L240.0 368.1 L245.0 369.5 L250.0 371.3 L255.0 373.3 L260.0 375.7 L265.0 378.2 L270.0 380.8 L275.0 383.5 L280.0 386.1 L285.0 388.6 L290.0 390.8 L295.0 392.7 L300.0 394.2 L305.0 395.4 L310.0 396.3 L315.0 396.9 L320.0 397.3 L325.0 397.9 L330.0 398.6 L335.0 399.3 L340.0 400.1 L345.0 401.0 L350.0 401.8 L355.0 402.6 L360.0 403.3 L365.0 404.1 L370.0 404.6 L375.0 404.7 L380.0 404.4 L385.0 403.7 L390.0 402.8 L395.0 401.7 L400.0 400.6 L405.0 399.5 L410.0 398.6 L415.0 397.9 L420.0 398.0 L425.0 399.9 L430.0 403.1 L435.0 406.5 L440.0 410.0 L445.0 413.5 L450.0 417.0 L455.0 420.4 L460.0 423.8 L465.0 426.9 L470.0 429.9 L475.0 432.5 L480.0 435.0 L485.0 436.7 L490.0 437.4 L495.0 437.3 L500.0 436.7 L505.0 440.2 L510.0 447.1 L515.0 454.2 L520.0 458.2" fill="none" stroke="#5cbfae" stroke-width="1.25" opacity="0.73"/><path d="M735.0 398.3 L740.0 396.4 L745.0 394.8 L750.0 393.8 L755.0 393.1 L760.0 393.0 L765.0 393.0 L770.0 393.2 L775.0 393.6 L780.0 394.1 L785.0 394.5 L790.0 395.0 L795.0 395.3 L800.0 395.4 L805.0 395.2 L810.0 394.8 L815.0 394.1 L820.0 393.3 L825.0 392.9 L830.0 392.9 L835.0 393.4 L840.0 394.3 L845.0 395.6 L850.0 397.2 L855.0 399.0 L860.0 400.9 L865.0 403.0 L870.0 404.9 L875.0 406.8 L880.0 408.5 L885.0 409.9 L890.0 410.8 L895.0 411.0 L900.0 410.5 L905.0 409.3 L910.0 407.6 L915.0 405.3 L920.0 402.5 L925.0 399.2 L930.0 395.7 L935.0 392.0 L940.0 388.1 L945.0 384.3 L950.0 380.7 L955.0 377.3 L960.0 374.3 L965.0 371.7 L970.0 369.7 L975.0 368.2 L980.0 367.4 L985.0 367.2 L990.0 367.6 L995.0 368.7" fill="none" stroke="#5cbfae" stroke-width="1.25" opacity="0.73"/><path d="M520.0 458.2 L525.0 458.4 L530.0 459.6 L535.0 461.9 L540.0 465.3 L545.0 469.3 L550.0 473.5 L555.0 477.5 L560.0 480.9 L565.0 483.4 L570.0 485.4 L575.0 487.8 L580.0 490.6 L585.0 493.7 L590.0 496.8 L595.0 499.7 L600.0 502.2 L605.0 504.2 L610.0 505.6 L615.0 506.2 L620.0 505.8 L625.0 504.2 L630.0 501.2 L635.0 496.0 L640.0 489.1 L645.0 481.0 L650.0 472.4 L655.0 463.9 L660.0 456.2 L665.0 449.7 L670.0 444.4 L675.0 439.2 L680.0 434.4 L685.0 430.4 L690.0 426.9 L695.0 422.9 L700.0 418.6 L705.0 414.4 L710.0 410.7 L715.0 407.7 L720.0 405.3 L725.0 402.8 L730.0 400.5 L735.0 398.3" fill="none" stroke="#5cbfae" stroke-width="1.25" opacity="0.73"/><path d="M0.0 419.7 L5.0 419.6 L10.0 418.9 L15.0 417.7 L20.0 416.0 L25.0 413.8 L30.0 411.2 L35.0 408.3 L40.0 405.1 L45.0 401.8 L50.0 398.4 L55.0 395.1 L60.0 391.9 L65.0 389.0 L70.0 386.4 L75.0 384.2 L80.0 382.5 L85.0 381.3 L90.0 380.5 L95.0 380.3 L100.0 380.6 L105.0 381.2 L110.0 382.0 L115.0 383.1 L120.0 384.4 L125.0 385.7 L130.0 386.7 L135.0 387.6 L140.0 388.1 L145.0 388.4 L150.0 388.5 L155.0 388.2 L160.0 387.7 L165.0 387.1 L170.0 386.1 L175.0 385.0 L180.0 383.6 L185.0 382.1 L190.0 380.6 L195.0 379.1 L200.0 377.6 L205.0 376.3 L210.0 375.3 L215.0 374.5 L220.0 374.0 L225.0 374.0 L230.0 374.3 L235.0 375.1 L240.0 376.3 L245.0 377.8 L250.0 379.6 L255.0 381.5 L260.0 383.6 L265.0 385.7 L270.0 387.8 L275.0 389.7 L280.0 391.4 L285.0 392.8 L290.0 393.8 L295.0 394.4 L300.0 394.6 L305.0 394.4 L310.0 393.9 L315.0 393.2 L320.0 392.4 L325.0 391.9 L330.0 391.7 L335.0 391.7 L340.0 392.1 L345.0 392.7 L350.0 393.6 L355.0 394.8 L360.0 396.2 L365.0 397.7 L370.0 399.3 L375.0 400.7 L380.0 401.8 L385.0 402.6 L390.0 403.3 L395.0 403.7 L400.0 404.1 L405.0 404.4 L410.0 404.6 L415.0 405.0 L420.0 405.9 L425.0 408.3 L430.0 412.0 L435.0 415.8 L440.0 419.7 L445.0 423.5 L450.0 427.3 L455.0 430.9 L460.0 434.4 L465.0 437.7 L470.0 440.7 L475.0 443.5 L480.0 446.0 L485.0 447.7 L490.0 448.6 L495.0 449.0 L500.0 449.0 L505.0 452.8 L510.0 459.7 L515.0 466.8 L520.0 471.3" fill="none" stroke="#5cbfae" stroke-width="1.25" opacity="0.51"/><path d="M735.0 397.7 L740.0 395.1 L745.0 392.9 L750.0 391.2 L755.0 390.1 L760.0 389.5 L765.0 389.4 L770.0 389.6 L775.0 390.2 L780.0 391.0 L785.0 392.2 L790.0 393.5 L795.0 394.8 L800.0 396.2 L805.0 397.4 L810.0 398.5 L815.0 399.3 L820.0 400.2 L825.0 401.3 L830.0 402.9 L835.0 404.8 L840.0 407.0 L845.0 409.4 L850.0 411.9 L855.0 414.4 L860.0 416.8 L865.0 419.0 L870.0 421.0 L875.0 422.6 L880.0 423.9 L885.0 424.7 L890.0 424.8 L895.0 424.2 L900.0 422.9 L905.0 420.8 L910.0 418.2 L915.0 415.1 L920.0 411.6 L925.0 407.8 L930.0 403.8 L935.0 399.7 L940.0 395.7 L945.0 391.8 L950.0 388.1 L955.0 384.9 L960.0 382.0 L965.0 379.6 L970.0 377.7 L975.0 376.3 L980.0 375.5 L985.0 375.2 L990.0 375.4 L995.0 376.1" fill="none" stroke="#5cbfae" stroke-width="1.25" opacity="0.51"/><path d="M0.0 426.6 L5.0 425.5 L10.0 423.9 L15.0 421.7 L20.0 419.2 L25.0 416.3 L30.0 413.2 L35.0 409.9 L40.0 406.6 L45.0 403.3 L50.0 400.1 L55.0 397.1 L60.0 394.4 L65.0 392.0 L70.0 390.0 L75.0 388.5 L80.0 387.3 L85.0 386.6 L90.0 386.4 L95.0 386.5 L100.0 386.9 L105.0 387.6 L110.0 388.3 L115.0 389.1 L120.0 390.0 L125.0 390.7 L130.0 391.1 L135.0 391.2 L140.0 390.9 L145.0 390.3 L150.0 389.5 L155.0 388.4 L160.0 387.2 L165.0 385.9 L170.0 384.6 L175.0 383.1 L180.0 381.7 L185.0 380.4 L190.0 379.2 L195.0 378.2 L200.0 377.5 L205.0 377.1 L210.0 377.0 L215.0 377.3 L220.0 378.0 L225.0 379.0 L230.0 380.5 L235.0 382.2 L240.0 384.3 L245.0 386.5 L250.0 388.8 L255.0 391.1 L260.0 393.3 L265.0 395.4 L270.0 397.2 L275.0 398.8 L280.0 400.0 L285.0 400.7 L290.0 401.1 L295.0 401.0 L300.0 400.4 L305.0 399.6 L310.0 398.6 L315.0 397.4 L320.0 396.2 L325.0 395.5 L330.0 395.2 L335.0 395.4 L340.0 396.0 L345.0 397.1 L350.0 398.6 L355.0 400.5 L360.0 402.6 L365.0 405.0 L370.0 407.5 L375.0 409.6 L380.0 411.5 L385.0 413.1 L390.0 414.3 L395.0 415.1 L400.0 415.7 L405.0 415.9 L410.0 416.0 L415.0 415.8 L420.0 416.0 L425.0 417.6 L430.0 420.3 L435.0 423.2 L440.0 426.2 L445.0 429.3 L450.0 432.4 L455.0 435.5 L460.0 438.5 L465.0 441.4 L470.0 444.1 L475.0 446.7 L480.0 449.0 L485.0 450.7 L490.0 451.7 L495.0 452.5 L500.0 453.1 L505.0 457.1 L510.0 463.9 L515.0 471.0 L520.0 475.9" fill="none" stroke="#5cbfae" stroke-width="1.25" opacity="0.51"/><path d="M735.0 405.3 L740.0 401.6 L745.0 398.5 L750.0 395.9 L755.0 394.0 L760.0 392.9 L765.0 392.3 L770.0 392.3 L775.0 392.8 L780.0 393.9 L785.0 395.3 L790.0 397.1 L795.0 399.0 L800.0 400.9 L805.0 402.8 L810.0 404.5 L815.0 405.9 L820.0 407.2 L825.0 408.7 L830.0 410.5 L835.0 412.5 L840.0 414.5 L845.0 416.6 L850.0 418.6 L855.0 420.5 L860.0 422.1 L865.0 423.5 L870.0 424.5 L875.0 425.2 L880.0 425.5 L885.0 425.4 L890.0 424.7 L895.0 423.3 L900.0 421.4 L905.0 419.0 L910.0 416.2 L915.0 413.0 L920.0 409.7 L925.0 406.3 L930.0 402.8 L935.0 399.4 L940.0 396.2 L945.0 393.3 L950.0 390.6 L955.0 388.3 L960.0 386.4 L965.0 384.9 L970.0 383.8 L975.0 383.1 L980.0 382.8 L985.0 382.8 L990.0 383.2 L995.0 383.9" fill="none" stroke="#5cbfae" stroke-width="1.25" opacity="0.51"/><path d="M0.0 427.5 L5.0 425.9 L10.0 424.0 L15.0 421.8 L20.0 419.3 L25.0 416.7 L30.0 414.0 L35.0 411.4 L40.0 408.9 L45.0 406.4 L50.0 404.3 L55.0 402.3 L60.0 400.6 L65.0 399.2 L70.0 398.2 L75.0 397.4 L80.0 396.9 L85.0 396.6 L90.0 396.6 L95.0 396.8 L100.0 397.1 L105.0 397.4 L110.0 397.7 L115.0 397.9 L120.0 398.0 L125.0 398.0 L130.0 397.5 L135.0 396.7 L140.0 395.6 L145.0 394.3 L150.0 392.8 L155.0 391.2 L160.0 389.6 L165.0 388.1 L170.0 386.7 L175.0 385.4 L180.0 384.2 L185.0 383.3 L190.0 382.7 L195.0 382.4 L200.0 382.4 L205.0 382.7 L210.0 383.4 L215.0 384.3 L220.0 385.5 L225.0 387.0 L230.0 388.7 L235.0 390.5 L240.0 392.5 L245.0 394.4 L250.0 396.2 L255.0 397.9 L260.0 399.4 L265.0 400.6 L270.0 401.5 L275.0 402.1 L280.0 402.3 L285.0 402.1 L290.0 401.7 L295.0 400.9 L300.0 399.8 L305.0 398.6 L310.0 397.4 L315.0 396.2 L320.0 395.2 L325.0 394.9 L330.0 395.2 L335.0 396.0 L340.0 397.5 L345.0 399.5 L350.0 402.0 L355.0 404.8 L360.0 408.0 L365.0 411.2 L370.0 414.5 L375.0 417.4 L380.0 419.9 L385.0 421.9 L390.0 423.5 L395.0 424.5 L400.0 425.0 L405.0 425.1 L410.0 424.8 L415.0 424.1 L420.0 423.7 L425.0 424.7 L430.0 426.7 L435.0 429.2 L440.0 432.0 L445.0 435.0 L450.0 438.2 L455.0 441.6 L460.0 445.0 L465.0 448.4 L470.0 451.7 L475.0 454.9 L480.0 457.8 L485.0 460.1 L490.0 461.8 L495.0 463.3 L500.0 464.7 L505.0 469.0 L510.0 475.6 L515.0 482.4 L520.0 487.2" fill="none" stroke="#5cbfae" stroke-width="1.25" opacity="0.60"/><path d="M735.0 406.8 L740.0 402.8 L745.0 399.3 L750.0 396.7 L755.0 395.0 L760.0 394.3 L765.0 394.3 L770.0 395.0 L775.0 396.4 L780.0 398.4 L785.0 400.9 L790.0 403.7 L795.0 406.6 L800.0 409.5 L805.0 412.2 L810.0 414.6 L815.0 416.5 L820.0 418.1 L825.0 419.7 L830.0 421.5 L835.0 423.2 L840.0 424.8 L845.0 426.3 L850.0 427.6 L855.0 428.6 L860.0 429.4 L865.0 429.8 L870.0 430.0 L875.0 429.8 L880.0 429.4 L885.0 428.7 L890.0 427.6 L895.0 426.0 L900.0 423.9 L905.0 421.5 L910.0 418.9 L915.0 416.1 L920.0 413.2 L925.0 410.3 L930.0 407.5 L935.0 404.7 L940.0 402.1 L945.0 399.7 L950.0 397.5 L955.0 395.5 L960.0 393.7 L965.0 392.2 L970.0 391.0 L975.0 389.9 L980.0 389.1 L985.0 388.5 L990.0 388.1 L995.0 387.9" fill="none" stroke="#5cbfae" stroke-width="1.25" opacity="0.60"/><path d="M520.0 487.2 L525.0 489.2 L530.0 491.7 L535.0 494.6 L540.0 497.9 L545.0 501.2 L550.0 504.2 L555.0 506.5 L560.0 508.1 L565.0 508.7 L570.0 508.5 L575.0 508.4 L580.0 508.3 L585.0 508.2 L590.0 508.1 L595.0 507.9 L600.0 507.6 L605.0 507.1 L610.0 506.4 L615.0 505.5 L620.0 504.4 L625.0 502.9 L630.0 500.6 L635.0 496.7 L640.0 491.5 L645.0 485.3 L650.0 478.8 L655.0 472.3 L660.0 466.5 L665.0 461.6 L670.0 457.6 L675.0 453.9 L680.0 450.7 L685.0 448.4 L690.0 446.3 L695.0 443.3 L700.0 439.4 L705.0 434.9 L710.0 430.2 L715.0 425.6 L720.0 421.0 L725.0 416.2 L730.0 411.4 L735.0 406.8" fill="none" stroke="#5cbfae" stroke-width="1.25" opacity="0.60"/><path d="M0.0 427.7 L5.0 426.2 L10.0 424.6 L15.0 422.9 L20.0 421.1 L25.0 419.4 L30.0 417.7 L35.0 416.1 L40.0 414.6 L45.0 413.2 L50.0 412.0 L55.0 411.0 L60.0 410.1 L65.0 409.3 L70.0 408.6 L75.0 408.1 L80.0 407.6 L85.0 407.2 L90.0 406.8 L95.0 406.4 L100.0 406.0 L105.0 405.5 L110.0 404.9 L115.0 404.2 L120.0 403.5 L125.0 402.6 L130.0 401.4 L135.0 400.0 L140.0 398.4 L145.0 396.7 L150.0 395.0 L155.0 393.5 L160.0 392.0 L165.0 390.8 L170.0 389.8 L175.0 389.0 L180.0 388.6 L185.0 388.3 L190.0 388.4 L195.0 388.8 L200.0 389.4 L205.0 390.2 L210.0 391.2 L215.0 392.3 L220.0 393.5 L225.0 394.9 L230.0 396.2 L235.0 397.5 L240.0 398.8 L245.0 399.9 L250.0 400.8 L255.0 401.6 L260.0 402.1 L265.0 402.3 L270.0 402.3 L275.0 402.1 L280.0 401.7 L285.0 401.1 L290.0 400.3 L295.0 399.4 L300.0 398.5 L305.0 397.6 L310.0 396.9 L315.0 396.3 L320.0 396.1 L325.0 396.6 L330.0 397.8 L335.0 399.6 L340.0 402.1 L345.0 405.0 L350.0 408.3 L355.0 411.9 L360.0 415.6 L365.0 419.4 L370.0 422.9 L375.0 426.0 L380.0 428.6 L385.0 430.6 L390.0 431.9 L395.0 432.6 L400.0 432.8 L405.0 432.4 L410.0 431.6 L415.0 430.4 L420.0 429.5 L425.0 430.1 L430.0 431.8 L435.0 434.3 L440.0 437.3 L445.0 440.8 L450.0 444.7 L455.0 448.9 L460.0 453.2 L465.0 457.6 L470.0 461.9 L475.0 465.9 L480.0 469.6 L485.0 472.6 L490.0 474.8 L495.0 476.8 L500.0 478.7 L505.0 482.8 L510.0 488.8 L515.0 494.7 L520.0 498.6" fill="none" stroke="#5cbfae" stroke-width="1.25" opacity="0.79"/><path d="M735.0 408.1 L740.0 404.2 L745.0 401.2 L750.0 399.2 L755.0 398.2 L760.0 398.4 L765.0 399.3 L770.0 401.1 L775.0 403.6 L780.0 406.6 L785.0 410.0 L790.0 413.6 L795.0 417.2 L800.0 420.5 L805.0 423.5 L810.0 426.0 L815.0 427.8 L820.0 429.0 L825.0 430.2 L830.0 431.3 L835.0 432.2 L840.0 433.0 L845.0 433.6 L850.0 434.0 L855.0 434.2 L860.0 434.2 L865.0 433.9 L870.0 433.5 L875.0 433.0 L880.0 432.3 L885.0 431.6 L890.0 430.5 L895.0 429.1 L900.0 427.5 L905.0 425.6 L910.0 423.5 L915.0 421.3 L920.0 419.0 L925.0 416.6 L930.0 414.3 L935.0 411.9 L940.0 409.5 L945.0 407.2 L950.0 404.9 L955.0 402.6 L960.0 400.4 L965.0 398.3 L970.0 396.3 L975.0 394.4 L980.0 392.7 L985.0 391.0 L990.0 389.6 L995.0 388.4" fill="none" stroke="#5cbfae" stroke-width="1.25" opacity="0.79"/><path d="M0.0 430.9 L5.0 429.8 L10.0 428.7 L15.0 427.6 L20.0 426.5 L25.0 425.4 L30.0 424.4 L35.0 423.4 L40.0 422.4 L45.0 421.4 L50.0 420.4 L55.0 419.4 L60.0 418.4 L65.0 417.3 L70.0 416.1 L75.0 414.9 L80.0 413.6 L85.0 412.2 L90.0 410.8 L95.0 409.3 L100.0 407.9 L105.0 406.3 L110.0 404.8 L115.0 403.3 L120.0 402.0 L125.0 400.7 L130.0 399.3 L135.0 397.8 L140.0 396.4 L145.0 395.1 L150.0 394.0 L155.0 393.1 L160.0 392.5 L165.0 392.2 L170.0 392.2 L175.0 392.4 L180.0 392.9 L185.0 393.5 L190.0 394.4 L195.0 395.4 L200.0 396.5 L205.0 397.7 L210.0 398.9 L215.0 400.0 L220.0 401.1 L225.0 402.0 L230.0 402.9 L235.0 403.7 L240.0 404.3 L245.0 404.8 L250.0 405.1 L255.0 405.2 L260.0 405.2 L265.0 405.1 L270.0 404.9 L275.0 404.6 L280.0 404.3 L285.0 404.0 L290.0 403.7 L295.0 403.4 L300.0 403.3 L305.0 403.2 L310.0 403.4 L315.0 403.7 L320.0 404.3 L325.0 405.6 L330.0 407.6 L335.0 410.0 L340.0 412.9 L345.0 416.1 L350.0 419.6 L355.0 423.1 L360.0 426.5 L365.0 429.8 L370.0 432.7 L375.0 435.1 L380.0 436.9 L385.0 438.1 L390.0 438.7 L395.0 438.6 L400.0 438.0 L405.0 436.9 L410.0 435.5 L415.0 433.8 L420.0 432.4 L425.0 432.7 L430.0 434.4 L435.0 437.1 L440.0 440.6 L445.0 444.8 L450.0 449.6 L455.0 454.8 L460.0 460.1 L465.0 465.5 L470.0 470.6 L475.0 475.4 L480.0 479.5 L485.0 482.7 L490.0 485.0 L495.0 487.1 L500.0 488.8 L505.0 492.2 L510.0 496.9 L515.0 501.5 L520.0 504.3" fill="none" stroke="#5cbfae" stroke-width="1.25" opacity="0.80"/><path d="M735.0 413.1 L740.0 409.7 L745.0 407.2 L750.0 405.8 L755.0 405.5 L760.0 406.2 L765.0 407.8 L770.0 410.1 L775.0 412.9 L780.0 416.2 L785.0 419.7 L790.0 423.1 L795.0 426.4 L800.0 429.3 L805.0 431.6 L810.0 433.3 L815.0 434.1 L820.0 434.4 L825.0 434.5 L830.0 434.5 L835.0 434.4 L840.0 434.2 L845.0 433.9 L850.0 433.6 L855.0 433.2 L860.0 432.9 L865.0 432.5 L870.0 432.1 L875.0 431.8 L880.0 431.6 L885.0 431.5 L890.0 431.1 L895.0 430.6 L900.0 429.7 L905.0 428.7 L910.0 427.5 L915.0 426.1 L920.0 424.4 L925.0 422.6 L930.0 420.6 L935.0 418.5 L940.0 416.1 L945.0 413.7 L950.0 411.1 L955.0 408.4 L960.0 405.7 L965.0 402.9 L970.0 400.2 L975.0 397.6 L980.0 395.1 L985.0 392.9 L990.0 391.0 L995.0 389.4" fill="none" stroke="#5cbfae" stroke-width="1.25" opacity="0.80"/><path d="M0.0 435.3 L5.0 435.2 L10.0 435.0 L15.0 434.7 L20.0 434.4 L25.0 434.1 L30.0 433.6 L35.0 433.0 L40.0 432.2 L45.0 431.3 L50.0 430.1 L55.0 428.8 L60.0 427.2 L65.0 425.4 L70.0 423.4 L75.0 421.2 L80.0 419.0 L85.0 416.6 L90.0 414.2 L95.0 411.8 L100.0 409.6 L105.0 407.4 L110.0 405.4 L115.0 403.7 L120.0 402.4 L125.0 401.2 L130.0 400.1 L135.0 399.1 L140.0 398.4 L145.0 397.8 L150.0 397.5 L155.0 397.4 L160.0 397.6 L165.0 398.1 L170.0 398.7 L175.0 399.4 L180.0 400.3 L185.0 401.2 L190.0 402.2 L195.0 403.1 L200.0 403.9 L205.0 404.6 L210.0 405.2 L215.0 405.6 L220.0 405.8 L225.0 406.0 L230.0 406.0 L235.0 406.0 L240.0 405.9 L245.0 405.7 L250.0 405.5 L255.0 405.4 L260.0 405.2 L265.0 405.2 L270.0 405.2 L275.0 405.4 L280.0 405.7 L285.0 406.1 L290.0 406.7 L295.0 407.4 L300.0 408.2 L305.0 409.2 L310.0 410.2 L315.0 411.4 L320.0 412.7 L325.0 414.5 L330.0 416.8 L335.0 419.5 L340.0 422.3 L345.0 425.4 L350.0 428.4 L355.0 431.4 L360.0 434.2 L365.0 436.8 L370.0 439.0 L375.0 440.7 L380.0 441.9 L385.0 442.5 L390.0 442.6 L395.0 442.3 L400.0 441.5 L405.0 440.4 L410.0 439.1 L415.0 437.7 L420.0 436.7 L425.0 437.5 L430.0 439.8 L435.0 443.4 L440.0 448.0 L445.0 453.3 L450.0 459.3 L455.0 465.6 L460.0 472.0 L465.0 478.2 L470.0 483.9 L475.0 488.9 L480.0 493.0 L485.0 495.9 L490.0 497.7 L495.0 499.2 L500.0 500.2 L505.0 502.3 L510.0 505.3 L515.0 508.0 L520.0 509.3" fill="none" stroke="#5cbfae" stroke-width="1.25" opacity="0.52"/><path d="M735.0 419.6 L740.0 417.0 L745.0 415.3 L750.0 414.6 L755.0 415.0 L760.0 416.3 L765.0 418.3 L770.0 420.8 L775.0 423.7 L780.0 426.8 L785.0 429.9 L790.0 432.9 L795.0 435.5 L800.0 437.6 L805.0 439.0 L810.0 439.7 L815.0 439.6 L820.0 438.9 L825.0 438.1 L830.0 437.3 L835.0 436.6 L840.0 436.0 L845.0 435.4 L850.0 435.0 L855.0 434.7 L860.0 434.5 L865.0 434.6 L870.0 434.8 L875.0 435.1 L880.0 435.6 L885.0 436.2 L890.0 436.6 L895.0 436.7 L900.0 436.5 L905.0 435.9 L910.0 435.0 L915.0 433.7 L920.0 432.1 L925.0 430.0 L930.0 427.6 L935.0 424.9 L940.0 421.8 L945.0 418.5 L950.0 415.0 L955.0 411.4 L960.0 407.7 L965.0 404.0 L970.0 400.4 L975.0 397.1 L980.0 394.1 L985.0 391.5 L990.0 389.4 L995.0 387.8" fill="none" stroke="#5cbfae" stroke-width="1.25" opacity="0.52"/><path d="M520.0 509.3 L525.0 509.1 L530.0 508.8 L535.0 508.7 L540.0 508.6 L545.0 508.6 L550.0 508.6 L555.0 508.4 L560.0 508.0 L565.0 507.5 L570.0 506.9 L575.0 506.7 L580.0 506.8 L585.0 507.4 L590.0 508.3 L595.0 509.4 L600.0 510.7 L605.0 512.2 L610.0 513.6 L615.0 515.1 L620.0 516.3 L625.0 517.2 L630.0 517.3 L635.0 515.5 L640.0 512.0 L645.0 507.1 L650.0 501.1 L655.0 494.5 L660.0 487.8 L665.0 481.5 L670.0 475.7 L675.0 470.3 L680.0 465.8 L685.0 462.4 L690.0 459.6 L695.0 455.9 L700.0 451.4 L705.0 446.5 L710.0 441.4 L715.0 436.4 L720.0 431.6 L725.0 427.1 L730.0 423.0 L735.0 419.6" fill="none" stroke="#5cbfae" stroke-width="1.25" opacity="0.52"/><path d="M0.0 440.4 L5.0 441.1 L10.0 441.7 L15.0 442.1 L20.0 442.4 L25.0 442.3 L30.0 442.0 L35.0 441.4 L40.0 440.4 L45.0 439.1 L50.0 437.5 L55.0 435.5 L60.0 433.2 L65.0 430.6 L70.0 427.9 L75.0 425.0 L80.0 422.1 L85.0 419.2 L90.0 416.4 L95.0 413.8 L100.0 411.5 L105.0 409.4 L110.0 407.8 L115.0 406.6 L120.0 405.9 L125.0 405.5 L130.0 405.3 L135.0 405.2 L140.0 405.4 L145.0 405.7 L150.0 406.1 L155.0 406.7 L160.0 407.4 L165.0 408.2 L170.0 409.0 L175.0 409.7 L180.0 410.3 L185.0 410.8 L190.0 411.1 L195.0 411.2 L200.0 411.1 L205.0 410.9 L210.0 410.4 L215.0 409.8 L220.0 409.1 L225.0 408.4 L230.0 407.6 L235.0 406.9 L240.0 406.3 L245.0 405.8 L250.0 405.5 L255.0 405.4 L260.0 405.6 L265.0 405.9 L270.0 406.5 L275.0 407.4 L280.0 408.5 L285.0 409.7 L290.0 411.1 L295.0 412.6 L300.0 414.1 L305.0 415.6 L310.0 417.1 L315.0 418.4 L320.0 419.8 L325.0 421.5 L330.0 423.5 L335.0 425.7 L340.0 428.0 L345.0 430.3 L350.0 432.6 L355.0 434.8 L360.0 436.9 L365.0 438.8 L370.0 440.4 L375.0 441.7 L380.0 442.6 L385.0 443.2 L390.0 443.6 L395.0 443.6 L400.0 443.5 L405.0 443.2 L410.0 442.7 L415.0 442.2 L420.0 442.3 L425.0 444.1 L430.0 447.6 L435.0 452.4 L440.0 458.2 L445.0 464.8 L450.0 471.9 L455.0 479.2 L460.0 486.3 L465.0 493.0 L470.0 498.9 L475.0 503.8 L480.0 507.4 L485.0 509.6 L490.0 510.5 L495.0 511.0 L500.0 511.1 L505.0 511.8 L510.0 513.0 L515.0 514.0 L520.0 514.1" fill="none" stroke="#5cbfae" stroke-width="1.25" opacity="0.51"/><path d="M735.0 426.5 L740.0 424.6 L745.0 423.5 L750.0 423.3 L755.0 423.9 L760.0 425.4 L765.0 427.3 L770.0 429.6 L775.0 432.1 L780.0 434.7 L785.0 437.2 L790.0 439.5 L795.0 441.4 L800.0 442.7 L805.0 443.5 L810.0 443.6 L815.0 442.9 L820.0 441.8 L825.0 440.8 L830.0 440.0 L835.0 439.4 L840.0 439.1 L845.0 439.0 L850.0 439.2 L855.0 439.6 L860.0 440.3 L865.0 441.2 L870.0 442.2 L875.0 443.4 L880.0 444.7 L885.0 445.9 L890.0 446.8 L895.0 447.2 L900.0 447.1 L905.0 446.5 L910.0 445.2 L915.0 443.4 L920.0 441.1 L925.0 438.2 L930.0 434.8 L935.0 431.0 L940.0 426.8 L945.0 422.3 L950.0 417.7 L955.0 413.0 L960.0 408.4 L965.0 404.0 L970.0 399.8 L975.0 396.1 L980.0 392.9 L985.0 390.3 L990.0 388.4 L995.0 387.3" fill="none" stroke="#5cbfae" stroke-width="1.25" opacity="0.51"/><path d="M0.0 449.7 L5.0 450.8 L10.0 451.5 L15.0 451.9 L20.0 451.9 L25.0 451.5 L30.0 450.6 L35.0 449.2 L40.0 447.4 L45.0 445.2 L50.0 442.6 L55.0 439.7 L60.0 436.6 L65.0 433.2 L70.0 429.8 L75.0 426.4 L80.0 423.1 L85.0 420.0 L90.0 417.2 L95.0 414.8 L100.0 412.8 L105.0 411.3 L110.0 410.3 L115.0 409.9 L120.0 410.0 L125.0 410.4 L130.0 411.0 L135.0 411.7 L140.0 412.5 L145.0 413.3 L150.0 414.1 L155.0 414.8 L160.0 415.4 L165.0 415.9 L170.0 416.3 L175.0 416.4 L180.0 416.3 L185.0 416.0 L190.0 415.4 L195.0 414.7 L200.0 413.8 L205.0 412.7 L210.0 411.5 L215.0 410.4 L220.0 409.2 L225.0 408.2 L230.0 407.4 L235.0 406.8 L240.0 406.5 L245.0 406.6 L250.0 406.9 L255.0 407.6 L260.0 408.6 L265.0 409.9 L270.0 411.5 L275.0 413.3 L280.0 415.3 L285.0 417.3 L290.0 419.4 L295.0 421.4 L300.0 423.2 L305.0 424.9 L310.0 426.3 L315.0 427.4 L320.0 428.3 L325.0 429.4 L330.0 430.6 L335.0 432.0 L340.0 433.4 L345.0 434.9 L350.0 436.4 L355.0 437.9 L360.0 439.4 L365.0 440.9 L370.0 442.3 L375.0 443.5 L380.0 444.7 L385.0 445.8 L390.0 446.8 L395.0 447.7 L400.0 448.5 L405.0 449.2 L410.0 449.8 L415.0 450.3 L420.0 451.3 L425.0 453.9 L430.0 458.2 L435.0 463.7 L440.0 470.1 L445.0 477.3 L450.0 484.7 L455.0 492.2 L460.0 499.3 L465.0 505.6 L470.0 511.0 L475.0 515.1 L480.0 517.7 L485.0 518.7 L490.0 518.5 L495.0 517.9 L500.0 517.1 L505.0 516.5 L510.0 516.2 L515.0 515.8 L520.0 515.1" fill="none" stroke="#5cbfae" stroke-width="1.25" opacity="0.62"/><path d="M735.0 437.4 L740.0 435.6 L745.0 434.4 L750.0 433.9 L755.0 434.1 L760.0 434.9 L765.0 436.1 L770.0 437.5 L775.0 439.2 L780.0 440.8 L785.0 442.4 L790.0 443.9 L795.0 445.0 L800.0 445.7 L805.0 445.9 L810.0 445.6 L815.0 444.7 L820.0 443.6 L825.0 442.8 L830.0 442.4 L835.0 442.3 L840.0 442.6 L845.0 443.2 L850.0 444.1 L855.0 445.3 L860.0 446.8 L865.0 448.3 L870.0 450.0 L875.0 451.6 L880.0 453.1 L885.0 454.5 L890.0 455.3 L895.0 455.4 L900.0 454.8 L905.0 453.5 L910.0 451.4 L915.0 448.7 L920.0 445.4 L925.0 441.5 L930.0 437.1 L935.0 432.3 L940.0 427.2 L945.0 422.0 L950.0 416.8 L955.0 411.8 L960.0 407.0 L965.0 402.5 L970.0 398.6 L975.0 395.3 L980.0 392.7 L985.0 390.8 L990.0 389.8 L995.0 389.6" fill="none" stroke="#5cbfae" stroke-width="1.25" opacity="0.62"/><path d="M0.0 458.2 L5.0 459.1 L10.0 459.4 L15.0 459.3 L20.0 458.7 L25.0 457.5 L30.0 455.8 L35.0 453.6 L40.0 451.0 L45.0 448.1 L50.0 444.9 L55.0 441.5 L60.0 438.0 L65.0 434.5 L70.0 431.1 L75.0 427.9 L80.0 424.9 L85.0 422.4 L90.0 420.2 L95.0 418.5 L100.0 417.3 L105.0 416.7 L110.0 416.6 L115.0 416.9 L120.0 417.8 L125.0 418.9 L130.0 420.0 L135.0 421.0 L140.0 421.9 L145.0 422.7 L150.0 423.2 L155.0 423.5 L160.0 423.5 L165.0 423.3 L170.0 422.7 L175.0 421.9 L180.0 420.9 L185.0 419.6 L190.0 418.2 L195.0 416.7 L200.0 415.1 L205.0 413.5 L210.0 412.1 L215.0 410.8 L220.0 409.7 L225.0 408.9 L230.0 408.5 L235.0 408.5 L240.0 408.9 L245.0 409.7 L250.0 410.9 L255.0 412.5 L260.0 414.3 L265.0 416.4 L270.0 418.6 L275.0 420.9 L280.0 423.2 L285.0 425.4 L290.0 427.5 L295.0 429.3 L300.0 430.8 L305.0 432.0 L310.0 432.7 L315.0 433.0 L320.0 433.0 L325.0 433.2 L330.0 433.6 L335.0 434.2 L340.0 434.9 L345.0 435.8 L350.0 436.9 L355.0 438.2 L360.0 439.6 L365.0 441.3 L370.0 443.1 L375.0 445.0 L380.0 447.1 L385.0 449.2 L390.0 451.3 L395.0 453.4 L400.0 455.5 L405.0 457.3 L410.0 459.0 L415.0 460.4 L420.0 462.1 L425.0 465.3 L430.0 469.9 L435.0 475.7 L440.0 482.3 L445.0 489.5 L450.0 496.9 L455.0 504.1 L460.0 510.8 L465.0 516.6 L470.0 521.2 L475.0 524.5 L480.0 526.2 L485.0 526.2 L490.0 525.1 L495.0 523.9 L500.0 522.6 L505.0 521.3 L510.0 520.1 L515.0 519.1 L520.0 518.2" fill="none" stroke="#5cbfae" stroke-width="1.25" opacity="0.55"/><path d="M735.0 446.9 L740.0 444.6 L745.0 442.8 L750.0 441.6 L755.0 441.0 L760.0 441.0 L765.0 441.3 L770.0 442.0 L775.0 442.8 L780.0 443.8 L785.0 444.9 L790.0 446.0 L795.0 446.9 L800.0 447.7 L805.0 448.1 L810.0 448.1 L815.0 447.8 L820.0 447.3 L825.0 447.3 L830.0 447.7 L835.0 448.5 L840.0 449.6 L845.0 451.1 L850.0 452.8 L855.0 454.6 L860.0 456.5 L865.0 458.4 L870.0 460.1 L875.0 461.6 L880.0 462.9 L885.0 463.7 L890.0 463.9 L895.0 463.2 L900.0 461.7 L905.0 459.3 L910.0 456.3 L915.0 452.5 L920.0 448.2 L925.0 443.4 L930.0 438.2 L935.0 432.7 L940.0 427.2 L945.0 421.8 L950.0 416.5 L955.0 411.5 L960.0 407.0 L965.0 403.0 L970.0 399.7 L975.0 397.1 L980.0 395.2 L985.0 394.2 L990.0 393.9 L995.0 394.5" fill="none" stroke="#5cbfae" stroke-width="1.25" opacity="0.55"/><path d="M520.0 518.2 L525.0 517.5 L530.0 517.1 L535.0 517.0 L540.0 517.1 L545.0 517.6 L550.0 518.2 L555.0 519.1 L560.0 520.2 L565.0 521.4 L570.0 522.6 L575.0 523.9 L580.0 525.2 L585.0 526.3 L590.0 527.3 L595.0 528.1 L600.0 528.7 L605.0 529.0 L610.0 529.0 L615.0 528.7 L620.0 528.2 L625.0 527.5 L630.0 525.9 L635.0 522.6 L640.0 517.7 L645.0 511.5 L650.0 504.3 L655.0 496.7 L660.0 489.1 L665.0 482.0 L670.0 475.9 L675.0 471.2 L680.0 468.2 L685.0 467.1 L690.0 467.1 L695.0 466.5 L700.0 465.3 L705.0 463.4 L710.0 461.1 L715.0 458.4 L720.0 455.5 L725.0 452.5 L730.0 449.6 L735.0 446.9" fill="none" stroke="#5cbfae" stroke-width="1.25" opacity="0.55"/><path d="M2.0 253.0 L5.0 261.2 L7.9 269.3 L10.6 277.3 L12.9 285.2 L14.8 293.2 L16.2 301.3 L17.2 309.5 L17.6 317.9 L17.6 326.3 L17.2 334.9 L16.5 343.5 L15.6 352.2 L14.7 360.8 L13.8 369.5 L13.1 378.0 L12.6 386.6 L12.5 395.0 L12.9 403.4 L13.8 411.7 L15.2 419.9 L17.0 428.0 L19.3 435.9 L21.9 443.8 L24.8 451.6" fill="none" stroke="#5cbfae" stroke-width="1" opacity=".35"/><path d="M24.7 247.6 L26.6 255.3 L28.1 263.2 L29.0 271.3 L29.4 279.6 L29.4 288.1 L29.0 296.8 L28.3 305.7 L27.5 314.5 L26.5 323.4 L25.6 332.3 L24.9 341.0 L24.4 349.7 L24.4 358.2 L24.8 366.6 L25.6 374.8 L27.0 382.8 L28.8 390.7 L31.1 398.4 L33.7 406.0 L36.6 413.5 L39.6 420.8 L42.6 428.2 L45.6 435.6 L48.3 443.1" fill="none" stroke="#5cbfae" stroke-width="1" opacity=".35"/><path d="M41.3 239.3 L41.3 247.9 L40.9 256.8 L40.2 265.7 L39.3 274.8 L38.3 283.9 L37.4 292.9 L36.7 301.9 L36.3 310.7 L36.2 319.3 L36.6 327.7 L37.5 335.9 L38.8 343.8 L40.7 351.6 L42.9 359.1 L45.6 366.5 L48.4 373.8 L51.4 381.0 L54.5 388.3 L57.4 395.6 L60.1 403.1 L62.5 410.7 L64.4 418.6 L65.9 426.6 L66.9 434.9" fill="none" stroke="#5cbfae" stroke-width="1" opacity=".35"/><path d="M51.1 233.7 L50.2 242.9 L49.3 252.1 L48.6 261.2 L48.1 270.1 L48.0 278.8 L48.4 287.2 L49.3 295.4 L50.7 303.4 L52.5 311.1 L54.8 318.6 L57.4 326.0 L60.3 333.3 L63.3 340.6 L66.3 347.9 L69.2 355.3 L71.9 362.9 L74.3 370.7 L76.3 378.6 L77.7 386.8 L78.7 395.1 L79.3 403.6 L79.3 412.3 L79.0 421.2 L78.3 430.2" fill="none" stroke="#5cbfae" stroke-width="1" opacity=".35"/><path d="M59.9 228.8 L59.9 237.6 L60.3 246.1 L61.1 254.4 L62.5 262.4 L64.3 270.2 L66.6 277.9 L69.2 285.4 L72.1 293.0 L75.1 300.5 L78.1 308.1 L81.1 315.9 L83.8 323.7 L86.1 331.8 L88.1 339.9 L89.6 348.2 L90.6 356.6 L91.1 365.1 L91.1 373.8 L90.8 382.5 L90.1 391.3 L89.3 400.2 L88.3 409.2 L87.4 418.2 L86.6 427.1" fill="none" stroke="#5cbfae" stroke-width="1" opacity=".35"/><path d="M74.3 222.2 L76.2 230.3 L78.4 238.3 L81.1 246.2 L83.9 254.1 L86.9 262.1 L90.0 270.3 L92.9 278.5 L95.6 286.8 L98.0 295.1 L99.9 303.4 L101.4 311.8 L102.4 320.1 L102.9 328.6 L103.0 337.2 L102.6 345.8 L102.0 354.4 L101.1 363.1 L100.1 371.9 L99.2 380.6 L98.5 389.3 L98.0 398.0 L97.9 406.6 L98.2 415.1 L99.0 423.5" fill="none" stroke="#5cbfae" stroke-width="1" opacity=".35"/><path d="M95.8 218.0 L98.8 226.5 L101.8 234.7 L104.7 242.8 L107.4 250.8 L109.8 258.7 L111.8 266.8 L113.2 275.0 L114.2 283.3 L114.8 291.8 L114.8 300.4 L114.5 309.1 L113.8 317.9 L112.9 326.7 L112.0 335.5 L111.1 344.2 L110.3 352.9 L109.8 361.6 L109.7 370.2 L110.0 378.7 L110.8 387.2 L112.1 395.6 L113.9 404.0 L116.1 412.4 L118.7 421.0" fill="none" stroke="#5cbfae" stroke-width="1" opacity=".35"/><path d="M119.3 212.3 L121.6 219.9 L123.6 227.8 L125.1 235.9 L126.1 244.3 L126.6 253.0 L126.6 261.8 L126.3 270.7 L125.6 279.8 L124.8 288.9 L123.8 298.0 L122.9 307.0 L122.1 316.0 L121.7 324.8 L121.5 333.6 L121.9 342.3 L122.7 350.9 L124.0 359.5 L125.7 368.0 L128.0 376.5 L130.5 385.1 L133.4 393.7 L136.4 402.4 L139.4 411.1 L142.4 420.0" fill="none" stroke="#5cbfae" stroke-width="1" opacity=".35"/><path d="M137.9 203.0 L138.4 211.8 L138.5 220.8 L138.1 230.1 L137.5 239.4 L136.6 248.8 L135.6 258.2 L134.7 267.6 L134.0 276.8 L133.5 286.0 L133.4 295.0 L133.7 303.9 L134.5 312.6 L135.8 321.3 L137.6 329.9 L139.8 338.4 L142.4 346.9 L145.2 355.5 L148.2 364.2 L151.3 372.9 L154.2 381.7 L156.9 390.6 L159.3 399.6 L161.4 408.6 L162.9 417.7" fill="none" stroke="#5cbfae" stroke-width="1" opacity=".35"/><path d="M149.3 198.1 L148.4 207.6 L147.5 217.1 L146.6 226.7 L145.8 236.1 L145.3 245.5 L145.2 254.7 L145.5 263.7 L146.3 272.7 L147.6 281.5 L149.4 290.2 L151.6 298.9 L154.2 307.7 L157.1 316.4 L160.1 325.3 L163.1 334.2 L166.0 343.2 L168.8 352.2 L171.2 361.2 L173.2 370.2 L174.8 379.2 L175.8 388.3 L176.4 397.5 L176.5 406.7 L176.2 415.9" fill="none" stroke="#5cbfae" stroke-width="1" opacity=".35"/><path d="M157.6 195.8 L157.2 205.2 L157.0 214.5 L157.4 223.7 L158.2 232.8 L159.5 241.9 L161.2 250.9 L163.5 260.0 L166.0 269.1 L168.9 278.2 L171.9 287.2 L174.9 296.3 L177.9 305.2 L180.6 314.2 L183.0 323.2 L185.0 332.2 L186.6 341.2 L187.7 350.3 L188.2 359.4 L188.3 368.6 L188.0 377.8 L187.4 387.1 L186.6 396.3 L185.6 405.6 L184.7 414.9" fill="none" stroke="#5cbfae" stroke-width="1" opacity=".35"/><path d="M170.0 195.0 L171.3 204.2 L173.1 213.4 L175.3 222.5 L177.9 231.6 L180.7 240.6 L183.7 249.6 L186.8 258.6 L189.7 267.5 L192.4 276.5 L194.8 285.5 L196.9 294.5 L198.4 303.6 L199.5 312.7 L200.1 321.8 L200.2 331.0 L199.9 340.2 L199.2 349.4 L198.4 358.6 L197.5 367.9 L196.5 377.1 L195.7 386.3 L195.2 395.5 L195.1 404.7 L195.3 413.9" fill="none" stroke="#5cbfae" stroke-width="1" opacity=".35"/><path d="M189.7 194.1 L192.6 203.1 L195.6 212.1 L198.6 221.1 L201.5 230.1 L204.3 239.1 L206.7 248.2 L208.7 257.3 L210.3 266.4 L211.3 275.5 L211.9 284.7 L212.0 293.9 L211.7 303.0 L211.1 312.2 L210.2 321.4 L209.3 330.6 L208.4 339.8 L207.6 349.0 L207.1 358.2 L206.9 367.3 L207.1 376.5 L207.9 385.6 L209.1 394.8 L210.8 403.9 L213.0 413.0" fill="none" stroke="#5cbfae" stroke-width="1" opacity=".35"/><path d="M213.4 193.0 L216.1 202.2 L218.5 211.4 L220.5 220.6 L222.1 229.9 L223.2 239.1 L223.7 248.3 L223.8 257.5 L223.5 266.6 L222.9 275.7 L222.1 284.9 L221.1 294.0 L220.2 303.1 L219.4 312.2 L218.9 321.4 L218.7 330.5 L219.0 339.7 L219.7 348.9 L220.9 358.1 L222.7 367.3 L224.8 376.6 L227.4 386.0 L230.2 395.4 L233.2 404.9 L236.2 414.4" fill="none" stroke="#5cbfae" stroke-width="1" opacity=".35"/><path d="M233.9 194.9 L235.0 204.3 L235.6 213.6 L235.7 222.7 L235.4 231.8 L234.7 240.8 L233.9 249.7 L233.0 258.7 L232.0 267.7 L231.2 276.7 L230.7 285.7 L230.6 294.9 L230.8 304.0 L231.5 313.3 L232.8 322.6 L234.5 332.0 L236.7 341.5 L239.2 351.0 L242.0 360.6 L245.0 370.3 L248.0 380.0 L251.0 389.7 L253.8 399.3 L256.2 408.9 L258.3 418.3" fill="none" stroke="#5cbfae" stroke-width="1" opacity=".35"/><path d="M247.2 198.5 L246.6 207.3 L245.7 216.2 L244.8 225.0 L243.9 233.8 L243.1 242.7 L242.6 251.6 L242.4 260.7 L242.6 269.8 L243.4 279.1 L244.6 288.5 L246.3 298.0 L248.5 307.6 L251.0 317.3 L253.8 327.1 L256.8 336.9 L259.9 346.6 L262.8 356.4 L265.6 366.1 L268.1 375.6 L270.1 385.1 L271.8 394.4 L272.9 403.6 L273.5 412.7 L273.7 421.7" fill="none" stroke="#5cbfae" stroke-width="1" opacity=".35"/><path d="M255.7 201.2 L254.9 210.0 L254.4 218.8 L254.2 227.8 L254.5 236.9 L255.2 246.2 L256.4 255.6 L258.2 265.1 L260.3 274.8 L262.9 284.5 L265.7 294.3 L268.7 304.1 L271.7 313.8 L274.7 323.5 L277.4 333.1 L279.9 342.6 L282.0 351.9 L283.6 361.2 L284.7 370.3 L285.4 379.4 L285.5 388.3 L285.3 397.2 L284.7 406.0 L283.9 414.8 L282.9 423.5" fill="none" stroke="#5cbfae" stroke-width="1" opacity=".35"/><path d="M266.3 204.8 L267.0 214.0 L268.3 223.3 L270.0 232.8 L272.2 242.3 L274.7 252.0 L277.5 261.6 L280.5 271.2 L283.5 280.8 L286.5 290.2 L289.3 299.6 L291.7 308.9 L293.8 318.1 L295.4 327.2 L296.6 336.2 L297.2 345.2 L297.4 354.2 L297.1 363.1 L296.5 372.0 L295.7 380.9 L294.8 389.7 L293.8 398.5 L293.0 407.4 L292.5 416.2 L292.2 425.1" fill="none" stroke="#5cbfae" stroke-width="1" opacity=".35"/><path d="M284.0 209.4 L286.5 218.8 L289.3 228.2 L292.3 237.4 L295.4 246.7 L298.3 255.8 L301.1 264.8 L303.6 274.0 L305.6 283.2 L307.3 292.5 L308.4 301.6 L309.0 310.7 L309.2 319.6 L308.9 328.5 L308.4 337.4 L307.5 346.2 L306.6 355.0 L305.7 363.9 L304.9 372.8 L304.3 381.7 L304.1 390.6 L304.3 399.6 L304.9 408.7 L306.1 417.7 L307.8 426.8" fill="none" stroke="#5cbfae" stroke-width="1" opacity=".35"/><path d="M307.2 211.9 L310.2 221.6 L312.9 231.5 L315.4 241.4 L317.5 251.1 L319.1 260.6 L320.2 269.9 L320.9 278.9 L321.0 287.7 L320.8 296.3 L320.2 304.8 L319.4 313.3 L318.4 321.7 L317.5 330.3 L316.7 338.9 L316.1 347.6 L315.9 356.4 L316.1 365.2 L316.8 374.1 L317.9 383.1 L319.6 392.1 L321.7 401.2 L324.2 410.3 L327.0 419.5 L329.9 428.7" fill="none" stroke="#5cbfae" stroke-width="1" opacity=".35"/><path d="M329.3 223.4 L330.9 233.0 L332.1 242.3 L332.7 251.2 L332.9 259.8 L332.6 268.2 L332.0 276.3 L331.2 284.3 L330.3 292.3 L329.3 300.3 L328.5 308.5 L328.0 316.8 L327.7 325.2 L327.9 333.9 L328.6 342.8 L329.8 351.8 L331.4 361.0 L333.5 370.4 L336.0 379.9 L338.8 389.5 L341.8 399.2 L344.8 408.9 L347.8 418.6 L350.6 428.3 L353.1 437.9" fill="none" stroke="#5cbfae" stroke-width="1" opacity=".35"/><path d="M344.7 233.9 L344.4 242.1 L343.9 250.1 L343.0 257.9 L342.1 265.7 L341.2 273.5 L340.4 281.4 L339.8 289.4 L339.6 297.6 L339.8 306.1 L340.4 314.9 L341.6 323.9 L343.3 333.1 L345.4 342.6 L347.9 352.1 L350.6 361.8 L353.6 371.6 L356.6 381.4 L359.6 391.1 L362.4 400.9 L364.9 410.5 L367.1 420.0 L368.8 429.4 L369.9 438.6 L370.7 447.6" fill="none" stroke="#5cbfae" stroke-width="1" opacity=".35"/><path d="M353.9 238.6 L353.0 246.5 L352.2 254.5 L351.6 262.6 L351.4 270.8 L351.6 279.2 L352.3 287.8 L353.4 296.6 L355.1 305.7 L357.2 314.8 L359.7 324.1 L362.5 333.5 L365.4 342.8 L368.5 352.1 L371.5 361.0 L374.3 369.9 L376.8 378.7 L378.9 387.7 L380.6 396.9 L381.8 406.3 L382.5 415.9 L382.7 425.4 L382.5 434.9 L382.0 444.2 L381.2 453.3" fill="none" stroke="#5cbfae" stroke-width="1" opacity=".35"/><path d="M363.2 240.9 L363.4 249.3 L364.1 257.9 L365.3 266.4 L366.9 275.0 L369.0 283.4 L371.5 291.4 L374.3 299.0 L377.3 306.1 L380.3 313.1 L383.3 320.1 L386.1 327.4 L388.6 335.2 L390.7 343.7 L392.4 352.8 L393.6 362.6 L394.3 372.9 L394.5 383.6 L394.3 394.4 L393.8 405.3 L393.0 416.1 L392.1 426.6 L391.1 437.0 L390.3 447.1 L389.7 457.2" fill="none" stroke="#5cbfae" stroke-width="1" opacity=".35"/><path d="M378.8 231.5 L380.9 237.7 L383.4 243.2 L386.1 248.3 L389.1 253.3 L392.1 258.4 L395.1 264.1 L397.9 270.6 L400.4 278.2 L402.6 286.9 L404.3 296.6 L405.4 307.2 L406.2 318.4 L406.4 330.2 L406.2 342.4 L405.6 354.7 L404.8 367.1 L403.9 379.3 L403.0 391.5 L402.1 403.4 L401.5 415.1 L401.3 426.6 L401.4 438.1 L402.0 449.7 L403.1 461.5" fill="none" stroke="#5cbfae" stroke-width="1" opacity=".35"/><path d="M400.9 185.7 L404.0 190.9 L407.0 197.2 L409.8 204.8 L412.3 213.7 L414.4 223.8 L416.1 234.8 L417.3 246.6 L418.0 258.9 L418.2 271.6 L418.0 284.4 L417.5 297.5 L416.7 310.6 L415.7 323.8 L414.8 336.9 L414.0 349.9 L413.4 362.7 L413.1 375.4 L413.2 387.8 L413.8 400.2 L414.9 412.5 L416.5 424.9 L418.6 437.6 L421.0 450.9 L423.8 464.8" fill="none" stroke="#5cbfae" stroke-width="1" opacity=".35"/><path d="M424.1 153.2 L426.2 166.0 L427.9 178.9 L429.1 191.7 L429.8 204.7 L430.0 217.8 L429.8 231.0 L429.3 244.3 L428.5 257.5 L427.6 270.6 L426.6 283.5 L425.8 296.4 L425.2 309.3 L424.9 322.2 L425.1 335.3 L425.7 348.5 L426.8 361.9 L428.4 375.6 L430.4 389.7 L432.8 404.1 L435.6 419.2 L438.6 435.1 L441.6 452.0 L444.6 469.7 L447.4 488.2" fill="none" stroke="#5cbfae" stroke-width="1" opacity=".35"/><path d="M441.7 135.7 L441.9 149.7 L441.7 164.4 L441.1 179.7 L440.3 195.1 L439.4 210.4 L438.5 225.5 L437.6 240.2 L437.0 254.5 L436.8 268.4 L436.9 282.1 L437.5 295.7 L438.6 309.3 L440.2 323.0 L442.2 336.9 L444.7 351.4 L447.4 366.6 L450.4 382.7 L453.4 399.7 L456.4 417.7 L459.2 436.4 L461.8 455.5 L464.0 474.8 L465.7 493.9 L467.0 512.7" fill="none" stroke="#5cbfae" stroke-width="1" opacity=".35"/><path d="M452.2 112.9 L451.2 130.7 L450.3 148.3 L449.5 165.4 L448.9 181.9 L448.6 197.7 L448.7 212.9 L449.3 227.5 L450.4 241.9 L452.0 256.1 L454.1 270.6 L456.5 285.7 L459.3 301.5 L462.2 318.3 L465.3 336.2 L468.2 354.8 L471.1 374.0 L473.6 393.5 L475.8 412.8 L477.6 431.9 L478.8 450.5 L479.6 468.7 L479.9 486.5 L479.7 504.1 L479.2 521.6" fill="none" stroke="#5cbfae" stroke-width="1" opacity=".35"/><path d="M460.7 96.9 L460.4 114.3 L460.6 131.2 L461.2 147.5 L462.3 163.6 L463.9 179.7 L465.9 196.2 L468.3 213.4 L471.1 231.5 L474.1 250.8 L477.1 271.2 L480.1 292.1 L482.9 312.8 L485.5 332.7 L487.7 351.8 L489.4 370.1 L490.7 387.7 L491.4 405.0 L491.7 421.9 L491.6 438.7 L491.1 455.5 L490.3 472.2 L489.4 489.0 L488.4 505.9 L487.6 523.0" fill="none" stroke="#5cbfae" stroke-width="1" opacity=".35"/><rect x="113.59999999999991" y="0" width="145.8" height="145.3" fill="#931a26"/><path d="M166 108.10000000000002 H139.29999999999995 V34.80000000000001 H234.20000000000005 V108.10000000000002 H188.5" fill="none" stroke="#fff" stroke-width="9.6" stroke-linecap="round" stroke-linejoin="round"/><line x1="188.5" y1="73" x2="188.5" y2="108.10000000000002" stroke="#fff" stroke-width="9.6" stroke-linecap="round"/><circle cx="188" cy="72" r="16.8" fill="#fff"/><circle cx="254.4" cy="359.9" r="3" fill="#fff" opacity=".92"/><circle cx="165.4" cy="340.6" r="1.5" fill="#fff" opacity=".92"/><circle cx="258.3" cy="371.1" r="1.2" fill="#fff" opacity=".92"/><circle cx="216.8" cy="368.8" r="2.5" fill="#fff" opacity=".92"/><circle cx="242.6" cy="348.2" r="1.2" fill="#fff" opacity=".92"/><circle cx="270.7" cy="336.6" r="1.5" fill="#fff" opacity=".92"/><circle cx="298.5" cy="361.6" r="1.5" fill="#fff" opacity=".92"/><circle cx="275.3" cy="313.0" r="3" fill="#fff" opacity=".92"/><circle cx="253.6" cy="316.9" r="1.2" fill="#fff" opacity=".92"/><circle cx="306.9" cy="308.4" r="1.5" fill="#fff" opacity=".92"/><circle cx="305.0" cy="319.6" r="1.5" fill="#fff" opacity=".92"/><circle cx="204.4" cy="375.3" r="3" fill="#fff" opacity=".92"/><circle cx="292.4" cy="351.8" r="1.5" fill="#fff" opacity=".92"/><circle cx="302.1" cy="356.3" r="2.5" fill="#fff" opacity=".92"/><circle cx="205.8" cy="333.3" r="1.5" fill="#fff" opacity=".92"/><circle cx="301.4" cy="326.5" r="2" fill="#fff" opacity=".92"/><circle cx="206.2" cy="350.2" r="1.2" fill="#fff" opacity=".92"/><circle cx="250.4" cy="357.5" r="1.2" fill="#fff" opacity=".92"/><circle cx="207.5" cy="365.3" r="2.5" fill="#fff" opacity=".92"/><circle cx="265.5" cy="320.9" r="2.5" fill="#fff" opacity=".92"/><circle cx="266.7" cy="312.0" r="1.2" fill="#fff" opacity=".92"/><circle cx="303.4" cy="333.0" r="2.5" fill="#fff" opacity=".92"/><circle cx="163.7" cy="363.1" r="2" fill="#fff" opacity=".92"/><circle cx="217.5" cy="366.9" r="2.5" fill="#fff" opacity=".92"/><circle cx="168.0" cy="320.7" r="1.5" fill="#fff" opacity=".92"/><circle cx="178.9" cy="325.2" r="2.5" fill="#fff" opacity=".92"/><circle cx="212.7" cy="332.8" r="3" fill="#fff" opacity=".92"/><circle cx="198.6" cy="340.4" r="3" fill="#fff" opacity=".92"/><circle cx="273.3" cy="363.8" r="2" fill="#fff" opacity=".92"/><circle cx="166.5" cy="374.2" r="1.2" fill="#fff" opacity=".92"/><circle cx="192.3" cy="343.9" r="2" fill="#fff" opacity=".92"/><circle cx="298.7" cy="331.8" r="3" fill="#fff" opacity=".92"/><circle cx="174.8" cy="356.0" r="2" fill="#fff" opacity=".92"/><circle cx="187.6" cy="313.5" r="1.5" fill="#fff" opacity=".92"/><circle cx="143.7" cy="417.7" r="2.5" fill="#fff" opacity=".92"/><circle cx="98.9" cy="396.9" r="3" fill="#fff" opacity=".92"/><circle cx="128.7" cy="425.5" r="1.5" fill="#fff" opacity=".92"/><circle cx="145.2" cy="420.5" r="2" fill="#fff" opacity=".92"/><circle cx="122.5" cy="426.7" r="1.2" fill="#fff" opacity=".92"/><circle cx="164.3" cy="444.1" r="2.5" fill="#fff" opacity=".92"/><circle cx="112.7" cy="409.6" r="3" fill="#fff" opacity=".92"/><circle cx="162.0" cy="443.4" r="2.5" fill="#fff" opacity=".92"/><circle cx="94.5" cy="427.8" r="1.5" fill="#fff" opacity=".92"/><circle cx="90.7" cy="426.7" r="1.5" fill="#fff" opacity=".92"/><circle cx="122.3" cy="472.9" r="1.5" fill="#fff" opacity=".92"/><circle cx="164.1" cy="429.3" r="2.5" fill="#fff" opacity=".92"/><circle cx="141.1" cy="418.4" r="2" fill="#fff" opacity=".92"/><circle cx="109.3" cy="425.3" r="1.5" fill="#fff" opacity=".92"/><circle cx="95.0" cy="458.8" r="3" fill="#fff" opacity=".92"/><circle cx="162.8" cy="443.2" r="2.5" fill="#fff" opacity=".92"/><circle cx="395.4" cy="323.8" r="2.5" fill="#fff" opacity=".92"/><circle cx="347.8" cy="359.9" r="3" fill="#fff" opacity=".92"/><circle cx="354.9" cy="360.2" r="2" fill="#fff" opacity=".92"/><circle cx="381.6" cy="352.8" r="2" fill="#fff" opacity=".92"/><circle cx="355.1" cy="355.3" r="2" fill="#fff" opacity=".92"/><circle cx="392.8" cy="328.9" r="2" fill="#fff" opacity=".92"/><circle cx="402.6" cy="333.4" r="1.5" fill="#fff" opacity=".92"/><circle cx="372.5" cy="313.7" r="3" fill="#fff" opacity=".92"/><circle cx="387.9" cy="332.6" r="2" fill="#fff" opacity=".92"/><circle cx="363.0" cy="362.0" r="2" fill="#fff" opacity=".92"/><circle cx="547.7" cy="344.5" r="2.5" fill="#fff" opacity=".92"/><circle cx="548.0" cy="360.4" r="2.5" fill="#fff" opacity=".92"/><circle cx="623.1" cy="369.5" r="3" fill="#fff" opacity=".92"/><circle cx="523.0" cy="371.4" r="1.5" fill="#fff" opacity=".92"/><circle cx="606.4" cy="368.0" r="2.5" fill="#fff" opacity=".92"/><circle cx="815.6" cy="379.3" r="2.5" fill="#fff" opacity=".92"/><circle cx="800.1" cy="435.4" r="3" fill="#fff" opacity=".92"/><circle cx="848.3" cy="447.9" r="2" fill="#fff" opacity=".92"/><circle cx="863.3" cy="435.0" r="2" fill="#fff" opacity=".92"/><circle cx="876.9" cy="375.2" r="1.5" fill="#fff" opacity=".92"/><circle cx="858.1" cy="422.9" r="1.5" fill="#fff" opacity=".92"/><circle cx="806.7" cy="427.9" r="1.2" fill="#fff" opacity=".92"/><circle cx="914.1" cy="451.4" r="1.5" fill="#fff" opacity=".92"/><circle cx="394.7" cy="495.7" r="2" fill="#fff" opacity=".92"/><circle cx="540.9" cy="502.7" r="3" fill="#fff" opacity=".92"/><circle cx="391.7" cy="502.3" r="2.5" fill="#fff" opacity=".92"/><circle cx="492.0" cy="494.4" r="1.5" fill="#fff" opacity=".92"/><circle cx="424.1" cy="511.1" r="1.2" fill="#fff" opacity=".92"/><circle cx="442.1" cy="512.0" r="2.5" fill="#fff" opacity=".92"/><circle cx="78.0" cy="405.6" r="3" fill="#fff" opacity=".92"/><circle cx="48.4" cy="379.4" r="3" fill="#fff" opacity=".92"/><circle cx="44.1" cy="389.8" r="3" fill="#fff" opacity=".92"/><circle cx="46.4" cy="401.2" r="2" fill="#fff" opacity=".92"/></svg>
<div class="t" style="left:27px;top:724.2px;font-size:28px;font-weight:400;color:#444;letter-spacing:0.1px">Detailed scores</div>
<svg class="a" style="left:1090px;top:727px" width="26" height="26" viewBox="0 0 26 26"><path d="M23.5 12.8H5M12.5 3.5L3.5 12.8L12.5 22" fill="none" stroke="#c8102e" stroke-width="3.2" stroke-linecap="round" stroke-linejoin="round"/></svg>
<div class="t" style="left:1127px;top:724.7px;font-size:21px;font-weight:400;color:#c8102e;letter-spacing:-0.3px">Back</div>
<svg class="a" style="left:1195px;top:731px" width="24" height="20" viewBox="0 0 24 20"><path d="M5.5 17.5a4.3 4.3 0 0 1-.6-8.6A6.5 6.5 0 0 1 17.3 7.5a4.8 4.8 0 0 1 .7 10z" fill="#444"/><path d="M11.8 16V9.5M8.8 12.2l3-3 3 3" fill="none" stroke="#fff" stroke-width="1.5"/></svg>
<div class="t" style="left:1230px;top:724.7px;font-size:21px;font-weight:400;color:#555;">Publish</div>
<svg class="a" style="left:1324px;top:727px" width="24" height="30" viewBox="0 0 24 30"><path d="M2.5 2.5h12l6.5 6.5v18.5H2.5z" fill="none" stroke="#444" stroke-width="2.6" stroke-linejoin="round"/><path d="M14.5 2.5v6.5h6.5" fill="none" stroke="#444" stroke-width="2"/><path d="M6.8 15.5h10M6.8 20h10" stroke="#444" stroke-width="2.3"/></svg>
<div class="t" style="left:1359px;top:724.7px;font-size:21px;font-weight:400;color:#555;">Show log</div>
<svg class="a" style="left:1469px;top:728px" width="24" height="25" viewBox="0 0 24 25"><path d="M9.5 1h5v9h4.5L12 17.5 5 10h4.5z" fill="#444"/><path d="M1 15h6.5l4.5 4.5 4.5-4.5H23v9H1z" fill="#444"/><rect x="16" y="20" width="2" height="2" fill="#fff"/><rect x="19.3" y="20" width="2" height="2" fill="#fff"/></svg>
<div class="t" style="left:1504px;top:724.7px;font-size:21px;font-weight:400;color:#555;letter-spacing:-0.2px">Export as File</div>
<svg class="a" style="left:1656px;top:728px" width="24" height="24" viewBox="0 0 24 24"><path d="M1 3a2 2 0 0 1 2-2h15l5 5v15a2 2 0 0 1-2 2H3a2 2 0 0 1-2-2z" fill="#444"/><rect x="4" y="3.5" width="12" height="6" fill="#fff"/><circle cx="12" cy="15.5" r="3.6" fill="#fff"/></svg>
<div class="t" style="left:1691px;top:724.7px;font-size:21px;font-weight:400;color:#555;letter-spacing:-0.3px">Export as PDF</div>
<svg class="a" style="left:1846px;top:728px" width="24" height="25" viewBox="0 0 24 25"><path d="M9.5 1h5v9h4.5L12 17.5 5 10h4.5z" fill="#444"/><path d="M1 15h6.5l4.5 4.5 4.5-4.5H23v9H1z" fill="#444"/><rect x="16" y="20" width="2" height="2" fill="#fff"/><rect x="19.3" y="20" width="2" height="2" fill="#fff"/></svg>
<div class="t" style="left:1881px;top:724.7px;font-size:21px;font-weight:400;color:#555;letter-spacing:-0.3px">Export as XML</div>
<div class="card" style="left:26px;top:779px;width:2004px;height:545px"></div>
<div class="box" style="left:344px;top:803px;width:292px;height:59px"></div>
<div class="t" style="left:50px;top:819.9px;font-size:24px;font-weight:400;color:#222;letter-spacing:-0.25px">Image Retouching score</div>
<div class="t" style="left:367px;top:818.8px;font-size:23px;font-weight:700;color:#444;">7 622</div>
<div class="box" style="left:344px;top:1031px;width:292px;height:59px"></div>
<div class="t" style="left:50px;top:1047.9px;font-size:24px;font-weight:400;color:#222;letter-spacing:-0.25px">Batch Processing score</div>
<div class="t" style="left:367px;top:1046.8px;font-size:23px;font-weight:700;color:#444;">3 962</div>
<div class="box" style="left:344px;top:875px;width:292px;height:53px"></div>
<div class="t" style="left:50px;top:889.7px;font-size:21px;font-weight:400;color:#222;letter-spacing:-0.1px">Load image</div>
<div class="t" style="left:367px;top:889.7px;font-size:21px;font-weight:700;color:#444;">0.369 s</div>
<div class="box" style="left:1028px;top:875px;width:294px;height:53px"></div>
<div class="t" style="left:735px;top:889.7px;font-size:21px;font-weight:400;color:#222;letter-spacing:-0.1px">Adjust filters</div>
<div class="t" style="left:1052px;top:889.7px;font-size:21px;font-weight:700;color:#444;">0.864 s</div>
<div class="box" style="left:1712px;top:875px;width:294px;height:53px"></div>
<div class="t" style="left:1420px;top:889.7px;font-size:21px;font-weight:400;color:#222;letter-spacing:-0.1px">Flatten image</div>
<div class="t" style="left:1736px;top:889.7px;font-size:21px;font-weight:700;color:#444;">0.495 s</div>
<div class="box" style="left:344px;top:941px;width:292px;height:53px"></div>
<div class="t" style="left:50px;top:955.7px;font-size:21px;font-weight:400;color:#222;letter-spacing:-0.1px">Save as</div>
<div class="t" style="left:367px;top:955.7px;font-size:21px;font-weight:700;color:#444;">48.240 s</div>
<div class="box" style="left:1028px;top:941px;width:294px;height:53px"></div>
<div class="t" style="left:735px;top:955.7px;font-size:21px;font-weight:400;color:#222;letter-spacing:-0.1px">Export image</div>
<div class="t" style="left:1052px;top:955.7px;font-size:21px;font-weight:700;color:#444;">6.105 s</div>
<div class="box" style="left:1712px;top:941px;width:294px;height:53px"></div>
<div class="t" style="left:1420px;top:955.7px;font-size:21px;font-weight:400;color:#222;letter-spacing:-0.1px">Adjust GPU filters</div>
<div class="t" style="left:1736px;top:955.7px;font-size:21px;font-weight:700;color:#444;">11.512 s</div>
<div class="box" style="left:344px;top:1103px;width:292px;height:53px"></div>
<div class="t" style="left:50px;top:1117.7px;font-size:21px;font-weight:400;color:#222;letter-spacing:-0.1px">Import</div>
<div class="t" style="left:367px;top:1117.7px;font-size:21px;font-weight:700;color:#444;">3.226 s</div>
<div class="box" style="left:1028px;top:1103px;width:294px;height:53px"></div>
<div class="t" style="left:735px;top:1117.7px;font-size:21px;font-weight:400;color:#222;letter-spacing:-0.1px">Preview</div>
<div class="t" style="left:1052px;top:1117.7px;font-size:21px;font-weight:700;color:#444;">0.862 s</div>
<div class="box" style="left:1712px;top:1103px;width:294px;height:53px"></div>
<div class="t" style="left:1420px;top:1117.7px;font-size:21px;font-weight:400;color:#222;letter-spacing:-0.1px">Apply presets</div>
<div class="t" style="left:1736px;top:1117.7px;font-size:21px;font-weight:700;color:#444;">0.647 s</div>
<div class="box" style="left:344px;top:1169px;width:292px;height:53px"></div>
<div class="t" style="left:50px;top:1183.7px;font-size:21px;font-weight:400;color:#222;letter-spacing:-0.1px">Edit images</div>
<div class="t" style="left:367px;top:1183.7px;font-size:21px;font-weight:700;color:#444;">4.210 s</div>
<div class="box" style="left:1028px;top:1169px;width:294px;height:53px"></div>
<div class="t" style="left:735px;top:1183.7px;font-size:21px;font-weight:400;color:#222;letter-spacing:-0.1px">Smart preview</div>
<div class="t" style="left:1052px;top:1183.7px;font-size:21px;font-weight:700;color:#444;">7.638 s</div>
<div class="box" style="left:1712px;top:1169px;width:294px;height:53px"></div>
<div class="t" style="left:1420px;top:1183.7px;font-size:21px;font-weight:400;color:#222;letter-spacing:-0.1px">Export</div>
<div class="t" style="left:1736px;top:1183.7px;font-size:21px;font-weight:700;color:#444;">22.269 s</div>
<div class="box" style="left:344px;top:1235px;width:292px;height:53px"></div>
<div class="t" style="left:50px;top:1249.7px;font-size:21px;font-weight:400;color:#222;letter-spacing:-0.1px">Enhance details</div>
<div class="t" style="left:367px;top:1249.7px;font-size:21px;font-weight:700;color:#444;">53.851 s</div>
<div class="box" style="left:1712px;top:1235px;width:294px;height:53px"></div>
<div class="t" style="left:1420px;top:1249.7px;font-size:21px;font-weight:400;color:#222;letter-spacing:-0.1px">Face detect</div>
<div class="t" style="left:1736px;top:1249.7px;font-size:21px;font-weight:700;color:#444;">18.063 s</div>
<div class="card" style="left:26px;top:1337px;width:2004px;height:400px"></div>
<div class="t" style="left:50px;top:1360.3px;font-size:29px;font-weight:700;color:#111;letter-spacing:-0.6px">Monitoring</div>
<div class="t" style="left:1837px;top:1370.0px;font-size:19.5px;font-weight:400;color:#4a4a4a;letter-spacing:-0.2px">Show details</div>
<div class="a" style="left:1956px;top:1370px;width:49px;height:25px;border-radius:13px;background:#ececec;border:1px solid #e2e2e2"></div>
<div class="a" style="left:1956px;top:1370px;width:25px;height:25px;border-radius:50%;background:#fff;box-shadow:1px 2px 4px rgba(0,0,0,.3)"></div>
<svg class="a" style="left:0;top:1400px" width="2000" height="276" viewBox="0 1400 2000 276"><line x1="143" y1="1421" x2="1952" y2="1421" stroke="#e6e6e6" stroke-width="2"/><line x1="143" y1="1445" x2="1952" y2="1445" stroke="#e6e6e6" stroke-width="2"/><line x1="143" y1="1469" x2="1952" y2="1469" stroke="#e6e6e6" stroke-width="2"/><line x1="143" y1="1493" x2="1952" y2="1493" stroke="#e6e6e6" stroke-width="2"/><line x1="143" y1="1517" x2="1952" y2="1517" stroke="#e6e6e6" stroke-width="2"/><line x1="143" y1="1541" x2="1952" y2="1541" stroke="#e6e6e6" stroke-width="2"/><line x1="143" y1="1565" x2="1952" y2="1565" stroke="#e6e6e6" stroke-width="2"/><line x1="143" y1="1589" x2="1952" y2="1589" stroke="#e6e6e6" stroke-width="2"/><line x1="143" y1="1613" x2="1952" y2="1613" stroke="#e6e6e6" stroke-width="2"/><line x1="143" y1="1637" x2="1952" y2="1637" stroke="#e6e6e6" stroke-width="2"/><line x1="143" y1="1661" x2="1952" y2="1661" stroke="#e6e6e6" stroke-width="2"/><line x1="134" y1="1413.5" x2="143" y2="1413.5" stroke="#ccc" stroke-width="1.5"/><line x1="134" y1="1469" x2="143" y2="1469" stroke="#666" stroke-width="1.5"/><line x1="134" y1="1517" x2="143" y2="1517" stroke="#666" stroke-width="1.5"/><line x1="134" y1="1565" x2="143" y2="1565" stroke="#666" stroke-width="1.5"/><line x1="134" y1="1613" x2="143" y2="1613" stroke="#666" stroke-width="1.5"/><line x1="134" y1="1661" x2="143" y2="1661" stroke="#666" stroke-width="1.5"/><line x1="143" y1="1413" x2="143" y2="1676" stroke="#333" stroke-width="1.2" stroke-dasharray="3 2"/><line x1="676" y1="1413" x2="676" y2="1676" stroke="#333" stroke-width="1.2" stroke-dasharray="3 2"/></svg>
<div class="t" style="left:98px;top:1461.1px;font-size:14px;font-weight:400;color:#333;">4500</div>
<div class="t" style="left:98px;top:1509.1px;font-size:14px;font-weight:400;color:#333;">3500</div>
<div class="t" style="left:98px;top:1557.1px;font-size:14px;font-weight:400;color:#333;">2500</div>
<div class="t" style="left:98px;top:1605.1px;font-size:14px;font-weight:400;color:#333;">1500</div>
<div class="t" style="left:106px;top:1653.1px;font-size:14px;font-weight:400;color:#333;">500</div>
<div class="t" style="left:0;top:0;font-size:16px;color:#555;transform-origin:0 0;transform:translate(73px,1652px) rotate(-90deg)">CPU Clock Frequency (MHz)</div>
<div class="t" style="left:0;top:0;font-size:14.4px;color:#444;transform-origin:0 0;transform:translate(146px,1671px) rotate(-90deg)">Image Retouching</div>
<div class="t" style="left:0;top:0;font-size:14.4px;color:#444;transform-origin:0 0;transform:translate(679px,1671px) rotate(-90deg)">Batch Processing</div>
<svg class="a" style="left:0;top:1400px" width="2000" height="276" viewBox="0 1400 2000 276"><path d="M143.0 1442.0 L145.3 1442.0 L147.6 1447.7 L149.9 1540.0 L152.2 1442.0 L154.5 1442.0 L156.8 1442.0 L159.1 1450.3 L161.4 1442.0 L163.7 1540.0 L166.0 1540.0 L168.3 1540.0 L170.6 1540.0 L172.9 1451.7 L175.2 1448.9 L177.5 1442.0 L179.8 1442.0 L182.1 1442.0 L184.4 1442.0 L186.7 1540.0 L189.0 1469.0 L191.3 1442.0 L193.6 1442.0 L195.9 1442.0 L198.2 1448.2 L200.5 1448.0 L202.8 1447.7 L205.1 1442.0 L207.4 1452.0 L209.7 1540.0 L212.0 1442.0 L214.3 1442.0 L216.6 1442.0 L218.9 1442.0 L221.2 1447.2 L223.5 1447.1 L225.8 1540.0 L228.1 1442.0 L230.4 1442.0 L232.7 1447.8 L235.0 1447.2 L237.3 1442.0 L239.6 1450.2 L241.9 1442.0 L244.2 1540.0 L246.5 1540.0 L248.8 1540.0 L251.1 1442.0 L253.4 1442.0 L255.7 1442.0 L258.0 1540.0 L260.3 1540.0 L262.6 1540.0 L264.9 1442.0 L267.2 1540.0 L269.5 1445.0 L271.8 1466.0 L274.1 1442.0 L276.4 1442.0 L278.7 1442.0 L281.0 1450.4 L283.3 1442.0 L285.6 1445.7 L287.9 1540.0 L290.2 1449.1 L292.5 1540.0 L294.8 1445.7 L297.1 1540.0 L299.4 1446.6 L301.7 1442.0 L304.0 1540.0 L306.3 1442.0 L308.6 1540.0 L310.9 1442.0 L313.2 1447.0 L315.5 1442.0 L317.8 1447.9 L320.1 1540.0 L322.4 1445.5 L324.7 1540.0 L327.0 1540.0 L329.3 1442.0 L331.6 1442.0 L333.9 1451.5 L336.2 1442.0 L338.5 1451.1 L340.8 1447.4 L343.1 1442.0 L345.4 1442.0 L347.7 1445.9 L350.0 1446.1 L352.3 1448.8 L354.6 1540.0 L356.9 1442.0 L359.2 1444.6 L361.5 1446.4 L363.8 1451.4 L366.1 1455.8 L368.4 1452.2 L370.7 1447.2 L373.0 1456.8 L375.3 1446.1 L377.6 1443.2 L379.9 1447.0 L382.2 1449.7 L384.5 1443.9 L386.8 1445.6 L389.1 1448.5 L391.4 1451.6 L393.7 1445.0 L396.0 1448.4 L398.3 1456.4 L400.6 1457.7 L402.9 1452.9 L405.2 1453.4 L407.5 1451.8 L409.8 1445.1 L412.1 1443.5 L414.4 1443.3 L416.7 1456.7 L419.0 1453.5 L421.3 1457.4 L423.6 1443.3 L425.9 1452.5 L428.2 1450.2 L430.5 1454.0 L432.8 1447.8 L435.1 1458.0 L437.4 1444.1 L439.7 1451.2 L442.0 1454.1 L444.3 1456.5 L446.6 1454.1 L448.9 1453.6 L451.2 1454.9 L453.5 1456.7 L455.8 1448.3 L458.1 1453.3 L460.4 1456.5 L462.7 1456.1 L465.0 1449.3 L467.3 1454.9 L469.6 1456.0 L471.9 1451.6 L474.2 1452.4 L476.5 1442.0 L478.8 1448.9 L481.1 1442.0 L483.4 1451.9 L485.7 1449.8 L488.0 1442.0 L490.3 1448.6 L492.6 1442.0 L494.9 1444.7 L497.2 1444.2 L499.5 1447.8 L501.8 1442.0 L504.1 1448.0 L506.4 1451.4 L508.7 1442.0 L511.0 1442.0 L513.3 1442.0 L515.6 1445.6 L517.9 1442.0 L520.2 1449.3 L522.5 1442.0 L524.8 1446.6 L527.1 1445.6 L529.4 1442.0 L531.7 1465.0 L534.0 1465.0 L536.3 1446.5 L538.6 1442.0 L540.9 1442.0 L543.2 1450.8 L545.5 1540.0 L547.8 1442.0 L550.1 1442.0 L552.4 1442.0 L554.7 1442.0 L557.0 1442.0 L559.3 1442.0 L561.6 1442.0 L563.9 1442.0 L566.2 1442.0 L568.5 1449.9 L570.8 1442.0 L573.1 1442.0 L575.4 1442.0 L577.7 1443.3 L580.0 1447.0 L582.3 1442.0 L584.6 1443.1 L586.9 1442.0 L589.2 1442.0 L591.5 1442.0 L593.8 1444.7 L596.1 1442.0 L598.4 1442.0 L600.7 1442.0 L603.0 1442.0 L605.3 1442.0 L607.6 1442.0 L609.9 1449.7 L612.2 1442.0 L614.5 1442.0 L616.8 1442.0 L619.1 1442.0 L621.4 1442.0 L623.7 1442.0 L626.0 1444.3 L628.3 1442.0 L630.6 1442.0 L632.9 1442.0 L635.2 1442.0 L637.5 1442.0 L639.8 1445.8 L642.1 1466.0 L644.4 1442.0 L646.7 1448.1 L649.0 1442.0 L651.3 1442.0 L653.6 1442.0 L655.9 1445.6 L658.2 1462.0 L660.5 1448.6 L662.8 1446.2 L665.1 1466.0 L667.4 1442.0 L669.7 1448.7 L672.0 1442.0 L674.3 1444.5 L676.6 1449.9 L678.9 1446.8 L681.2 1445.2 L683.5 1449.0 L685.8 1442.0 L688.1 1442.0 L690.4 1442.0 L692.7 1442.0 L695.0 1446.4 L697.3 1442.0 L699.6 1443.4 L701.9 1444.2 L704.2 1442.0 L706.5 1444.0 L708.8 1442.0 L711.1 1442.0 L713.4 1448.9 L715.7 1442.0 L718.0 1466.0 L720.3 1443.6 L722.6 1442.0 L724.9 1540.0 L727.2 1442.0 L729.5 1447.5 L731.8 1442.0 L734.1 1446.9 L736.4 1442.0 L738.7 1442.0 L741.0 1449.3 L743.3 1442.0 L745.6 1449.8 L747.9 1442.0 L750.2 1442.0 L752.5 1442.0 L754.8 1442.0 L757.1 1466.0 L759.4 1442.0 L761.7 1442.0 L764.0 1446.6 L766.3 1442.0 L768.6 1446.9 L770.9 1442.0 L773.2 1442.0 L775.5 1442.0 L777.8 1442.0 L780.1 1442.0 L782.4 1449.5 L784.7 1442.0 L787.0 1442.0 L789.3 1442.0 L791.6 1442.0 L793.9 1449.3 L796.2 1442.0 L798.5 1442.0 L800.8 1463.0 L803.1 1442.0 L805.4 1443.9 L807.7 1443.2 L810.0 1442.0 L812.3 1442.0 L814.6 1442.0 L816.9 1540.0 L819.2 1442.0 L821.5 1442.0 L823.8 1442.0 L826.1 1443.9 L828.4 1442.0 L830.7 1442.0 L833.0 1463.0 L835.3 1442.0 L837.6 1442.0 L839.9 1442.0 L842.2 1466.0 L844.5 1442.0 L846.8 1442.0 L849.1 1466.0 L851.4 1442.0 L853.7 1442.0 L856.0 1442.0 L858.3 1466.0 L860.6 1444.6 L862.9 1448.7 L865.2 1445.2 L867.5 1442.0 L869.8 1444.5 L872.1 1449.2 L874.4 1442.0 L876.7 1466.0 L879.0 1444.8 L881.3 1442.0 L883.6 1446.0 L885.9 1466.0 L888.2 1442.0 L890.5 1466.0 L892.8 1442.0 L895.1 1442.0 L897.4 1442.0 L899.7 1449.8 L902.0 1442.0 L904.3 1442.0 L906.6 1446.5 L908.9 1442.0 L911.2 1442.0 L913.5 1442.0 L915.8 1442.0 L918.1 1442.0 L920.4 1442.0 L922.7 1442.0 L925.0 1442.0 L927.3 1442.0 L929.6 1442.0 L931.9 1442.0 L934.2 1449.9 L936.5 1443.7 L938.8 1442.0 L941.1 1460.0 L943.4 1445.3 L945.7 1442.0 L948.0 1442.0 L950.3 1442.0 L952.6 1442.0 L954.9 1442.0 L957.2 1448.9 L959.5 1442.0 L961.8 1442.0 L964.1 1445.8 L966.4 1442.0 L968.7 1466.0 L971.0 1442.0 L973.3 1442.0 L975.6 1448.6 L977.9 1449.0 L980.2 1442.0 L982.5 1442.0 L984.8 1442.0 L987.1 1442.0 L989.4 1448.6 L991.7 1442.0 L994.0 1540.0 L996.3 1448.7 L998.6 1442.0 L1000.9 1449.2 L1003.2 1442.0 L1005.5 1448.4 L1007.8 1442.0 L1010.1 1443.5 L1012.4 1442.0 L1014.7 1442.0 L1017.0 1442.0 L1019.3 1442.0 L1021.6 1442.0 L1023.9 1466.0 L1026.2 1442.0 L1028.5 1447.7 L1030.8 1442.0 L1033.1 1442.0 L1035.4 1442.0 L1037.7 1540.0 L1040.0 1442.0 L1042.3 1447.5 L1044.6 1448.3 L1046.9 1443.2 L1049.2 1442.0 L1051.5 1444.8 L1053.8 1466.0 L1056.1 1442.0 L1058.4 1442.0 L1060.7 1446.9 L1063.0 1443.3 L1065.3 1445.3 L1067.6 1453.8 L1069.9 1449.2 L1072.2 1488.0 L1074.5 1454.6 L1076.8 1449.4 L1079.1 1454.9 L1081.4 1450.3 L1083.7 1466.0 L1086.0 1443.0 L1088.3 1449.8 L1090.6 1451.9 L1092.9 1442.6 L1095.2 1454.1 L1097.5 1444.1 L1099.8 1448.1 L1102.1 1444.2 L1104.4 1448.4 L1106.7 1449.9 L1109.0 1442.8 L1111.3 1454.3 L1113.6 1447.5 L1115.9 1448.8 L1118.2 1449.8 L1120.5 1446.8 L1122.8 1540.0 L1125.1 1450.5 L1127.4 1449.3 L1129.7 1445.7 L1132.0 1451.3 L1134.3 1445.8 L1136.6 1442.2 L1138.9 1445.2 L1141.2 1540.0 L1143.5 1444.0 L1145.8 1451.8 L1148.1 1447.1 L1150.4 1453.7 L1152.7 1540.0 L1155.0 1442.7 L1157.3 1454.9 L1159.6 1454.3 L1161.9 1443.0 L1164.2 1453.8 L1166.5 1447.6 L1168.8 1540.0 L1171.1 1454.7 L1173.4 1445.2 L1175.7 1448.8 L1178.0 1454.2 L1180.3 1540.0 L1182.6 1448.1 L1184.9 1467.0 L1187.2 1452.6 L1189.5 1449.8 L1191.8 1443.5 L1194.1 1450.1 L1196.4 1447.9 L1198.7 1444.6 L1201.0 1540.0 L1203.3 1448.9 L1205.6 1443.6 L1207.9 1447.8 L1210.2 1450.7 L1212.5 1447.9 L1214.8 1445.4 L1217.1 1466.0 L1219.4 1447.5 L1221.7 1452.1 L1224.0 1448.9 L1226.3 1455.0 L1228.6 1454.4 L1230.9 1540.0 L1233.2 1445.1 L1235.5 1443.5 L1237.8 1453.6 L1240.1 1452.2 L1242.4 1450.1 L1244.7 1446.7 L1247.0 1467.0 L1249.3 1450.9 L1251.6 1449.3 L1253.9 1449.7 L1256.2 1450.2 L1258.5 1451.8 L1260.8 1540.0 L1263.1 1445.2 L1265.4 1454.7 L1267.7 1453.9 L1270.0 1453.4 L1272.3 1442.5 L1274.6 1442.8 L1276.9 1445.5 L1279.2 1447.5 L1281.5 1450.1 L1283.8 1443.3 L1286.1 1449.0 L1288.4 1442.9 L1290.7 1443.1 L1293.0 1450.8 L1295.3 1449.2 L1297.6 1450.2 L1299.9 1446.9 L1302.2 1448.2 L1304.5 1444.7 L1306.8 1446.5 L1309.1 1451.7 L1311.4 1540.0 L1313.7 1540.0 L1316.0 1540.0 L1318.3 1540.0 L1320.6 1540.0 L1322.9 1452.2 L1325.2 1445.6 L1327.5 1448.1 L1329.8 1446.1 L1332.1 1452.7 L1334.4 1447.4 L1336.7 1450.8 L1339.0 1454.9 L1341.3 1446.9 L1343.6 1449.6 L1345.9 1452.0 L1348.2 1454.0 L1350.5 1448.1 L1352.8 1447.4 L1355.1 1444.2 L1357.4 1453.5 L1359.7 1443.9 L1362.0 1444.0 L1364.3 1449.8 L1366.6 1448.8 L1368.9 1451.2 L1371.2 1446.6 L1373.5 1452.3 L1375.8 1443.9 L1378.1 1445.6 L1380.4 1450.9 L1382.7 1444.0 L1385.0 1446.6 L1387.3 1451.7 L1389.6 1451.3 L1391.9 1446.4 L1394.2 1444.7 L1396.5 1447.3 L1398.8 1451.7 L1401.1 1447.4 L1403.4 1444.4 L1405.7 1451.5 L1408.0 1449.8 L1410.3 1454.0 L1412.6 1454.3 L1414.9 1454.0 L1417.2 1448.3 L1419.5 1452.6 L1421.8 1452.9 L1424.1 1458.4 L1426.4 1444.0 L1428.7 1453.3 L1431.0 1453.6 L1433.3 1451.8 L1435.6 1457.2 L1437.9 1457.5 L1440.2 1451.6 L1442.5 1457.9 L1444.8 1450.2 L1447.1 1454.9 L1449.4 1458.7 L1451.7 1457.2 L1454.0 1454.9 L1456.3 1450.8 L1458.6 1456.6 L1460.9 1442.7 L1463.2 1540.0 L1465.5 1455.8 L1467.8 1452.0 L1470.1 1454.7 L1472.4 1453.5 L1474.7 1458.7 L1477.0 1454.4 L1479.3 1456.5 L1481.6 1458.2 L1483.9 1457.4 L1486.2 1457.7 L1488.5 1457.5 L1490.8 1449.7 L1493.1 1454.7 L1495.4 1457.2 L1497.7 1453.8 L1500.0 1456.7 L1502.3 1445.0 L1504.6 1451.8 L1506.9 1452.6 L1509.2 1442.5 L1511.5 1451.0 L1513.8 1457.0 L1516.1 1450.6 L1518.4 1455.3 L1520.7 1442.3 L1523.0 1451.7 L1525.3 1452.1 L1527.6 1455.4 L1529.9 1451.7 L1532.2 1451.6 L1534.5 1452.8 L1536.8 1457.4 L1539.1 1452.3 L1541.4 1449.3 L1543.7 1454.9 L1546.0 1445.9 L1548.3 1450.4 L1550.6 1448.4 L1552.9 1454.7 L1555.2 1452.5 L1557.5 1447.3 L1559.8 1450.1 L1562.1 1453.3 L1564.4 1456.4 L1566.7 1451.4 L1569.0 1452.9 L1571.3 1457.8 L1573.6 1455.7 L1575.9 1444.1 L1578.2 1451.4 L1580.5 1450.0 L1582.8 1457.6 L1585.1 1450.7 L1587.4 1456.4 L1589.7 1454.3 L1592.0 1458.6 L1594.3 1457.7 L1596.6 1457.1 L1598.9 1458.3 L1601.2 1457.4 L1603.5 1454.9 L1605.8 1451.4 L1608.1 1452.8 L1610.4 1450.7 L1612.7 1454.2 L1615.0 1453.2 L1617.3 1451.0 L1619.6 1454.2 L1621.9 1448.6 L1624.2 1450.1 L1626.5 1456.4 L1628.8 1455.1 L1631.1 1450.1 L1633.4 1448.4 L1635.7 1455.5 L1638.0 1453.4 L1640.3 1452.7 L1642.6 1453.5 L1644.9 1452.3 L1647.2 1456.6 L1649.5 1458.5 L1651.8 1456.5 L1654.1 1457.4 L1656.4 1451.3 L1658.7 1456.1 L1661.0 1451.6 L1663.3 1457.5 L1665.6 1450.8 L1667.9 1451.4 L1670.2 1453.7 L1672.5 1458.3 L1674.8 1454.6 L1677.1 1456.9 L1679.4 1453.5 L1681.7 1453.7 L1684.0 1453.6 L1686.3 1458.8 L1688.6 1455.9 L1690.9 1450.2 L1693.2 1453.1 L1695.5 1451.0 L1697.8 1454.6 L1700.1 1457.4 L1702.4 1451.4 L1704.7 1458.1 L1707.0 1453.2 L1709.3 1451.3 L1711.6 1458.9 L1713.9 1456.4 L1716.2 1451.8 L1718.5 1447.0 L1720.8 1450.7 L1723.1 1455.2 L1725.4 1453.0 L1727.7 1444.9 L1730.0 1451.1 L1732.3 1443.1 L1734.6 1446.3 L1736.9 1455.0 L1739.2 1458.2 L1741.5 1448.5 L1743.8 1451.1 L1746.1 1452.6 L1748.4 1443.9 L1750.7 1457.5 L1753.0 1454.9 L1755.3 1450.3 L1757.6 1458.9 L1759.9 1447.3 L1762.2 1456.0 L1764.5 1453.4 L1766.8 1457.2 L1769.1 1451.8 L1771.4 1451.3 L1773.7 1455.1 L1776.0 1454.7 L1778.3 1455.1 L1780.6 1447.3 L1782.9 1452.3 L1785.2 1442.6 L1787.5 1452.7 L1789.8 1444.3 L1792.1 1457.3 L1794.4 1451.6 L1796.7 1449.5 L1799.0 1448.6 L1801.3 1452.0 L1803.6 1453.0 L1805.9 1454.1 L1808.2 1454.0 L1810.5 1449.8 L1812.8 1457.9 L1815.1 1455.4 L1817.4 1455.7 L1819.7 1448.5 L1822.0 1448.9 L1824.3 1451.1 L1826.6 1456.5 L1828.9 1450.4 L1831.2 1448.8 L1833.5 1540.0 L1835.8 1442.0 L1838.1 1442.0 L1840.4 1442.0 L1842.7 1442.0 L1845.0 1540.0 L1847.3 1451.5 L1849.6 1449.8 L1851.9 1451.8 L1854.2 1446.0 L1856.5 1449.7 L1858.8 1442.9 L1861.1 1443.6 L1863.4 1447.8 L1865.7 1448.5 L1868.0 1447.2 L1870.3 1442.7 L1872.6 1451.0 L1874.9 1448.8 L1877.2 1445.1 L1879.5 1446.0 L1881.8 1447.1 L1884.1 1445.1 L1886.4 1442.9 L1888.7 1453.8 L1891.0 1454.6 L1893.3 1467.0 L1895.6 1453.3 L1897.9 1447.5 L1900.2 1452.5 L1902.5 1444.9 L1904.8 1451.7 L1907.1 1449.4 L1909.4 1453.7 L1911.7 1443.3 L1914.0 1452.3 L1916.3 1443.6 L1918.6 1449.0 L1920.9 1454.4 L1923.2 1442.0 L1925.5 1445.2 L1927.8 1445.9 L1930.1 1446.2 L1932.4 1442.8 L1934.7 1453.6 L1937.0 1452.6 L1939.3 1447.2 L1941.6 1446.6 L1943.9 1449.6" fill="none" stroke="#8b4fca" stroke-width="1.4" stroke-linejoin="round"/></svg>
</div></div></div>
</body></html>
